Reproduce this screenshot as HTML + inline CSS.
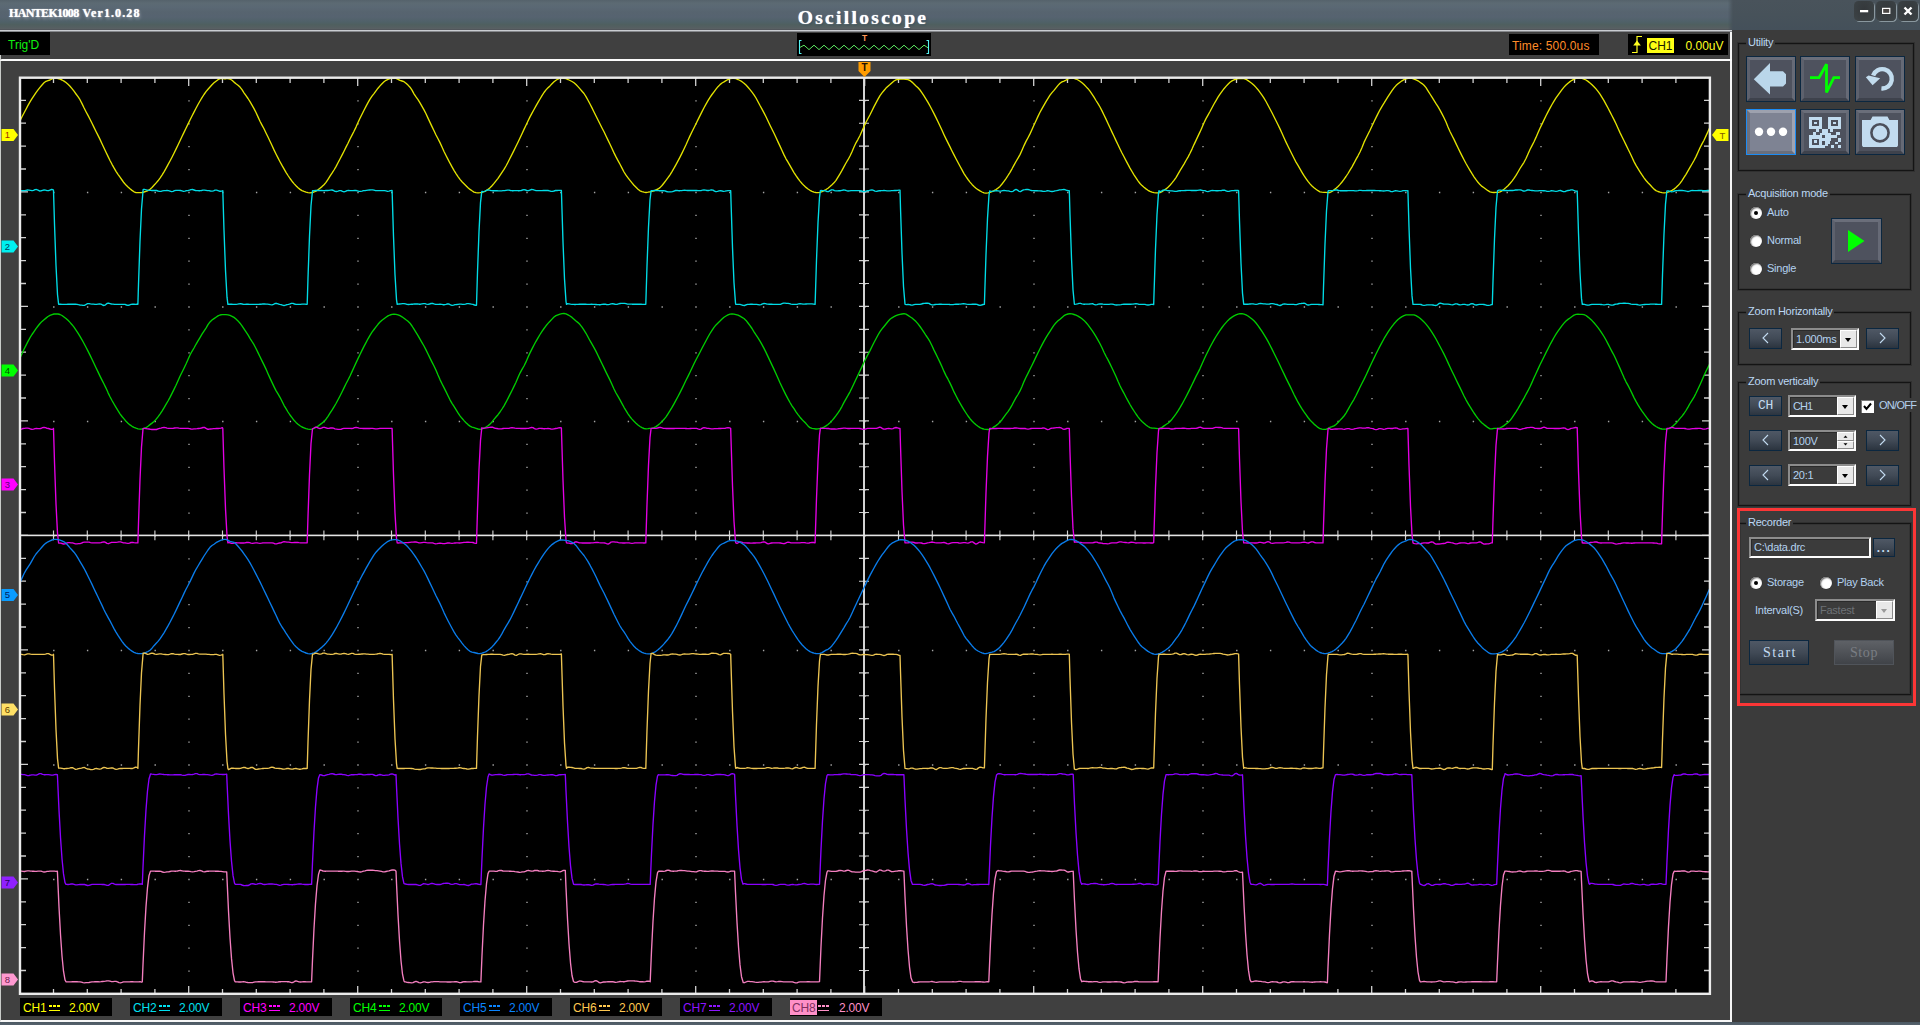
<!DOCTYPE html>
<html>
<head>
<meta charset="utf-8">
<title>HANTEK1008 Ver1.0.28 - Oscilloscope</title>
<style>
*{box-sizing:border-box;margin:0;padding:0}
html,body{width:1920px;height:1025px;overflow:hidden;background:#3b3b3b}
body{position:relative;font-family:"Liberation Sans",sans-serif;font-size:12px;color:#b9d6f2}
.abs{position:absolute}
#title{position:absolute;left:0;top:0;width:1920px;height:30px;
 background:linear-gradient(180deg,#55626b 0%,#5c6a73 10%,#5a6874 24%,#57646f 40%,#566370 57%,#4f6168 73%,#4f5f5f 82%,#555f61 92%,#596063 96%,#4c4f55 100%)}
#titleR{position:absolute;left:1728px;top:0;width:192px;height:30px;
 background:linear-gradient(180deg,#49535b 0%,#47525a 50%,#44505a 100%);
 -webkit-mask:linear-gradient(90deg,transparent 0,#000 5px);mask:linear-gradient(90deg,transparent 0,#000 5px)}
#ttext{position:absolute;left:9px;top:6px;font-family:"Liberation Serif",serif;font-weight:bold;font-size:12px;letter-spacing:0.3px;color:#fff;
 text-shadow:0 0 1px #fff,1px 2px 3px rgba(200,210,220,.45);white-space:pre}
#tt1{letter-spacing:-0.65px}#tt2{letter-spacing:1.1px}
#tcenter{position:absolute;left:797px;top:7px;width:132px;text-align:center;font-family:"Liberation Serif",serif;font-weight:bold;font-size:19.5px;letter-spacing:2.3px;color:#fff;
 text-shadow:0 0 1px #fff,1px 1px 2px rgba(40,60,80,.6);white-space:nowrap}
.wbtn{position:absolute;top:1px;width:20px;height:20px;border-radius:4.5px;background:radial-gradient(ellipse at 50% 40%,#34383b 0%,#3a4043 70%,#3e4548 100%);box-shadow:1px 1px 0 rgba(160,175,182,.75)}
#left{position:absolute;left:0;top:30px;width:1732px;height:992px;background:#404040;
 border-style:solid;border-width:0 2px 2px 1px;border-color:#f6f6f6 #f6f6f6 #f6f6f6 #c9ccc9}
#line1{position:absolute;left:0;top:30px;width:1732px;height:2px;background:linear-gradient(180deg,#c9ccd1 0 50%,#85878b 50% 100%)}
#line2{position:absolute;left:0;top:58.6px;width:1732px;height:2.4px;background:#fbfbfb;border-radius:2px 0 0 0}
#right{position:absolute;left:1732px;top:30px;width:188px;height:992px;background:#3b3b3b}
#bottom{position:absolute;left:0;top:1022px;width:1920px;height:3px;background:linear-gradient(180deg,#4b5862,#56626d)}
.sbox{position:absolute;top:34px;height:21px;background:#000;line-height:21px;white-space:nowrap}
.chbox{position:absolute;top:998px;width:92px;height:18px;background:#000;line-height:20px;overflow:hidden;white-space:nowrap;font-size:12px;padding-left:2px}
.chn.sel{margin-left:-2px;padding-left:2px;padding-right:2px;margin-right:-1px;position:relative;top:-1.3px;line-height:17.6px;overflow:hidden}
.chn{display:inline-block;height:15px;line-height:15px;padding:0 1px 0 1px;vertical-align:middle;letter-spacing:-0.2px}
.dc{display:inline-block;position:relative;width:11px;height:6px;border-bottom:1.6px solid;margin:0 0 1px 2px;vertical-align:middle}
.dc b{position:absolute;left:0;top:0;width:11px;height:1.2px;
 -webkit-mask:repeating-linear-gradient(90deg,#000 0 3px,transparent 3px 4px);mask:repeating-linear-gradient(90deg,#000 0 3px,transparent 3px 4px)}
.chv{position:absolute;left:49px;top:0;letter-spacing:-0.2px}
.grp{position:absolute;border:1px solid #141414;box-shadow:0 0 0 1px rgba(0,0,0,.18), inset 0 0 0 1px rgba(0,0,0,.12)}
.glab{position:absolute;height:14px;line-height:14px;background:#3b3b3b;padding:0 2px;font-size:11px;color:#bcd8f4;white-space:nowrap;letter-spacing:-0.25px}
.lab{position:absolute;font-size:11px;line-height:14px;color:#b4d2f0;white-space:nowrap;letter-spacing:-0.25px}
.ibtn{position:absolute;width:50px;height:46px;background:#0b2740;padding:1px}
.ibtn>i{display:block;width:100%;height:100%;background:#4e525e;border:3px solid;border-color:#6a6e7a #666a76 #3e424c #5d616d}
.ibtn.sel{background:#1c8cf4}
.ibtn.sel>i{background:#7e8393;border-color:#9da1ae #a0a4b2 #6a6f7c #6c707e}
.ibtn svg{position:absolute;left:0;top:0}
.sbtn{position:absolute;height:21px;border:1px solid #0b2740;background:linear-gradient(180deg,#4f5865 0%,#414a56 50%,#2b343f 100%);
 color:#c4dcf2;text-align:center;line-height:18px;font-size:12px}
.sbtn.dis{border-color:#50545a;background:linear-gradient(180deg,#5e6166 0%,#4e5156 55%,#404348 100%);color:#7a7e84}
.mono{font-family:"Liberation Mono",monospace}
.serif{font-family:"Liberation Serif",serif}
.combo{position:absolute;height:22px;background:#3b3b3b;border:2px solid;border-color:#8c8c8c #fdfdfd #fdfdfd #8c8c8c;box-shadow:inset 1px 1px 0 #2a2a2a}
.combo .tx{position:absolute;left:3px;top:2px;font-size:11px;line-height:14px;color:#b4d2f0;white-space:nowrap;letter-spacing:-0.25px}
.combo .dd{position:absolute;right:0;top:0;bottom:0;width:17px;background:#e8e8e8;border:1px solid;border-color:#fff #8a8a8a #8a8a8a #fff}
.combo .dd:after{content:"";position:absolute;left:3.5px;top:6.5px;border:3.5px solid transparent;border-top:4px solid #000;border-bottom:0}
.combo .dd.sp:after{display:none}
.combo.dis .tx{color:#6e7276}
.combo.dis .dd:after{border-top-color:#9a9a9a}
.radio{position:absolute;width:12px;height:12px;border-radius:50%;background:#fff;box-shadow:inset 1px 1px 1.5px #666, 0 0 0 0.5px #333;margin:0.5px}
.radio.on:after{content:"";position:absolute;left:4px;top:4px;width:4px;height:4px;border-radius:50%;background:#000}
</style>
</head>
<body>
<div id="title"></div><div id="titleR"></div>
<div id="ttext"><span id="tt1">HANTEK1008</span><span id="tt2"> Ver1.0.28</span></div>
<div id="tcenter">Oscilloscope</div>
<div class="wbtn" style="left:1854px"><svg width="20" height="20"><rect x="6" y="9" width="8.2" height="2.3" fill="#fff"/></svg></div>
<div class="wbtn" style="left:1876px"><svg width="20" height="20"><rect x="6.6" y="7.4" width="7.2" height="5" fill="#4a4644" stroke="#fff" stroke-width="1.2"/></svg></div>
<div class="wbtn" style="left:1898px"><svg width="20" height="20"><path d="M6.5 6.5L13.5 13.5M13.5 6.5L6.5 13.5" stroke="#fff" stroke-width="2.4"/></svg></div>

<div id="left"></div>
<div id="line1"></div>
<div id="line2"></div>
<div id="right"></div>
<div id="bottom"></div>

<!-- status bar -->
<div class="sbox" style="left:0;top:32px;width:50px;height:23px;line-height:27px;overflow:hidden;color:#10f010;padding-left:8px;font-size:12px">Trig'D</div>
<svg width="134" height="23" viewBox="0 0 134 23" style="position:absolute;left:797px;top:33px">
<rect width="134" height="23" fill="#000"/>
<path d="M4.5 7.5H2.5V20.5H4.5 M129.5 7.5H131.5V20.5H129.5" stroke="#58f4f4" stroke-width="1.1" fill="none"/>
<path d="M3 14.4 L7 12.2 L12 16.6 L17 12.2 L22 16.6 L27 12.2 L32 16.6 L37 12.2 L42 16.6 L47 12.2 L52 16.6 L57 12.2 L62 16.6 L67 12.2 L72 16.6 L77 12.2 L82 16.6 L87 12.2 L92 16.6 L97 12.2 L102 16.6 L107 12.2 L112 16.6 L117 12.2 L122 16.6 L127 12.2 L131 14.8" stroke="#5ce860" stroke-width="1" fill="none" stroke-linejoin="round"/>
<text x="67.5" y="8" font-family="Liberation Sans, sans-serif" font-size="8.5" font-weight="bold" text-anchor="middle" fill="#ff9a58">T</text>
</svg>
<div class="sbox" style="left:1509px;width:90px;color:#ff8c28;padding-left:3px;font-size:12px;line-height:25px;letter-spacing:0.15px;overflow:hidden">Time: 500.0us</div>
<div class="sbox" style="left:1628px;width:100px;color:#ffff20;font-size:12px">
 <svg width="14" height="21" style="position:absolute;left:3px;top:0"><path d="M1 18.5H6V2.5H11" stroke="#ffff20" stroke-width="1.2" fill="none"/><path d="M2.2 11.5L6 6.5L9.8 11.5Z" fill="#ffff20"/></svg>
 <span style="position:absolute;left:19px;top:4px;width:27px;height:14.5px;line-height:17.5px;background:#ffff14;color:#1a1a00;text-align:center;overflow:hidden">CH1</span>
 <span style="position:absolute;left:57.5px;top:2px">0.00uV</span>
</div>

<svg id="plot" width="1732" height="1025" viewBox="0 0 1732 1025" style="position:absolute;left:0;top:0">
<defs><clipPath id="cp"><rect x="20" y="78" width="1690" height="916"/></clipPath></defs>
<rect x="20" y="78" width="1690" height="916" fill="#000"/>
<path d="M19.3 78h1.4M53.1 78h1.4M86.9 78h1.4M120.7 78h1.4M154.5 78h1.4M188.3 78h1.4M222.1 78h1.4M255.9 78h1.4M289.7 78h1.4M323.5 78h1.4M357.3 78h1.4M391.1 78h1.4M424.9 78h1.4M458.7 78h1.4M492.5 78h1.4M526.3 78h1.4M560.1 78h1.4M593.9 78h1.4M627.7 78h1.4M661.5 78h1.4M695.3 78h1.4M729.1 78h1.4M762.9 78h1.4M796.7 78h1.4M830.5 78h1.4M864.3 78h1.4M898.1 78h1.4M931.9 78h1.4M965.7 78h1.4M999.5 78h1.4M1033.3 78h1.4M1067.1 78h1.4M1100.9 78h1.4M1134.7 78h1.4M1168.5 78h1.4M1202.3 78h1.4M1236.1 78h1.4M1269.9 78h1.4M1303.7 78h1.4M1337.5 78h1.4M1371.3 78h1.4M1405.1 78h1.4M1438.9 78h1.4M1472.7 78h1.4M1506.5 78h1.4M1540.3 78h1.4M1574.1 78h1.4M1607.9 78h1.4M1641.7 78h1.4M1675.5 78h1.4M1709.3 78h1.4M19.3 192.5h1.4M53.1 192.5h1.4M86.9 192.5h1.4M120.7 192.5h1.4M154.5 192.5h1.4M188.3 192.5h1.4M222.1 192.5h1.4M255.9 192.5h1.4M289.7 192.5h1.4M323.5 192.5h1.4M357.3 192.5h1.4M391.1 192.5h1.4M424.9 192.5h1.4M458.7 192.5h1.4M492.5 192.5h1.4M526.3 192.5h1.4M560.1 192.5h1.4M593.9 192.5h1.4M627.7 192.5h1.4M661.5 192.5h1.4M695.3 192.5h1.4M729.1 192.5h1.4M762.9 192.5h1.4M796.7 192.5h1.4M830.5 192.5h1.4M864.3 192.5h1.4M898.1 192.5h1.4M931.9 192.5h1.4M965.7 192.5h1.4M999.5 192.5h1.4M1033.3 192.5h1.4M1067.1 192.5h1.4M1100.9 192.5h1.4M1134.7 192.5h1.4M1168.5 192.5h1.4M1202.3 192.5h1.4M1236.1 192.5h1.4M1269.9 192.5h1.4M1303.7 192.5h1.4M1337.5 192.5h1.4M1371.3 192.5h1.4M1405.1 192.5h1.4M1438.9 192.5h1.4M1472.7 192.5h1.4M1506.5 192.5h1.4M1540.3 192.5h1.4M1574.1 192.5h1.4M1607.9 192.5h1.4M1641.7 192.5h1.4M1675.5 192.5h1.4M1709.3 192.5h1.4M19.3 307h1.4M53.1 307h1.4M86.9 307h1.4M120.7 307h1.4M154.5 307h1.4M188.3 307h1.4M222.1 307h1.4M255.9 307h1.4M289.7 307h1.4M323.5 307h1.4M357.3 307h1.4M391.1 307h1.4M424.9 307h1.4M458.7 307h1.4M492.5 307h1.4M526.3 307h1.4M560.1 307h1.4M593.9 307h1.4M627.7 307h1.4M661.5 307h1.4M695.3 307h1.4M729.1 307h1.4M762.9 307h1.4M796.7 307h1.4M830.5 307h1.4M864.3 307h1.4M898.1 307h1.4M931.9 307h1.4M965.7 307h1.4M999.5 307h1.4M1033.3 307h1.4M1067.1 307h1.4M1100.9 307h1.4M1134.7 307h1.4M1168.5 307h1.4M1202.3 307h1.4M1236.1 307h1.4M1269.9 307h1.4M1303.7 307h1.4M1337.5 307h1.4M1371.3 307h1.4M1405.1 307h1.4M1438.9 307h1.4M1472.7 307h1.4M1506.5 307h1.4M1540.3 307h1.4M1574.1 307h1.4M1607.9 307h1.4M1641.7 307h1.4M1675.5 307h1.4M1709.3 307h1.4M19.3 421.5h1.4M53.1 421.5h1.4M86.9 421.5h1.4M120.7 421.5h1.4M154.5 421.5h1.4M188.3 421.5h1.4M222.1 421.5h1.4M255.9 421.5h1.4M289.7 421.5h1.4M323.5 421.5h1.4M357.3 421.5h1.4M391.1 421.5h1.4M424.9 421.5h1.4M458.7 421.5h1.4M492.5 421.5h1.4M526.3 421.5h1.4M560.1 421.5h1.4M593.9 421.5h1.4M627.7 421.5h1.4M661.5 421.5h1.4M695.3 421.5h1.4M729.1 421.5h1.4M762.9 421.5h1.4M796.7 421.5h1.4M830.5 421.5h1.4M864.3 421.5h1.4M898.1 421.5h1.4M931.9 421.5h1.4M965.7 421.5h1.4M999.5 421.5h1.4M1033.3 421.5h1.4M1067.1 421.5h1.4M1100.9 421.5h1.4M1134.7 421.5h1.4M1168.5 421.5h1.4M1202.3 421.5h1.4M1236.1 421.5h1.4M1269.9 421.5h1.4M1303.7 421.5h1.4M1337.5 421.5h1.4M1371.3 421.5h1.4M1405.1 421.5h1.4M1438.9 421.5h1.4M1472.7 421.5h1.4M1506.5 421.5h1.4M1540.3 421.5h1.4M1574.1 421.5h1.4M1607.9 421.5h1.4M1641.7 421.5h1.4M1675.5 421.5h1.4M1709.3 421.5h1.4M19.3 536h1.4M53.1 536h1.4M86.9 536h1.4M120.7 536h1.4M154.5 536h1.4M188.3 536h1.4M222.1 536h1.4M255.9 536h1.4M289.7 536h1.4M323.5 536h1.4M357.3 536h1.4M391.1 536h1.4M424.9 536h1.4M458.7 536h1.4M492.5 536h1.4M526.3 536h1.4M560.1 536h1.4M593.9 536h1.4M627.7 536h1.4M661.5 536h1.4M695.3 536h1.4M729.1 536h1.4M762.9 536h1.4M796.7 536h1.4M830.5 536h1.4M864.3 536h1.4M898.1 536h1.4M931.9 536h1.4M965.7 536h1.4M999.5 536h1.4M1033.3 536h1.4M1067.1 536h1.4M1100.9 536h1.4M1134.7 536h1.4M1168.5 536h1.4M1202.3 536h1.4M1236.1 536h1.4M1269.9 536h1.4M1303.7 536h1.4M1337.5 536h1.4M1371.3 536h1.4M1405.1 536h1.4M1438.9 536h1.4M1472.7 536h1.4M1506.5 536h1.4M1540.3 536h1.4M1574.1 536h1.4M1607.9 536h1.4M1641.7 536h1.4M1675.5 536h1.4M1709.3 536h1.4M19.3 650.5h1.4M53.1 650.5h1.4M86.9 650.5h1.4M120.7 650.5h1.4M154.5 650.5h1.4M188.3 650.5h1.4M222.1 650.5h1.4M255.9 650.5h1.4M289.7 650.5h1.4M323.5 650.5h1.4M357.3 650.5h1.4M391.1 650.5h1.4M424.9 650.5h1.4M458.7 650.5h1.4M492.5 650.5h1.4M526.3 650.5h1.4M560.1 650.5h1.4M593.9 650.5h1.4M627.7 650.5h1.4M661.5 650.5h1.4M695.3 650.5h1.4M729.1 650.5h1.4M762.9 650.5h1.4M796.7 650.5h1.4M830.5 650.5h1.4M864.3 650.5h1.4M898.1 650.5h1.4M931.9 650.5h1.4M965.7 650.5h1.4M999.5 650.5h1.4M1033.3 650.5h1.4M1067.1 650.5h1.4M1100.9 650.5h1.4M1134.7 650.5h1.4M1168.5 650.5h1.4M1202.3 650.5h1.4M1236.1 650.5h1.4M1269.9 650.5h1.4M1303.7 650.5h1.4M1337.5 650.5h1.4M1371.3 650.5h1.4M1405.1 650.5h1.4M1438.9 650.5h1.4M1472.7 650.5h1.4M1506.5 650.5h1.4M1540.3 650.5h1.4M1574.1 650.5h1.4M1607.9 650.5h1.4M1641.7 650.5h1.4M1675.5 650.5h1.4M1709.3 650.5h1.4M19.3 765h1.4M53.1 765h1.4M86.9 765h1.4M120.7 765h1.4M154.5 765h1.4M188.3 765h1.4M222.1 765h1.4M255.9 765h1.4M289.7 765h1.4M323.5 765h1.4M357.3 765h1.4M391.1 765h1.4M424.9 765h1.4M458.7 765h1.4M492.5 765h1.4M526.3 765h1.4M560.1 765h1.4M593.9 765h1.4M627.7 765h1.4M661.5 765h1.4M695.3 765h1.4M729.1 765h1.4M762.9 765h1.4M796.7 765h1.4M830.5 765h1.4M864.3 765h1.4M898.1 765h1.4M931.9 765h1.4M965.7 765h1.4M999.5 765h1.4M1033.3 765h1.4M1067.1 765h1.4M1100.9 765h1.4M1134.7 765h1.4M1168.5 765h1.4M1202.3 765h1.4M1236.1 765h1.4M1269.9 765h1.4M1303.7 765h1.4M1337.5 765h1.4M1371.3 765h1.4M1405.1 765h1.4M1438.9 765h1.4M1472.7 765h1.4M1506.5 765h1.4M1540.3 765h1.4M1574.1 765h1.4M1607.9 765h1.4M1641.7 765h1.4M1675.5 765h1.4M1709.3 765h1.4M19.3 879.5h1.4M53.1 879.5h1.4M86.9 879.5h1.4M120.7 879.5h1.4M154.5 879.5h1.4M188.3 879.5h1.4M222.1 879.5h1.4M255.9 879.5h1.4M289.7 879.5h1.4M323.5 879.5h1.4M357.3 879.5h1.4M391.1 879.5h1.4M424.9 879.5h1.4M458.7 879.5h1.4M492.5 879.5h1.4M526.3 879.5h1.4M560.1 879.5h1.4M593.9 879.5h1.4M627.7 879.5h1.4M661.5 879.5h1.4M695.3 879.5h1.4M729.1 879.5h1.4M762.9 879.5h1.4M796.7 879.5h1.4M830.5 879.5h1.4M864.3 879.5h1.4M898.1 879.5h1.4M931.9 879.5h1.4M965.7 879.5h1.4M999.5 879.5h1.4M1033.3 879.5h1.4M1067.1 879.5h1.4M1100.9 879.5h1.4M1134.7 879.5h1.4M1168.5 879.5h1.4M1202.3 879.5h1.4M1236.1 879.5h1.4M1269.9 879.5h1.4M1303.7 879.5h1.4M1337.5 879.5h1.4M1371.3 879.5h1.4M1405.1 879.5h1.4M1438.9 879.5h1.4M1472.7 879.5h1.4M1506.5 879.5h1.4M1540.3 879.5h1.4M1574.1 879.5h1.4M1607.9 879.5h1.4M1641.7 879.5h1.4M1675.5 879.5h1.4M1709.3 879.5h1.4M19.3 994h1.4M53.1 994h1.4M86.9 994h1.4M120.7 994h1.4M154.5 994h1.4M188.3 994h1.4M222.1 994h1.4M255.9 994h1.4M289.7 994h1.4M323.5 994h1.4M357.3 994h1.4M391.1 994h1.4M424.9 994h1.4M458.7 994h1.4M492.5 994h1.4M526.3 994h1.4M560.1 994h1.4M593.9 994h1.4M627.7 994h1.4M661.5 994h1.4M695.3 994h1.4M729.1 994h1.4M762.9 994h1.4M796.7 994h1.4M830.5 994h1.4M864.3 994h1.4M898.1 994h1.4M931.9 994h1.4M965.7 994h1.4M999.5 994h1.4M1033.3 994h1.4M1067.1 994h1.4M1100.9 994h1.4M1134.7 994h1.4M1168.5 994h1.4M1202.3 994h1.4M1236.1 994h1.4M1269.9 994h1.4M1303.7 994h1.4M1337.5 994h1.4M1371.3 994h1.4M1405.1 994h1.4M1438.9 994h1.4M1472.7 994h1.4M1506.5 994h1.4M1540.3 994h1.4M1574.1 994h1.4M1607.9 994h1.4M1641.7 994h1.4M1675.5 994h1.4M1709.3 994h1.4M19.3 78h1.4M19.3 100.9h1.4M19.3 123.8h1.4M19.3 146.7h1.4M19.3 169.6h1.4M19.3 192.5h1.4M19.3 215.4h1.4M19.3 238.3h1.4M19.3 261.2h1.4M19.3 284.1h1.4M19.3 307h1.4M19.3 329.9h1.4M19.3 352.8h1.4M19.3 375.7h1.4M19.3 398.6h1.4M19.3 421.5h1.4M19.3 444.4h1.4M19.3 467.3h1.4M19.3 490.2h1.4M19.3 513.1h1.4M19.3 536h1.4M19.3 558.9h1.4M19.3 581.8h1.4M19.3 604.7h1.4M19.3 627.6h1.4M19.3 650.5h1.4M19.3 673.4h1.4M19.3 696.3h1.4M19.3 719.2h1.4M19.3 742.1h1.4M19.3 765h1.4M19.3 787.9h1.4M19.3 810.8h1.4M19.3 833.7h1.4M19.3 856.6h1.4M19.3 879.5h1.4M19.3 902.4h1.4M19.3 925.3h1.4M19.3 948.2h1.4M19.3 971.1h1.4M19.3 994h1.4M188.3 78h1.4M188.3 100.9h1.4M188.3 123.8h1.4M188.3 146.7h1.4M188.3 169.6h1.4M188.3 192.5h1.4M188.3 215.4h1.4M188.3 238.3h1.4M188.3 261.2h1.4M188.3 284.1h1.4M188.3 307h1.4M188.3 329.9h1.4M188.3 352.8h1.4M188.3 375.7h1.4M188.3 398.6h1.4M188.3 421.5h1.4M188.3 444.4h1.4M188.3 467.3h1.4M188.3 490.2h1.4M188.3 513.1h1.4M188.3 536h1.4M188.3 558.9h1.4M188.3 581.8h1.4M188.3 604.7h1.4M188.3 627.6h1.4M188.3 650.5h1.4M188.3 673.4h1.4M188.3 696.3h1.4M188.3 719.2h1.4M188.3 742.1h1.4M188.3 765h1.4M188.3 787.9h1.4M188.3 810.8h1.4M188.3 833.7h1.4M188.3 856.6h1.4M188.3 879.5h1.4M188.3 902.4h1.4M188.3 925.3h1.4M188.3 948.2h1.4M188.3 971.1h1.4M188.3 994h1.4M357.3 78h1.4M357.3 100.9h1.4M357.3 123.8h1.4M357.3 146.7h1.4M357.3 169.6h1.4M357.3 192.5h1.4M357.3 215.4h1.4M357.3 238.3h1.4M357.3 261.2h1.4M357.3 284.1h1.4M357.3 307h1.4M357.3 329.9h1.4M357.3 352.8h1.4M357.3 375.7h1.4M357.3 398.6h1.4M357.3 421.5h1.4M357.3 444.4h1.4M357.3 467.3h1.4M357.3 490.2h1.4M357.3 513.1h1.4M357.3 536h1.4M357.3 558.9h1.4M357.3 581.8h1.4M357.3 604.7h1.4M357.3 627.6h1.4M357.3 650.5h1.4M357.3 673.4h1.4M357.3 696.3h1.4M357.3 719.2h1.4M357.3 742.1h1.4M357.3 765h1.4M357.3 787.9h1.4M357.3 810.8h1.4M357.3 833.7h1.4M357.3 856.6h1.4M357.3 879.5h1.4M357.3 902.4h1.4M357.3 925.3h1.4M357.3 948.2h1.4M357.3 971.1h1.4M357.3 994h1.4M526.3 78h1.4M526.3 100.9h1.4M526.3 123.8h1.4M526.3 146.7h1.4M526.3 169.6h1.4M526.3 192.5h1.4M526.3 215.4h1.4M526.3 238.3h1.4M526.3 261.2h1.4M526.3 284.1h1.4M526.3 307h1.4M526.3 329.9h1.4M526.3 352.8h1.4M526.3 375.7h1.4M526.3 398.6h1.4M526.3 421.5h1.4M526.3 444.4h1.4M526.3 467.3h1.4M526.3 490.2h1.4M526.3 513.1h1.4M526.3 536h1.4M526.3 558.9h1.4M526.3 581.8h1.4M526.3 604.7h1.4M526.3 627.6h1.4M526.3 650.5h1.4M526.3 673.4h1.4M526.3 696.3h1.4M526.3 719.2h1.4M526.3 742.1h1.4M526.3 765h1.4M526.3 787.9h1.4M526.3 810.8h1.4M526.3 833.7h1.4M526.3 856.6h1.4M526.3 879.5h1.4M526.3 902.4h1.4M526.3 925.3h1.4M526.3 948.2h1.4M526.3 971.1h1.4M526.3 994h1.4M695.3 78h1.4M695.3 100.9h1.4M695.3 123.8h1.4M695.3 146.7h1.4M695.3 169.6h1.4M695.3 192.5h1.4M695.3 215.4h1.4M695.3 238.3h1.4M695.3 261.2h1.4M695.3 284.1h1.4M695.3 307h1.4M695.3 329.9h1.4M695.3 352.8h1.4M695.3 375.7h1.4M695.3 398.6h1.4M695.3 421.5h1.4M695.3 444.4h1.4M695.3 467.3h1.4M695.3 490.2h1.4M695.3 513.1h1.4M695.3 536h1.4M695.3 558.9h1.4M695.3 581.8h1.4M695.3 604.7h1.4M695.3 627.6h1.4M695.3 650.5h1.4M695.3 673.4h1.4M695.3 696.3h1.4M695.3 719.2h1.4M695.3 742.1h1.4M695.3 765h1.4M695.3 787.9h1.4M695.3 810.8h1.4M695.3 833.7h1.4M695.3 856.6h1.4M695.3 879.5h1.4M695.3 902.4h1.4M695.3 925.3h1.4M695.3 948.2h1.4M695.3 971.1h1.4M695.3 994h1.4M864.3 78h1.4M864.3 100.9h1.4M864.3 123.8h1.4M864.3 146.7h1.4M864.3 169.6h1.4M864.3 192.5h1.4M864.3 215.4h1.4M864.3 238.3h1.4M864.3 261.2h1.4M864.3 284.1h1.4M864.3 307h1.4M864.3 329.9h1.4M864.3 352.8h1.4M864.3 375.7h1.4M864.3 398.6h1.4M864.3 421.5h1.4M864.3 444.4h1.4M864.3 467.3h1.4M864.3 490.2h1.4M864.3 513.1h1.4M864.3 536h1.4M864.3 558.9h1.4M864.3 581.8h1.4M864.3 604.7h1.4M864.3 627.6h1.4M864.3 650.5h1.4M864.3 673.4h1.4M864.3 696.3h1.4M864.3 719.2h1.4M864.3 742.1h1.4M864.3 765h1.4M864.3 787.9h1.4M864.3 810.8h1.4M864.3 833.7h1.4M864.3 856.6h1.4M864.3 879.5h1.4M864.3 902.4h1.4M864.3 925.3h1.4M864.3 948.2h1.4M864.3 971.1h1.4M864.3 994h1.4M1033.3 78h1.4M1033.3 100.9h1.4M1033.3 123.8h1.4M1033.3 146.7h1.4M1033.3 169.6h1.4M1033.3 192.5h1.4M1033.3 215.4h1.4M1033.3 238.3h1.4M1033.3 261.2h1.4M1033.3 284.1h1.4M1033.3 307h1.4M1033.3 329.9h1.4M1033.3 352.8h1.4M1033.3 375.7h1.4M1033.3 398.6h1.4M1033.3 421.5h1.4M1033.3 444.4h1.4M1033.3 467.3h1.4M1033.3 490.2h1.4M1033.3 513.1h1.4M1033.3 536h1.4M1033.3 558.9h1.4M1033.3 581.8h1.4M1033.3 604.7h1.4M1033.3 627.6h1.4M1033.3 650.5h1.4M1033.3 673.4h1.4M1033.3 696.3h1.4M1033.3 719.2h1.4M1033.3 742.1h1.4M1033.3 765h1.4M1033.3 787.9h1.4M1033.3 810.8h1.4M1033.3 833.7h1.4M1033.3 856.6h1.4M1033.3 879.5h1.4M1033.3 902.4h1.4M1033.3 925.3h1.4M1033.3 948.2h1.4M1033.3 971.1h1.4M1033.3 994h1.4M1202.3 78h1.4M1202.3 100.9h1.4M1202.3 123.8h1.4M1202.3 146.7h1.4M1202.3 169.6h1.4M1202.3 192.5h1.4M1202.3 215.4h1.4M1202.3 238.3h1.4M1202.3 261.2h1.4M1202.3 284.1h1.4M1202.3 307h1.4M1202.3 329.9h1.4M1202.3 352.8h1.4M1202.3 375.7h1.4M1202.3 398.6h1.4M1202.3 421.5h1.4M1202.3 444.4h1.4M1202.3 467.3h1.4M1202.3 490.2h1.4M1202.3 513.1h1.4M1202.3 536h1.4M1202.3 558.9h1.4M1202.3 581.8h1.4M1202.3 604.7h1.4M1202.3 627.6h1.4M1202.3 650.5h1.4M1202.3 673.4h1.4M1202.3 696.3h1.4M1202.3 719.2h1.4M1202.3 742.1h1.4M1202.3 765h1.4M1202.3 787.9h1.4M1202.3 810.8h1.4M1202.3 833.7h1.4M1202.3 856.6h1.4M1202.3 879.5h1.4M1202.3 902.4h1.4M1202.3 925.3h1.4M1202.3 948.2h1.4M1202.3 971.1h1.4M1202.3 994h1.4M1371.3 78h1.4M1371.3 100.9h1.4M1371.3 123.8h1.4M1371.3 146.7h1.4M1371.3 169.6h1.4M1371.3 192.5h1.4M1371.3 215.4h1.4M1371.3 238.3h1.4M1371.3 261.2h1.4M1371.3 284.1h1.4M1371.3 307h1.4M1371.3 329.9h1.4M1371.3 352.8h1.4M1371.3 375.7h1.4M1371.3 398.6h1.4M1371.3 421.5h1.4M1371.3 444.4h1.4M1371.3 467.3h1.4M1371.3 490.2h1.4M1371.3 513.1h1.4M1371.3 536h1.4M1371.3 558.9h1.4M1371.3 581.8h1.4M1371.3 604.7h1.4M1371.3 627.6h1.4M1371.3 650.5h1.4M1371.3 673.4h1.4M1371.3 696.3h1.4M1371.3 719.2h1.4M1371.3 742.1h1.4M1371.3 765h1.4M1371.3 787.9h1.4M1371.3 810.8h1.4M1371.3 833.7h1.4M1371.3 856.6h1.4M1371.3 879.5h1.4M1371.3 902.4h1.4M1371.3 925.3h1.4M1371.3 948.2h1.4M1371.3 971.1h1.4M1371.3 994h1.4M1540.3 78h1.4M1540.3 100.9h1.4M1540.3 123.8h1.4M1540.3 146.7h1.4M1540.3 169.6h1.4M1540.3 192.5h1.4M1540.3 215.4h1.4M1540.3 238.3h1.4M1540.3 261.2h1.4M1540.3 284.1h1.4M1540.3 307h1.4M1540.3 329.9h1.4M1540.3 352.8h1.4M1540.3 375.7h1.4M1540.3 398.6h1.4M1540.3 421.5h1.4M1540.3 444.4h1.4M1540.3 467.3h1.4M1540.3 490.2h1.4M1540.3 513.1h1.4M1540.3 536h1.4M1540.3 558.9h1.4M1540.3 581.8h1.4M1540.3 604.7h1.4M1540.3 627.6h1.4M1540.3 650.5h1.4M1540.3 673.4h1.4M1540.3 696.3h1.4M1540.3 719.2h1.4M1540.3 742.1h1.4M1540.3 765h1.4M1540.3 787.9h1.4M1540.3 810.8h1.4M1540.3 833.7h1.4M1540.3 856.6h1.4M1540.3 879.5h1.4M1540.3 902.4h1.4M1540.3 925.3h1.4M1540.3 948.2h1.4M1540.3 971.1h1.4M1540.3 994h1.4M1709.3 78h1.4M1709.3 100.9h1.4M1709.3 123.8h1.4M1709.3 146.7h1.4M1709.3 169.6h1.4M1709.3 192.5h1.4M1709.3 215.4h1.4M1709.3 238.3h1.4M1709.3 261.2h1.4M1709.3 284.1h1.4M1709.3 307h1.4M1709.3 329.9h1.4M1709.3 352.8h1.4M1709.3 375.7h1.4M1709.3 398.6h1.4M1709.3 421.5h1.4M1709.3 444.4h1.4M1709.3 467.3h1.4M1709.3 490.2h1.4M1709.3 513.1h1.4M1709.3 536h1.4M1709.3 558.9h1.4M1709.3 581.8h1.4M1709.3 604.7h1.4M1709.3 627.6h1.4M1709.3 650.5h1.4M1709.3 673.4h1.4M1709.3 696.3h1.4M1709.3 719.2h1.4M1709.3 742.1h1.4M1709.3 765h1.4M1709.3 787.9h1.4M1709.3 810.8h1.4M1709.3 833.7h1.4M1709.3 856.6h1.4M1709.3 879.5h1.4M1709.3 902.4h1.4M1709.3 925.3h1.4M1709.3 948.2h1.4M1709.3 971.1h1.4M1709.3 994h1.4" stroke="#a4a4a4" stroke-width="1.3" fill="none"/>
<path d="M53.5 78v5M53.5 994v-5M87.3 78v5M87.3 994v-5M121.1 78v5M121.1 994v-5M154.9 78v5M154.9 994v-5M188.7 78v8M188.7 994v-8M222.5 78v5M222.5 994v-5M256.3 78v5M256.3 994v-5M290.1 78v5M290.1 994v-5M323.9 78v5M323.9 994v-5M357.7 78v8M357.7 994v-8M391.5 78v5M391.5 994v-5M425.3 78v5M425.3 994v-5M459.1 78v5M459.1 994v-5M492.9 78v5M492.9 994v-5M526.7 78v8M526.7 994v-8M560.5 78v5M560.5 994v-5M594.3 78v5M594.3 994v-5M628.1 78v5M628.1 994v-5M661.9 78v5M661.9 994v-5M695.7 78v8M695.7 994v-8M729.5 78v5M729.5 994v-5M763.3 78v5M763.3 994v-5M797.1 78v5M797.1 994v-5M830.9 78v5M830.9 994v-5M864.7 78v8M864.7 994v-8M898.5 78v5M898.5 994v-5M932.3 78v5M932.3 994v-5M966.1 78v5M966.1 994v-5M999.9 78v5M999.9 994v-5M1033.7 78v8M1033.7 994v-8M1067.5 78v5M1067.5 994v-5M1101.3 78v5M1101.3 994v-5M1135.1 78v5M1135.1 994v-5M1168.9 78v5M1168.9 994v-5M1202.7 78v8M1202.7 994v-8M1236.5 78v5M1236.5 994v-5M1270.3 78v5M1270.3 994v-5M1304.1 78v5M1304.1 994v-5M1337.9 78v5M1337.9 994v-5M1371.7 78v8M1371.7 994v-8M1405.5 78v5M1405.5 994v-5M1439.3 78v5M1439.3 994v-5M1473.1 78v5M1473.1 994v-5M1506.9 78v5M1506.9 994v-5M1540.7 78v8M1540.7 994v-8M1574.5 78v5M1574.5 994v-5M1608.3 78v5M1608.3 994v-5M1642.1 78v5M1642.1 994v-5M1675.9 78v5M1675.9 994v-5M20 100.3h6M1710 100.3h-6M20 123.2h6M1710 123.2h-6M20 146.1h6M1710 146.1h-6M20 169h6M1710 169h-6M20 191.9h8M1710 191.9h-8M20 214.8h6M1710 214.8h-6M20 237.7h6M1710 237.7h-6M20 260.6h6M1710 260.6h-6M20 283.5h6M1710 283.5h-6M20 306.4h8M1710 306.4h-8M20 329.3h6M1710 329.3h-6M20 352.2h6M1710 352.2h-6M20 375.1h6M1710 375.1h-6M20 398h6M1710 398h-6M20 420.9h8M1710 420.9h-8M20 443.8h6M1710 443.8h-6M20 466.7h6M1710 466.7h-6M20 489.6h6M1710 489.6h-6M20 512.5h6M1710 512.5h-6M20 535.4h8M1710 535.4h-8M20 558.3h6M1710 558.3h-6M20 581.2h6M1710 581.2h-6M20 604.1h6M1710 604.1h-6M20 627h6M1710 627h-6M20 649.9h8M1710 649.9h-8M20 672.8h6M1710 672.8h-6M20 695.7h6M1710 695.7h-6M20 718.6h6M1710 718.6h-6M20 741.5h6M1710 741.5h-6M20 764.4h8M1710 764.4h-8M20 787.3h6M1710 787.3h-6M20 810.2h6M1710 810.2h-6M20 833.1h6M1710 833.1h-6M20 856h6M1710 856h-6M20 878.9h8M1710 878.9h-8M20 901.8h6M1710 901.8h-6M20 924.7h6M1710 924.7h-6M20 947.6h6M1710 947.6h-6M20 970.5h6M1710 970.5h-6" stroke="#d0d0d0" stroke-width="1.3" fill="none"/>
<path d="M53.5 530.6v9.6M87.3 530.6v9.6M121.1 530.6v9.6M154.9 530.6v9.6M188.7 530.6v9.6M222.5 530.6v9.6M256.3 530.6v9.6M290.1 530.6v9.6M323.9 530.6v9.6M357.7 530.6v9.6M391.5 530.6v9.6M425.3 530.6v9.6M459.1 530.6v9.6M492.9 530.6v9.6M526.7 530.6v9.6M560.5 530.6v9.6M594.3 530.6v9.6M628.1 530.6v9.6M661.9 530.6v9.6M695.7 530.6v9.6M729.5 530.6v9.6M763.3 530.6v9.6M797.1 530.6v9.6M830.9 530.6v9.6M898.5 530.6v9.6M932.3 530.6v9.6M966.1 530.6v9.6M999.9 530.6v9.6M1033.7 530.6v9.6M1067.5 530.6v9.6M1101.3 530.6v9.6M1135.1 530.6v9.6M1168.9 530.6v9.6M1202.7 530.6v9.6M1236.5 530.6v9.6M1270.3 530.6v9.6M1304.1 530.6v9.6M1337.9 530.6v9.6M1371.7 530.6v9.6M1405.5 530.6v9.6M1439.3 530.6v9.6M1473.1 530.6v9.6M1506.9 530.6v9.6M1540.7 530.6v9.6M1574.5 530.6v9.6M1608.3 530.6v9.6M1642.1 530.6v9.6M1675.9 530.6v9.6M859 100.3h10M859 123.2h10M859 146.1h10M859 169h10M859 191.9h10M859 214.8h10M859 237.7h10M859 260.6h10M859 283.5h10M859 306.4h10M859 329.3h10M859 352.2h10M859 375.1h10M859 398h10M859 420.9h10M859 443.8h10M859 466.7h10M859 489.6h10M859 512.5h10M859 558.3h10M859 581.2h10M859 604.1h10M859 627h10M859 649.9h10M859 672.8h10M859 695.7h10M859 718.6h10M859 741.5h10M859 764.4h10M859 787.3h10M859 810.2h10M859 833.1h10M859 856h10M859 878.9h10M859 901.8h10M859 924.7h10M859 947.6h10M859 970.5h10" stroke="#cfcfcf" stroke-width="1.15" fill="none"/>
<rect x="863.05" y="78" width="1.9" height="916" fill="#dedede"/>
<rect x="20" y="534.6" width="1690" height="1.6" fill="#e4e4e4"/>
<g clip-path="url(#cp)" fill="none" stroke-width="1.35" stroke-linejoin="round">
<path d="M20 120.6 L22 116.7 L24 113 L26 109.2 L28 105.4 L30 101.8 L32 98.6 L34 95.6 L36 92.6 L38 89.9 L40 87.4 L42 85 L44 82.8 L46 81.3 L48 80.6 L50 80 L52 79 L54 78 L56 77.9 L58 78.5 L60 79.2 L62 80 L64 81.1 L66 82.5 L68 84.2 L70 86.2 L72 88.6 L74 91.2 L76 94 L78 96.7 L80 99.7 L82 103.6 L84 107.8 L86 111.7 L88 115.4 L90 119.3 L92 123.3 L94 127.4 L96 131.5 L98 135.4 L100 139.4 L102 143.7 L104 148 L106 152.2 L108 156.4 L110 160.5 L112 164.3 L114 167.9 L116 171.3 L118 174.3 L120 177.1 L122 180 L124 182.8 L126 185.1 L128 187.1 L130 188.8 L132 190.4 L134 191.8 L136 192.6 L138 192.7 L140 192.6 L142 192.5 L144 192 L146 191.3 L148 190.5 L150 189.3 L152 187.5 L154 185.3 L156 183.1 L158 180.8 L160 178.1 L162 175.1 L164 171.8 L166 168.3 L168 164.7 L170 161 L172 157.2 L174 153.2 L176 149.1 L178 145 L180 140.7 L182 136.5 L184 132.4 L186 128.2 L188 124.1 L190 120 L192 116 L194 112.1 L196 108.3 L198 104.5 L200 101 L202 97.7 L204 94.5 L206 91.6 L208 89.2 L210 87 L212 84.8 L214 82.8 L216 81.2 L218 79.7 L220 78.6 L222 78.4 L224 78.7 L226 78.7 L228 78.6 L230 79 L232 80.3 L234 82.1 L236 83.7 L238 85.2 L240 87.1 L242 89.7 L244 92.8 L246 95.7 L248 98.5 L250 101.7 L252 105.1 L254 108.6 L256 112.5 L258 116.9 L260 121.2 L262 125.1 L264 128.8 L266 133 L268 137 L270 141.2 L272 145.5 L274 149.9 L276 154 L278 157.9 L280 161.7 L282 165.4 L284 168.9 L286 172.3 L288 175.5 L290 178.5 L292 181.2 L294 183.6 L296 185.8 L298 187.8 L300 189.4 L302 190.6 L304 191.4 L306 192.1 L308 192.6 L310 192.8 L312 192.5 L314 192 L316 191.1 L318 189.8 L320 188.2 L322 186.6 L324 184.7 L326 182.4 L328 179.3 L330 176.2 L332 173.2 L334 170 L336 166.6 L338 162.8 L340 159 L342 155.1 L344 151.2 L346 147.1 L348 143.2 L350 139 L352 135.1 L354 131.3 L356 127.1 L358 122.5 L360 118.2 L362 114.2 L364 110.2 L366 106.4 L368 102.6 L370 99.1 L372 96.1 L374 93.6 L376 90.9 L378 88.2 L380 85.9 L382 83.7 L384 81.7 L386 80.3 L388 79.3 L390 78.6 L392 78.2 L394 78.2 L396 78.4 L398 79.3 L400 80.4 L402 81 L404 81.7 L406 83.2 L408 85.1 L410 87.2 L412 90.2 L414 93.8 L416 96.9 L418 99.7 L420 102.8 L422 106.3 L424 109.9 L426 113.8 L428 118.1 L430 122.4 L432 126.6 L434 130.8 L436 135 L438 138.7 L440 142.6 L442 147 L444 151.5 L446 155.5 L448 159.4 L450 163.2 L452 166.8 L454 170.3 L456 173.6 L458 176.6 L460 179.4 L462 181.8 L464 183.7 L466 185.7 L468 187.7 L470 189.4 L472 190.8 L474 192.1 L476 192.7 L478 192.8 L480 192.6 L482 192.3 L484 191.7 L486 190.8 L488 189.4 L490 187.7 L492 185.7 L494 183.4 L496 180.9 L498 178.3 L500 175.3 L502 172.4 L504 169.4 L506 166 L508 162.2 L510 158.3 L512 154.4 L514 150.4 L516 146.3 L518 142.2 L520 138 L522 133.7 L524 129.4 L526 125.2 L528 121 L530 116.9 L532 113.1 L534 109.5 L536 105.9 L538 102.4 L540 99 L542 95.7 L544 92.5 L546 89.9 L548 87.8 L550 85.9 L552 83.8 L554 81.7 L556 80.3 L558 79 L560 78.2 L562 78 L564 78.3 L566 78.7 L568 79.5 L570 80.5 L572 81.5 L574 82.8 L576 84.5 L578 86.6 L580 88.9 L582 91.2 L584 93.5 L586 96.6 L588 100.3 L590 104 L592 107.9 L594 112 L596 116 L598 120 L600 124 L602 128 L604 131.8 L606 136 L608 140.1 L610 144.2 L612 148.5 L614 152.9 L616 156.9 L618 160.6 L620 164.3 L622 168.1 L624 172 L626 175.2 L628 177.8 L630 180.3 L632 182.8 L634 185.2 L636 187.2 L638 189.2 L640 190.8 L642 191.7 L644 192.2 L646 192.5 L648 192.2 L650 191.8 L652 191.4 L654 190.8 L656 189.8 L658 189 L660 187.6 L662 185.5 L664 183 L666 180.4 L668 177.7 L670 174.8 L672 171.6 L674 168.2 L676 164.6 L678 160.9 L680 157.1 L682 153.1 L684 149 L686 144.8 L688 140.3 L690 135.9 L692 131.8 L694 127.8 L696 123.7 L698 119.6 L700 115.6 L702 111.6 L704 107.8 L706 104.1 L708 100.7 L710 97.4 L712 94.5 L714 91.8 L716 89.2 L718 86.7 L720 84.6 L722 83 L724 81.9 L726 80.7 L728 79.5 L730 78.7 L732 78.4 L734 78.3 L736 78.7 L738 79.5 L740 80.5 L742 81.7 L744 83.2 L746 85 L748 87.2 L750 89.6 L752 92.2 L754 94.9 L756 98 L758 101.7 L760 105.5 L762 109.1 L764 112.9 L766 116.8 L768 121 L770 125.2 L772 129.3 L774 133.3 L776 137.5 L778 141.9 L780 146.1 L782 150.5 L784 154.9 L786 158.8 L788 162.2 L790 165.7 L792 169.2 L794 172.6 L796 175.7 L798 178.5 L800 181.1 L802 183.5 L804 185.6 L806 187.4 L808 189 L810 190.3 L812 191.3 L814 192.1 L816 192.5 L818 192.6 L820 192.4 L822 191.7 L824 190.7 L826 189.5 L828 188.2 L830 186.5 L832 184.7 L834 182.8 L836 180.3 L838 177.1 L840 173.8 L842 170.4 L844 166.6 L846 163 L848 159.7 L850 156 L852 151.7 L854 147 L856 142.8 L858 139.3 L860 135.5 L862 131 L864 126.4 L866 122.2 L868 118.5 L870 114.8 L872 110.7 L874 106.6 L876 102.9 L878 99.1 L880 95.6 L882 92.9 L884 90.5 L886 88.1 L888 86.3 L890 84.6 L892 82.7 L894 81 L896 79.8 L898 79.3 L900 79 L902 78.9 L904 79 L906 79.4 L908 79.7 L910 80.5 L912 82.1 L914 84 L916 85.9 L918 87.7 L920 90 L922 92.8 L924 95.9 L926 99.1 L928 102.4 L930 106 L932 109.7 L934 113.6 L936 117.6 L938 121.8 L940 126 L942 130.3 L944 134.7 L946 138.9 L948 142.9 L950 146.9 L952 151 L954 154.9 L956 158.7 L958 162.5 L960 166.2 L962 169.9 L964 173.6 L966 176.7 L968 179.5 L970 182.1 L972 184.4 L974 186.4 L976 188.2 L978 189.7 L980 190.9 L982 192 L984 192.9 L986 193.2 L988 192.8 L990 192.3 L992 191.6 L994 190.7 L996 189.5 L998 188.1 L1000 186.4 L1002 184 L1004 181.3 L1006 178.6 L1008 175.5 L1010 172.3 L1012 168.8 L1014 165.1 L1016 161.5 L1018 158.2 L1020 154.6 L1022 150.2 L1024 145.6 L1026 141.4 L1028 137.7 L1030 133.9 L1032 129.5 L1034 125 L1036 120.8 L1038 116.4 L1040 112.3 L1042 108.6 L1044 105.1 L1046 101.6 L1048 98.3 L1050 95.2 L1052 92.6 L1054 90.4 L1056 87.9 L1058 85.4 L1060 83.3 L1062 81.9 L1064 81.1 L1066 80.1 L1068 78.8 L1070 78.1 L1072 78.1 L1074 78.4 L1076 79 L1078 80 L1080 81.3 L1082 82.8 L1084 84.5 L1086 86.6 L1088 88.7 L1090 91.2 L1092 94.1 L1094 97.2 L1096 100.5 L1098 103.6 L1100 107 L1102 110.9 L1104 115 L1106 119.1 L1108 123.5 L1110 127.8 L1112 132.1 L1114 136.3 L1116 140.6 L1118 144.8 L1120 149 L1122 153 L1124 156.7 L1126 160.6 L1128 164.4 L1130 168.1 L1132 171.5 L1134 174.8 L1136 177.8 L1138 180.8 L1140 183.5 L1142 185.6 L1144 187.3 L1146 188.9 L1148 190.3 L1150 191.4 L1152 192.2 L1154 192.6 L1156 192.8 L1158 192.9 L1160 192.6 L1162 191.6 L1164 190.3 L1166 188.9 L1168 187.2 L1170 185.2 L1172 182.9 L1174 180.4 L1176 177.6 L1178 174.1 L1180 170.6 L1182 167.4 L1184 164.1 L1186 160.5 L1188 157.1 L1190 153.3 L1192 149.1 L1194 144.6 L1196 140.4 L1198 136.1 L1200 131.9 L1202 127.4 L1204 122.7 L1206 118.6 L1208 115.1 L1210 111.5 L1212 107.7 L1214 104 L1216 100.6 L1218 97.2 L1220 94.1 L1222 91.3 L1224 88.7 L1226 86.4 L1228 84.2 L1230 82.3 L1232 80.9 L1234 79.9 L1236 79.1 L1238 78.6 L1240 78.5 L1242 78.4 L1244 78.6 L1246 79.3 L1248 80.6 L1250 82 L1252 83.5 L1254 85.3 L1256 87.4 L1258 89.7 L1260 92.4 L1262 95.2 L1264 98.2 L1266 101.5 L1268 105.2 L1270 109 L1272 112.8 L1274 116.8 L1276 120.8 L1278 124.8 L1280 128.9 L1282 133.3 L1284 137.8 L1286 142.1 L1288 146.2 L1290 150.3 L1292 154.3 L1294 158.3 L1296 162.1 L1298 165.4 L1300 168.8 L1302 172.3 L1304 175.7 L1306 178.6 L1308 181.4 L1310 183.9 L1312 186 L1314 187.7 L1316 189.3 L1318 190.7 L1320 191.8 L1322 192.2 L1324 192.3 L1326 192.4 L1328 192.7 L1330 192.5 L1332 191.4 L1334 189.9 L1336 188.3 L1338 186.5 L1340 184.4 L1342 182 L1344 179.3 L1346 176.5 L1348 173.5 L1350 170.2 L1352 166.8 L1354 163.2 L1356 159.4 L1358 155.8 L1360 152 L1362 147.4 L1364 142.4 L1366 138.2 L1368 134.3 L1370 130.3 L1372 126 L1374 121.7 L1376 117.6 L1378 113.6 L1380 109.8 L1382 106.3 L1384 103.2 L1386 99.9 L1388 96.6 L1390 93.6 L1392 90.7 L1394 87.9 L1396 85.6 L1398 83.8 L1400 82.2 L1402 80.8 L1404 79.6 L1406 78.8 L1408 78.3 L1410 78.1 L1412 78.4 L1414 79 L1416 79.8 L1418 80.8 L1420 82.2 L1422 83.6 L1424 85.3 L1426 87.6 L1428 90.8 L1430 94 L1432 97.1 L1434 100.4 L1436 103.7 L1438 106.7 L1440 110.1 L1442 113.9 L1444 117.8 L1446 122 L1448 126.9 L1450 131.5 L1452 135.5 L1454 139.4 L1456 143.6 L1458 147.8 L1460 151.9 L1462 155.9 L1464 159.7 L1466 163.5 L1468 167 L1470 170.4 L1472 173.7 L1474 176.8 L1476 179.7 L1478 182.3 L1480 184.6 L1482 186.4 L1484 187.7 L1486 189.2 L1488 190.7 L1490 191.8 L1492 192.3 L1494 192.5 L1496 192.4 L1498 192.4 L1500 191.9 L1502 190.8 L1504 189.2 L1506 187.5 L1508 185.7 L1510 183.5 L1512 181.1 L1514 178.4 L1516 175.4 L1518 172 L1520 168.5 L1522 165.4 L1524 162.3 L1526 158.5 L1528 153.9 L1530 149.5 L1532 145.6 L1534 141.7 L1536 137.4 L1538 132.8 L1540 128.3 L1542 124.1 L1544 119.9 L1546 115.8 L1548 111.9 L1550 108.1 L1552 104.5 L1554 101.1 L1556 97.9 L1558 95.1 L1560 92.3 L1562 89.6 L1564 87.1 L1566 85 L1568 83.2 L1570 81.6 L1572 80.3 L1574 79.1 L1576 78.4 L1578 78 L1580 78 L1582 78.3 L1584 79.1 L1586 80 L1588 81.4 L1590 83 L1592 84.7 L1594 86.7 L1596 88.9 L1598 91.4 L1600 94.1 L1602 97.3 L1604 100.7 L1606 104.3 L1608 108 L1610 111.9 L1612 115.7 L1614 119.6 L1616 123.8 L1618 128.2 L1620 132.6 L1622 136.7 L1624 140.8 L1626 144.9 L1628 149 L1630 153 L1632 157.3 L1634 161.6 L1636 165.4 L1638 168.6 L1640 171.8 L1642 174.9 L1644 177.8 L1646 180.5 L1648 182.7 L1650 184.8 L1652 187 L1654 189.1 L1656 190.6 L1658 191.5 L1660 192.2 L1662 192.6 L1664 192.8 L1666 192.6 L1668 192.1 L1670 191.3 L1672 190.3 L1674 189.1 L1676 187.5 L1678 185.6 L1680 183.4 L1682 180.6 L1684 177.4 L1686 174.3 L1688 170.9 L1690 167.4 L1692 164 L1694 160.5 L1696 156.6 L1698 152.2 L1700 147.8 L1702 143.9 L1704 140.2 L1706 135.9 L1708 131.4 L1710 127 L1710 127" stroke="#e2e200"/>
<path d="M20 190.6 L21.5 190.6 L23 190.6 L24.5 190.6 L26 190.3 L27.5 190 L29 190.1 L30.5 190.4 L32 190.7 L33.5 190.3 L35 189.6 L36.5 189.5 L38 190.2 L39.5 191 L41 190.9 L42.5 190.3 L44 190 L45.5 190.2 L47 190.6 L48.5 190.7 L50 190.1 L51.5 189.5 L53 189.6 L53.5 190.6 L54.5 224.1 L56 265.6 L57.5 294.5 L58.6 304.2 L59 304.2 L60.5 304.2 L62 304.3 L63.5 304.4 L65 304.3 L66.5 304.3 L68 304.2 L69.5 304.2 L71 304.2 L72.5 304.2 L74 304.2 L75.5 304.2 L77 304.3 L78.5 304.7 L80 305 L81.5 305.1 L83 305.4 L84.5 305.4 L86 304.5 L87.5 303.6 L89 303.6 L90.5 303.9 L92 304.1 L93.5 304.2 L95 304.4 L96.5 304.4 L98 304.2 L99.5 304 L101 304.2 L102.5 305 L104 305.5 L105.5 304.8 L107 303.5 L108.5 303.2 L110 303.6 L111.5 304 L113 304.1 L114.5 304.3 L116 304.4 L117.5 304.4 L119 304.4 L120.5 304.4 L122 304.3 L123.5 304.3 L125 304.4 L126.5 305 L128 305.4 L129.5 305 L131 304.3 L132.5 304.2 L134 304.2 L135.5 304.3 L137 304.2 L137.9 304.3 L138.5 284.4 L140 241.3 L141.5 209 L143 191.2 L143.2 189.4 L144.5 189.4 L146 189.8 L147.5 190.2 L149 190.3 L150.5 190.4 L152 190.5 L153.5 190.5 L155 190.5 L156.5 190.5 L158 191 L159.5 191.4 L161 191.3 L162.5 190.8 L164 190.6 L165.5 190.6 L167 190.5 L168.5 190.6 L170 191.1 L171.5 191.6 L173 191.4 L174.5 190.7 L176 190.3 L177.5 190.3 L179 190.4 L180.5 190.5 L182 190.9 L183.5 191.3 L185 191.2 L186.5 190.7 L188 190.5 L189.5 190.2 L191 189.6 L192.5 189.5 L194 190 L195.5 190.5 L197 190.6 L198.5 190.7 L200 190.7 L201.5 190.5 L203 190.1 L204.5 190.1 L206 190.3 L207.5 190.6 L209 190.7 L210.5 191 L212 191.1 L213.5 190.8 L215 190.2 L216.5 190.1 L218 190.6 L219.5 191.2 L221 191.2 L222.5 190.8 L222.8 190.6 L224 230.3 L225.5 270.3 L227 297.2 L227.9 304.3 L228.5 304.2 L230 304.2 L231.5 304.2 L233 304.3 L234.5 304.4 L236 304.4 L237.5 304.2 L239 303.8 L240.5 303.7 L242 304 L243.5 304.3 L245 304.3 L246.5 304.2 L248 304.2 L249.5 304.3 L251 304.3 L252.5 304.4 L254 304.4 L255.5 304.4 L257 304.4 L258.5 304.3 L260 304.2 L261.5 304.2 L263 304 L264.5 304 L266 304.1 L267.5 304.2 L269 304.3 L270.5 304.7 L272 304.9 L273.5 304.4 L275 303.5 L276.5 303.3 L278 303.8 L279.5 304.4 L281 304.6 L282.5 305.2 L284 305.5 L285.5 305.2 L287 304.6 L288.5 304.4 L290 303.9 L291.5 303.3 L293 303.4 L294.5 304 L296 304.3 L297.5 304.3 L299 304.3 L300.5 304.3 L302 304.2 L303.5 304.1 L305 304.1 L306.5 304.3 L307.2 304.3 L308 278.1 L309.5 236.3 L311 205.7 L312.5 190.7 L314 190.6 L315.5 190.5 L317 190.5 L318.5 190.5 L320 190.5 L321.5 190.5 L323 190.6 L324.5 190.6 L326 190.5 L327.5 190.5 L329 190.4 L330.5 190.1 L332 190 L333.5 190.5 L335 191.3 L336.5 191.5 L338 191.1 L339.5 190.6 L341 190.7 L342.5 191.4 L344 191.8 L345.5 191.4 L347 190.7 L348.5 190.5 L350 190.6 L351.5 190.6 L353 190.6 L354.5 190.5 L356 190.5 L357.5 190.8 L359 191.3 L360.5 191.4 L362 191.1 L363.5 190.7 L365 190.6 L366.5 190.3 L368 190.1 L369.5 190 L371 189.9 L372.5 189.9 L374 190.2 L375.5 190.6 L377 190.6 L378.5 190.6 L380 190.6 L381.5 190.6 L383 190.6 L384.5 190.6 L386 190.9 L387.5 191.3 L389 191.2 L390.5 190.7 L392 190.5 L392.1 190.6 L393.5 236.3 L395 274.7 L396.5 299.6 L397.2 304.3 L398 304.2 L399.5 304 L401 303.9 L402.5 303.7 L404 303.6 L405.5 303.9 L407 304.4 L408.5 304.5 L410 304.4 L411.5 304.2 L413 304.2 L414.5 304 L416 303.9 L417.5 304 L419 304.2 L420.5 304.2 L422 303.9 L423.5 303.6 L425 303.7 L426.5 304.1 L428 304.3 L429.5 304 L431 303.5 L432.5 303.3 L434 303.9 L435.5 304.4 L437 304.4 L438.5 304.3 L440 304.2 L441.5 304.4 L443 304.7 L444.5 304.7 L446 304.3 L447.5 303.8 L449 304 L450.5 304.9 L452 305.4 L453.5 305.1 L455 304.6 L456.5 304.5 L458 304.3 L459.5 304.1 L461 304.1 L462.5 304.3 L464 304.4 L465.5 304.2 L467 303.7 L468.5 303.6 L470 303.9 L471.5 304.2 L473 304.4 L474.5 305 L476 305.3 L476.5 305.3 L477.5 272 L479 231.6 L480.5 202.6 L481.8 191.5 L482 191.5 L483.5 191.6 L485 191.3 L486.5 190.3 L488 189.8 L489.5 190.1 L491 190.6 L492.5 190.7 L494 190.7 L495.5 190.7 L497 190.7 L498.5 190.8 L500 190.9 L501.5 190.8 L503 190.7 L504.5 190.6 L506 190.3 L507.5 190.1 L509 190.2 L510.5 190.5 L512 190.7 L513.5 190.7 L515 190.6 L516.5 190.6 L518 190.7 L519.5 190.7 L521 190.6 L522.5 190 L524 189.7 L525.5 190 L527 190.6 L528.5 190.7 L530 190.1 L531.5 189.5 L533 189.6 L534.5 190.2 L536 190.6 L537.5 190.6 L539 190.6 L540.5 190.6 L542 190.6 L543.5 190.5 L545 190.5 L546.5 190.5 L548 190.5 L549.5 190.8 L551 191.3 L552.5 191.4 L554 191 L555.5 190.5 L557 190.5 L558.5 190.4 L560 190.3 L561.4 190.4 L561.5 194.1 L563 242 L564.5 278.9 L566 301.5 L566.5 304.3 L567.5 303.7 L569 303.8 L570.5 304.2 L572 304.4 L573.5 304.4 L575 304.5 L576.5 304.4 L578 304.3 L579.5 304.2 L581 304.2 L582.5 304.2 L584 304.2 L585.5 304.2 L587 304.3 L588.5 304.3 L590 304.3 L591.5 304.2 L593 304.3 L594.5 304.4 L596 304.5 L597.5 304.6 L599 304.7 L600.5 304.7 L602 304.4 L603.5 304.2 L605 304.2 L606.5 304.5 L608 304.6 L609.5 304.3 L611 303.8 L612.5 303.7 L614 304 L615.5 304.4 L617 304.3 L618.5 303.8 L620 303.5 L621.5 303.4 L623 303.3 L624.5 303.3 L626 303.7 L627.5 304.1 L629 304.1 L630.5 304.1 L632 304.2 L633.5 304.2 L635 304.2 L636.5 304.2 L638 304.2 L639.5 304.2 L641 304.2 L642.5 304.3 L644 304.4 L645.5 304.3 L645.8 304.3 L647 266 L648.5 227 L650 199.8 L651.1 190.6 L651.5 190.6 L653 190.6 L654.5 190.5 L656 190.5 L657.5 190.6 L659 190.7 L660.5 190.7 L662 190.7 L663.5 190.7 L665 190.9 L666.5 191.5 L668 191.8 L669.5 191.8 L671 191.8 L672.5 191.7 L674 191.1 L675.5 190.5 L677 190.5 L678.5 190.7 L680 190.7 L681.5 190.6 L683 190.3 L684.5 190.2 L686 190.4 L687.5 190.5 L689 190.5 L690.5 190.5 L692 190.5 L693.5 190.5 L695 190.5 L696.5 190.5 L698 190.6 L699.5 190.7 L701 190.6 L702.5 190.2 L704 190 L705.5 190.2 L707 190.5 L708.5 190.5 L710 190.2 L711.5 189.8 L713 190.1 L714.5 191.1 L716 191.7 L717.5 191.4 L719 190.9 L720.5 190.7 L722 191 L723.5 191.3 L725 191.2 L726.5 190.9 L728 190.7 L729.5 190.6 L730.7 190.6 L731 201.1 L732.5 247.6 L734 282.8 L735.5 303.1 L735.8 304.3 L737 304.3 L738.5 304.4 L740 304.4 L741.5 304.8 L743 305.4 L744.5 305.5 L746 304.9 L747.5 304.3 L749 304.3 L750.5 304.2 L752 304.2 L753.5 304.3 L755 304.3 L756.5 304.3 L758 304.6 L759.5 304.9 L761 304.7 L762.5 303.9 L764 303.5 L765.5 303.7 L767 304.1 L768.5 304.2 L770 304.2 L771.5 304.2 L773 304.3 L774.5 304.4 L776 304.4 L777.5 304.4 L779 304.4 L780.5 304.3 L782 303.7 L783.5 303.1 L785 303.1 L786.5 303.3 L788 303.4 L789.5 303.7 L791 304.2 L792.5 304.3 L794 304.3 L795.5 304.4 L797 304.3 L798.5 303.9 L800 303.6 L801.5 303.8 L803 304.1 L804.5 304.1 L806 304 L807.5 303.9 L809 303.9 L810.5 303.9 L812 303.9 L813.5 304.1 L815 304.4 L815.1 304.4 L816.5 260.2 L818 222.6 L819.5 197.3 L820.4 190.6 L821 190.5 L822.5 190.6 L824 190.6 L825.5 190.9 L827 191.5 L828.5 191.6 L830 190.7 L831.5 189.8 L833 189.9 L834.5 190.6 L836 190.9 L837.5 190.9 L839 190.7 L840.5 190.7 L842 190.3 L843.5 190 L845 190.1 L846.5 190.7 L848 191 L849.5 190.8 L851 190.6 L852.5 190.6 L854 190.6 L855.5 190.6 L857 190.6 L858.5 190.6 L860 190.7 L861.5 191 L863 191.5 L864.5 191.6 L866 191.1 L867.5 190.7 L869 190.6 L870.5 190.2 L872 189.9 L873.5 190.4 L875 191.1 L876.5 191.3 L878 191 L879.5 190.7 L881 190.7 L882.5 190.6 L884 190.5 L885.5 190.6 L887 190.8 L888.5 190.9 L890 190.8 L891.5 190.7 L893 190.6 L894.5 190.5 L896 190.5 L897.5 190.4 L899 190.2 L900 190.1 L900.5 207.9 L902 253 L903.5 286.5 L905 304.1 L905.1 304.3 L906.5 304.6 L908 304.4 L909.5 304.6 L911 305 L912.5 305.1 L914 304.7 L915.5 304.3 L917 304.3 L918.5 304.3 L920 304.3 L921.5 304 L923 303.5 L924.5 303.3 L926 303.2 L927.5 303.2 L929 303.4 L930.5 304.4 L932 304.9 L933.5 304.8 L935 304.5 L936.5 304.4 L938 304.3 L939.5 304.2 L941 304.2 L942.5 304.3 L944 304.3 L945.5 304.3 L947 304.3 L948.5 304.3 L950 304.5 L951.5 304.6 L953 304.6 L954.5 304.4 L956 304.2 L957.5 304.2 L959 304.2 L960.5 304.1 L962 303.9 L963.5 303.7 L965 303.8 L966.5 304.2 L968 304.4 L969.5 304.4 L971 304.3 L972.5 304.2 L974 304.2 L975.5 304.2 L977 304.4 L978.5 305 L980 305.3 L981.5 305 L983 304.5 L984.4 304.4 L984.5 300.9 L986 254.6 L987.5 218.4 L989 195.1 L989.7 191 L990.5 191.2 L992 191.4 L993.5 191.2 L995 190.8 L996.5 190.7 L998 190.9 L999.5 191.1 L1001 191.1 L1002.5 190.7 L1004 190.5 L1005.5 190.7 L1007 190.9 L1008.5 190.9 L1010 191.3 L1011.5 191.6 L1013 191.3 L1014.5 190.1 L1016 189.4 L1017.5 190.1 L1019 191.3 L1020.5 191.6 L1022 190.7 L1023.5 189.8 L1025 189.7 L1026.5 189.5 L1028 189.5 L1029.5 189.8 L1031 190.5 L1032.5 190.6 L1034 190.7 L1035.5 190.7 L1037 190.7 L1038.5 190.8 L1040 190.8 L1041.5 191 L1043 191.3 L1044.5 191.4 L1046 191.1 L1047.5 190.7 L1049 190.8 L1050.5 191.3 L1052 191.5 L1053.5 191.3 L1055 190.8 L1056.5 190.7 L1058 190.3 L1059.5 189.9 L1061 189.8 L1062.5 189.6 L1064 189.4 L1065.5 189.8 L1067 190.5 L1068.5 190.7 L1069.3 190.7 L1070 214.5 L1071.5 258.2 L1073 289.9 L1074.4 304.3 L1074.5 304.3 L1076 304.2 L1077.5 303.9 L1079 303.4 L1080.5 303.3 L1082 303.8 L1083.5 304.2 L1085 304.2 L1086.5 304.1 L1088 304.1 L1089.5 304 L1091 303.8 L1092.5 303.7 L1094 304.3 L1095.5 304.8 L1097 304.7 L1098.5 304.2 L1100 303.9 L1101.5 304 L1103 304.2 L1104.5 304.3 L1106 304.3 L1107.5 304.3 L1109 304.3 L1110.5 304.2 L1112 304.1 L1113.5 304.4 L1115 304.9 L1116.5 305 L1118 304.9 L1119.5 304.8 L1121 304.7 L1122.5 304.4 L1124 304.2 L1125.5 304.2 L1127 304.2 L1128.5 304.2 L1130 304.2 L1131.5 304.2 L1133 304.1 L1134.5 303.8 L1136 303.6 L1137.5 303.8 L1139 304.3 L1140.5 304.4 L1142 304.4 L1143.5 304.3 L1145 304.4 L1146.5 304.8 L1148 305 L1149.5 304.8 L1151 304.4 L1152.5 304.3 L1153.7 304.6 L1154 294.2 L1155.5 249.1 L1157 214.5 L1158.5 193.2 L1159 190.6 L1160 191.7 L1161.5 191.1 L1163 190.2 L1164.5 189.9 L1166 190.2 L1167.5 190.6 L1169 190.6 L1170.5 190.8 L1172 190.9 L1173.5 191.1 L1175 191.3 L1176.5 191.3 L1178 191 L1179.5 190.7 L1181 190.7 L1182.5 190.6 L1184 190.6 L1185.5 190.5 L1187 190.4 L1188.5 190.3 L1190 190.4 L1191.5 190.5 L1193 190.5 L1194.5 190.5 L1196 190.5 L1197.5 190.3 L1199 190.1 L1200.5 190 L1202 190.3 L1203.5 190.6 L1205 190.7 L1206.5 191.3 L1208 191.6 L1209.5 191.2 L1211 190.7 L1212.5 190.5 L1214 190.6 L1215.5 190.7 L1217 190.7 L1218.5 190.7 L1220 190.6 L1221.5 190.5 L1223 190.2 L1224.5 190.2 L1226 190.8 L1227.5 191.4 L1229 191.3 L1230.5 190.9 L1232 190.7 L1233.5 190.6 L1235 190.5 L1236.5 190.5 L1238 190.5 L1238.6 190.6 L1239.5 221 L1241 263.2 L1242.5 293.1 L1243.7 304.3 L1244 304.2 L1245.5 304.2 L1247 304.2 L1248.5 304.2 L1250 304 L1251.5 303.8 L1253 303.9 L1254.5 304.2 L1256 304.4 L1257.5 304.1 L1259 303.6 L1260.5 303.5 L1262 303.7 L1263.5 303.9 L1265 303.9 L1266.5 304.1 L1268 304.2 L1269.5 304 L1271 303.6 L1272.5 303.6 L1274 303.9 L1275.5 304.3 L1277 304.5 L1278.5 305.1 L1280 305.5 L1281.5 305 L1283 304.2 L1284.5 304 L1286 304.2 L1287.5 304.4 L1289 304.4 L1290.5 304.3 L1292 304.3 L1293.5 304.4 L1295 304.6 L1296.5 304.6 L1298 304.1 L1299.5 303.6 L1301 303.5 L1302.5 303.3 L1304 303.1 L1305.5 303.7 L1307 304.8 L1308.5 305 L1310 304.7 L1311.5 304.3 L1313 304.3 L1314.5 304.3 L1316 304.3 L1317.5 304.4 L1319 304.5 L1320.5 304.6 L1322 304.7 L1323 304.9 L1323.5 287.6 L1325 243.9 L1326.5 210.8 L1328 191.7 L1328.3 190.6 L1329.5 190.6 L1331 190.7 L1332.5 190.6 L1334 190.3 L1335.5 190 L1337 190 L1338.5 190.5 L1340 190.7 L1341.5 190.7 L1343 190.7 L1344.5 190.7 L1346 190.7 L1347.5 190.7 L1349 190.6 L1350.5 190.6 L1352 190.6 L1353.5 190.7 L1355 190.9 L1356.5 190.9 L1358 190.7 L1359.5 190.4 L1361 190.4 L1362.5 190.6 L1364 190.7 L1365.5 190.6 L1367 190.5 L1368.5 190.5 L1370 190.5 L1371.5 190.5 L1373 190.5 L1374.5 190.5 L1376 190.6 L1377.5 190.6 L1379 190.7 L1380.5 190.7 L1382 190.9 L1383.5 191 L1385 190.9 L1386.5 190.7 L1388 190.6 L1389.5 190.9 L1391 191.6 L1392.5 191.7 L1394 191.2 L1395.5 190.7 L1397 190.8 L1398.5 191.1 L1400 191.3 L1401.5 191.1 L1403 190.7 L1404.5 190.6 L1406 190.7 L1407.5 190.8 L1407.9 190.6 L1409 227.2 L1410.5 268 L1412 295.9 L1413 304.3 L1413.5 304.4 L1415 304.3 L1416.5 304.3 L1418 304.3 L1419.5 304.3 L1421 304.5 L1422.5 305.1 L1424 305.4 L1425.5 305.2 L1427 304.9 L1428.5 304.8 L1430 304.9 L1431.5 304.9 L1433 305 L1434.5 305.3 L1436 305.5 L1437.5 304.8 L1439 303.5 L1440.5 303.2 L1442 303.6 L1443.5 304 L1445 304.1 L1446.5 304.1 L1448 304.1 L1449.5 304.3 L1451 304.7 L1452.5 304.8 L1454 304.3 L1455.5 303.8 L1457 303.9 L1458.5 304.5 L1460 304.9 L1461.5 304.7 L1463 304.4 L1464.5 304.3 L1466 304.7 L1467.5 305 L1469 304.8 L1470.5 304 L1472 303.6 L1473.5 304 L1475 304.8 L1476.5 305 L1478 304.7 L1479.5 304.4 L1481 304.4 L1482.5 304.4 L1484 304.5 L1485.5 304.8 L1487 305.3 L1488.5 305.4 L1490 305.1 L1491.5 304.7 L1492.3 304.6 L1493 281.2 L1494.5 238.8 L1496 207.3 L1497.5 190.8 L1497.6 190.6 L1499 190.2 L1500.5 190.1 L1502 190.3 L1503.5 190.5 L1505 190.5 L1506.5 190.5 L1508 190.6 L1509.5 190.5 L1511 190.5 L1512.5 190.5 L1514 190.3 L1515.5 190 L1517 190 L1518.5 189.9 L1520 189.8 L1521.5 190.2 L1523 191 L1524.5 191.1 L1526 190.6 L1527.5 190 L1529 190 L1530.5 190.4 L1532 190.5 L1533.5 190.7 L1535 190.9 L1536.5 190.9 L1538 190.8 L1539.5 190.6 L1541 190.6 L1542.5 190.7 L1544 190.7 L1545.5 190.9 L1547 191.3 L1548.5 191.4 L1550 191.1 L1551.5 190.7 L1553 190.8 L1554.5 191.2 L1556 191.4 L1557.5 191.1 L1559 190.6 L1560.5 190.5 L1562 191.1 L1563.5 191.7 L1565 191.6 L1566.5 190.9 L1568 190.5 L1569.5 190.3 L1571 189.8 L1572.5 189.8 L1574 190.5 L1575.5 191.2 L1577 191.1 L1577.2 191 L1578.5 233.3 L1580 272.5 L1581.5 298.4 L1582.3 304.3 L1583 304.2 L1584.5 304.4 L1586 304.8 L1587.5 305.2 L1589 305.1 L1590.5 304.7 L1592 304.4 L1593.5 304.4 L1595 304.4 L1596.5 304.4 L1598 304.4 L1599.5 304.4 L1601 304.5 L1602.5 304.7 L1604 304.8 L1605.5 304.7 L1607 304.4 L1608.5 304.4 L1610 304.8 L1611.5 305.2 L1613 305.1 L1614.5 304.5 L1616 304.2 L1617.5 304 L1619 303.5 L1620.5 303.4 L1622 303.3 L1623.5 303.2 L1625 303.2 L1626.5 303.3 L1628 303.4 L1629.5 303.7 L1631 304.2 L1632.5 304.3 L1634 304.4 L1635.5 304.4 L1637 304.5 L1638.5 304.9 L1640 305.2 L1641.5 304.9 L1643 304.6 L1644.5 304.5 L1646 304.4 L1647.5 304.4 L1649 304.4 L1650.5 304.2 L1652 304.1 L1653.5 304.1 L1655 304.2 L1656.5 304.2 L1658 304.3 L1659.5 304.3 L1661 304.4 L1661.6 304.4 L1662.5 275 L1664 233.9 L1665.5 204.1 L1666.9 190.8 L1667 190.8 L1668.5 190.8 L1670 191.3 L1671.5 191.8 L1673 191.6 L1674.5 191 L1676 190.6 L1677.5 190.6 L1679 190.5 L1680.5 190.5 L1682 190.5 L1683.5 190.6 L1685 190.8 L1686.5 191.2 L1688 191.5 L1689.5 191.2 L1691 190.7 L1692.5 190.5 L1694 190.6 L1695.5 190.7 L1697 190.6 L1698.5 190.5 L1700 190.4 L1701.5 190.5 L1703 190.7 L1704.5 190.7 L1706 190.6 L1707.5 190.5 L1709 190.5 L1710 190.6" stroke="#00dce6"/>
<path d="M20 358 L22 353.7 L24 349.3 L26 345.4 L28 341.4 L30 337.7 L32 334.5 L34 331.6 L36 328.7 L38 326 L40 323.5 L42 321.4 L44 319.7 L46 318.1 L48 316.5 L50 315.4 L52 314.6 L54 314 L56 313.9 L58 314 L60 314.5 L62 315.5 L64 317 L66 318.5 L68 320.3 L70 322.4 L72 324.7 L74 327.2 L76 330.1 L78 333.1 L80 336.4 L82 339.8 L84 343.5 L86 347.2 L88 351.1 L90 355.1 L92 359.2 L94 363.5 L96 367.7 L98 371.9 L100 376.1 L102 380.1 L104 384 L106 388.1 L108 392.6 L110 396.8 L112 400.5 L114 404 L116 407.4 L118 410.7 L120 413.8 L122 416.5 L124 418.9 L126 421.2 L128 423.2 L130 424.9 L132 426.3 L134 427.4 L136 428.2 L138 428.9 L140 429.1 L142 429 L144 428.5 L146 427.7 L148 426.2 L150 424.6 L152 423.1 L154 421.5 L156 419.4 L158 416.9 L160 414.1 L162 411.1 L164 407.8 L166 404.4 L168 401 L170 397.4 L172 393.4 L174 389.4 L176 385.2 L178 380.7 L180 376.2 L182 372.2 L184 368.2 L186 364 L188 359.4 L190 355 L192 351.3 L194 348 L196 344.3 L198 340.9 L200 337.6 L202 334.2 L204 331.1 L206 328.1 L208 324.7 L210 321.9 L212 320 L214 318.6 L216 317.2 L218 315.9 L220 315 L222 314.6 L224 314.6 L226 314.7 L228 314.8 L230 315.4 L232 316.3 L234 317.4 L236 319 L238 320.9 L240 323.2 L242 325.8 L244 328.8 L246 331.8 L248 334.9 L250 338.3 L252 341.5 L254 344.7 L256 348.5 L258 352.6 L260 356.8 L262 360.9 L264 364.9 L266 369.1 L268 373.7 L270 378.1 L272 382.4 L274 386.6 L276 390.6 L278 393.9 L280 397.3 L282 401.3 L284 405.3 L286 408.7 L288 412 L290 415 L292 417.7 L294 420.3 L296 422.4 L298 424.2 L300 425.7 L302 427 L304 427.8 L306 428.6 L308 429.2 L310 429.4 L312 429.1 L314 428.3 L316 427.4 L318 426.1 L320 424.6 L322 423.1 L324 421.5 L326 419.2 L328 416.3 L330 413.2 L332 410.2 L334 406.9 L336 403.5 L338 399.8 L340 396 L342 392 L344 387.9 L346 383.8 L348 380 L350 376 L352 371.6 L354 367.2 L356 362.9 L358 358.6 L360 354.5 L362 350.4 L364 346.4 L366 342.6 L368 338.8 L370 335.3 L372 332.2 L374 329.5 L376 326.8 L378 324.3 L380 322 L382 320.2 L384 318.7 L386 317.3 L388 315.9 L390 315 L392 314.4 L394 314.1 L396 314.3 L398 314.8 L400 315.7 L402 316.8 L404 318.2 L406 319.8 L408 321.3 L410 323.2 L412 326 L414 329.2 L416 332.3 L418 335.6 L420 339.1 L422 342.6 L424 346 L426 349.9 L428 354 L430 358.1 L432 362.1 L434 366 L436 370.3 L438 375.1 L440 379.6 L442 383.7 L444 387.6 L446 391.6 L448 395.8 L450 399.8 L452 403.3 L454 406.4 L456 409.7 L458 412.9 L460 415.8 L462 418.3 L464 420.6 L466 422.7 L468 424.6 L470 426.1 L472 427.1 L474 427.7 L476 428.3 L478 429 L480 429.3 L482 428.8 L484 428 L486 427 L488 425.7 L490 424.1 L492 422 L494 419.4 L496 417 L498 414.7 L500 412 L502 409 L504 405.8 L506 402.2 L508 398.4 L510 394.4 L512 390.5 L514 386.4 L516 382.2 L518 377.6 L520 373.1 L522 369.4 L524 366 L526 361.9 L528 357.3 L530 352.9 L532 348.9 L534 345 L536 341.3 L538 337.8 L540 334.5 L542 331.4 L544 328.5 L546 325.8 L548 323.4 L550 321.3 L552 319.1 L554 317 L556 315.6 L558 314.8 L560 314.1 L562 313.7 L564 313.5 L566 313.8 L568 314.9 L570 316 L572 317.4 L574 319.2 L576 321 L578 322.6 L580 324.6 L582 327.2 L584 330.1 L586 333.3 L588 337 L590 340.7 L592 344.1 L594 347.6 L596 351.4 L598 355.5 L600 359.6 L602 363.8 L604 367.9 L606 372.1 L608 376.1 L610 380.1 L612 384.5 L614 389 L616 393 L618 396.4 L620 399.9 L622 403.6 L624 407.3 L626 410.6 L628 413.8 L630 416.7 L632 419.1 L634 421.3 L636 423.2 L638 425 L640 426.5 L642 427.7 L644 428.5 L646 428.9 L648 428.7 L650 428.3 L652 428.1 L654 427.7 L656 426.6 L658 425.1 L660 423.4 L662 421.5 L664 419.3 L666 416.8 L668 413.8 L670 410.7 L672 407.4 L674 403.8 L676 400.2 L678 396.5 L680 392.6 L682 388.6 L684 384.5 L686 380.3 L688 376.4 L690 372.3 L692 368 L694 363.8 L696 359.7 L698 356 L700 352.2 L702 348.3 L704 344.5 L706 340.8 L708 337 L710 333.5 L712 330.4 L714 327.4 L716 324.9 L718 323 L720 321.1 L722 319.1 L724 317.3 L726 316 L728 314.9 L730 314.2 L732 314 L734 314.2 L736 314.6 L738 315.2 L740 316.2 L742 317.3 L744 318.5 L746 320.4 L748 323 L750 325.6 L752 328.5 L754 331.8 L756 334.9 L758 337.8 L760 341.1 L762 344.7 L764 348.4 L766 352.4 L768 356.6 L770 360.9 L772 365.1 L774 369.4 L776 373.7 L778 378.3 L780 382.8 L782 387 L784 391.1 L786 395.1 L788 398.9 L790 402.5 L792 405.8 L794 408.7 L796 411.8 L798 414.6 L800 417.2 L802 419.5 L804 421.6 L806 423.6 L808 425.9 L810 427.7 L812 428.4 L814 428.7 L816 429 L818 428.8 L820 428.4 L822 427.9 L824 427.1 L826 425.9 L828 424.5 L830 422.7 L832 420.6 L834 418.2 L836 415.7 L838 412.9 L840 409.8 L842 406.3 L844 402.4 L846 398.8 L848 395.4 L850 391.8 L852 387.7 L854 383.5 L856 379.3 L858 375.1 L860 370.8 L862 366.6 L864 362.3 L866 358.2 L868 354.4 L870 350.6 L872 346.5 L874 342.5 L876 338.8 L878 335 L880 331.6 L882 328.9 L884 326.5 L886 324 L888 321.5 L890 319.3 L892 317.8 L894 316.7 L896 315.7 L898 314.9 L900 314.4 L902 314 L904 313.7 L906 314.2 L908 315.4 L910 316.7 L912 318 L914 319.7 L916 321.6 L918 323.9 L920 326.5 L922 329.3 L924 332.4 L926 335.5 L928 338.4 L930 341.7 L932 345.7 L934 350.1 L936 354.1 L938 358.2 L940 362.4 L942 366.8 L944 371.4 L946 375.6 L948 379.2 L950 383.1 L952 387.4 L954 391.9 L956 395.8 L958 399.6 L960 403.2 L962 406.6 L964 409.9 L966 413 L968 416 L970 418.7 L972 421 L974 422.9 L976 424.7 L978 426.3 L980 427.6 L982 428.5 L984 429.1 L986 429.4 L988 429.5 L990 429.2 L992 428.3 L994 426.9 L996 425.6 L998 424 L1000 422.1 L1002 419.7 L1004 416.8 L1006 414.1 L1008 411.6 L1010 408.7 L1012 405.1 L1014 401.3 L1016 397.7 L1018 394.5 L1020 390.9 L1022 386.4 L1024 381.6 L1026 377.3 L1028 373.4 L1030 369.3 L1032 365.2 L1034 361.1 L1036 356.9 L1038 352.8 L1040 348.8 L1042 344.9 L1044 341.1 L1046 337.6 L1048 334.4 L1050 331.3 L1052 328.1 L1054 325.1 L1056 322.7 L1058 320.8 L1060 319.2 L1062 317.4 L1064 315.7 L1066 314.7 L1068 314 L1070 313.7 L1072 313.9 L1074 314.5 L1076 315.2 L1078 316.1 L1080 317.3 L1082 318.7 L1084 320.4 L1086 322.5 L1088 324.9 L1090 327.6 L1092 330.4 L1094 333.3 L1096 336.6 L1098 340.1 L1100 343.8 L1102 347.8 L1104 352.2 L1106 356.2 L1108 359.9 L1110 363.9 L1112 368 L1114 372.2 L1116 376.5 L1118 381.3 L1120 385.8 L1122 389.7 L1124 393.3 L1126 397.2 L1128 400.9 L1130 404.5 L1132 407.9 L1134 411 L1136 414 L1138 416.8 L1140 419.4 L1142 421.5 L1144 423.3 L1146 425 L1148 426.5 L1150 427.6 L1152 428.1 L1154 428.2 L1156 428.4 L1158 428.6 L1160 428.4 L1162 427.4 L1164 425.9 L1166 424.5 L1168 423.2 L1170 421.5 L1172 419.2 L1174 416.6 L1176 413.9 L1178 410.9 L1180 407.7 L1182 404.2 L1184 400.5 L1186 396.7 L1188 392.9 L1190 388.9 L1192 384.8 L1194 380.6 L1196 376.4 L1198 372.6 L1200 368.6 L1202 364.1 L1204 359.5 L1206 355.3 L1208 351.2 L1210 347.3 L1212 343.5 L1214 339.9 L1216 336.5 L1218 333.4 L1220 330.4 L1222 327.5 L1224 324.9 L1226 322.6 L1228 320.4 L1230 318.6 L1232 317.1 L1234 315.9 L1236 314.9 L1238 314.1 L1240 313.7 L1242 313.7 L1244 314.1 L1246 314.8 L1248 316 L1250 317.5 L1252 319 L1254 320.8 L1256 323 L1258 325.7 L1260 328.5 L1262 331.4 L1264 334.6 L1266 337.9 L1268 341.4 L1270 345.2 L1272 349.1 L1274 353.2 L1276 357.3 L1278 361.3 L1280 365.5 L1282 369.7 L1284 373.9 L1286 378.1 L1288 382.1 L1290 386.1 L1292 390.3 L1294 394.5 L1296 398.4 L1298 402.2 L1300 405.7 L1302 408.9 L1304 411.9 L1306 414.7 L1308 417.5 L1310 420 L1312 422.1 L1314 424.1 L1316 425.7 L1318 427.4 L1320 428.7 L1322 429.2 L1324 429.4 L1326 429.3 L1328 428.4 L1330 427.4 L1332 426.7 L1334 425.9 L1336 424.5 L1338 422.6 L1340 420.4 L1342 418.3 L1344 416 L1346 413.1 L1348 409.6 L1350 406 L1352 402.7 L1354 399.3 L1356 395.5 L1358 391.4 L1360 387.3 L1362 383.3 L1364 379.4 L1366 375.2 L1368 370.9 L1370 366.5 L1372 362.3 L1374 358.1 L1376 354 L1378 350 L1380 346.1 L1382 342.4 L1384 338.7 L1386 335.3 L1388 332.2 L1390 329.2 L1392 326.4 L1394 323.8 L1396 321.6 L1398 319.6 L1400 317.9 L1402 316.6 L1404 315.6 L1406 314.9 L1408 314.8 L1410 314.9 L1412 314.9 L1414 314.9 L1416 315.7 L1418 316.8 L1420 318.3 L1422 320 L1424 321.9 L1426 324.1 L1428 326.6 L1430 329.4 L1432 332.4 L1434 335.6 L1436 339 L1438 342.7 L1440 346.5 L1442 350.3 L1444 354.1 L1446 358.2 L1448 362.6 L1450 367 L1452 371.2 L1454 375.3 L1456 379.5 L1458 383.6 L1460 387.6 L1462 391.8 L1464 396 L1466 399.8 L1468 403.3 L1470 406.7 L1472 409.9 L1474 413 L1476 415.9 L1478 418.6 L1480 420.9 L1482 422.9 L1484 424.6 L1486 426.1 L1488 427.7 L1490 428.8 L1492 428.9 L1494 428.4 L1496 428.3 L1498 428.3 L1500 427.8 L1502 426.8 L1504 425.6 L1506 424 L1508 422.5 L1510 420.6 L1512 417.9 L1514 414.8 L1516 411.8 L1518 408.6 L1520 405.2 L1522 401.7 L1524 398.1 L1526 394.3 L1528 390.7 L1530 386.8 L1532 382.4 L1534 377.8 L1536 373.5 L1538 369.1 L1540 364.8 L1542 360.7 L1544 356.7 L1546 352.6 L1548 348.7 L1550 344.8 L1552 341.1 L1554 337.5 L1556 334.2 L1558 331.2 L1560 328.4 L1562 325.6 L1564 323.1 L1566 321 L1568 319.4 L1570 318 L1572 316.5 L1574 315.1 L1576 314.4 L1578 314.2 L1580 314.3 L1582 314.4 L1584 314.6 L1586 315.5 L1588 317.1 L1590 318.8 L1592 320.6 L1594 322.8 L1596 325.1 L1598 327.6 L1600 330.4 L1602 333.4 L1604 336.5 L1606 340 L1608 343.9 L1610 347.8 L1612 351.6 L1614 355.3 L1616 359.5 L1618 364 L1620 368.4 L1622 372.9 L1624 377.6 L1626 381.8 L1628 385.4 L1630 389.2 L1632 393.4 L1634 397.6 L1636 401.4 L1638 404.9 L1640 408.2 L1642 411.2 L1644 413.9 L1646 416.6 L1648 419.3 L1650 421.6 L1652 423.5 L1654 425.1 L1656 426.5 L1658 427.7 L1660 428.5 L1662 429 L1664 429.2 L1666 429.1 L1668 428.9 L1670 428.3 L1672 426.9 L1674 425 L1676 423.2 L1678 420.9 L1680 418.4 L1682 416.1 L1684 413.5 L1686 410.5 L1688 407.1 L1690 403.5 L1692 400.3 L1694 397.1 L1696 393.2 L1698 389 L1700 384.7 L1702 380.2 L1704 375.5 L1706 371.3 L1708 367.4 L1710 363.4 L1710 363.4" stroke="#00cc00"/>
<path d="M20 429.4 L21.5 429.1 L23 428.5 L24.5 428.3 L26 428.2 L27.5 428.1 L29 428.3 L30.5 429 L32 429.4 L33.5 429.1 L35 428.7 L36.5 428.5 L38 428.6 L39.5 428.7 L41 428.5 L42.5 427.7 L44 427.3 L45.5 427.6 L47 428.3 L48.5 428.5 L50 429 L51.5 429.4 L53 429.2 L53.5 428.4 L54.5 462.1 L56 503.9 L57.5 533.1 L58.6 543 L59 543 L60.5 543.1 L62 543.5 L63.5 544 L65 543.8 L66.5 543.1 L68 542.6 L69.5 542.7 L71 542.8 L72.5 542.9 L74 543.3 L75.5 543.8 L77 543.8 L78.5 543.7 L80 543.6 L81.5 543.2 L83 542.3 L84.5 542.1 L86 542.1 L87.5 542.1 L89 542.2 L90.5 542.6 L92 542.8 L93.5 542.8 L95 542.8 L96.5 542.8 L98 542.8 L99.5 542.9 L101 542.7 L102.5 542.1 L104 541.8 L105.5 542.4 L107 543.4 L108.5 543.7 L110 543 L111.5 542.3 L113 542.3 L114.5 542.3 L116 542.4 L117.5 542.2 L119 541.8 L120.5 541.8 L122 542.3 L123.5 542.8 L125 542.9 L126.5 543.2 L128 543.4 L129.5 543.1 L131 542.5 L132.5 542.3 L134 542.6 L135.5 542.8 L137 542.9 L137.9 542.9 L138.5 522.9 L140 479.5 L141.5 447 L143 429 L143.2 428.4 L144.5 428.3 L146 428.6 L147.5 428.9 L149 429 L150.5 429.4 L152 429.5 L153.5 429.5 L155 429.5 L156.5 429.5 L158 428.9 L159.5 428.4 L161 428.2 L162.5 427.7 L164 427.5 L165.5 427.7 L167 428.2 L168.5 428.3 L170 428.4 L171.5 428.4 L173 428.3 L174.5 428 L176 427.8 L177.5 427.9 L179 428.2 L180.5 428.3 L182 428.3 L183.5 428.3 L185 428.3 L186.5 428.4 L188 428.4 L189.5 428.6 L191 429 L192.5 429.1 L194 428.9 L195.5 428.8 L197 428.7 L198.5 428.5 L200 428.3 L201.5 428 L203 427.5 L204.5 427.4 L206 428.3 L207.5 429.2 L209 429.2 L210.5 429 L212 428.8 L213.5 428.7 L215 428.6 L216.5 428.5 L218 428.5 L219.5 428.4 L221 428.2 L222.5 427.7 L222.8 428.4 L224 468.4 L225.5 508.6 L227 535.8 L227.9 542.9 L228.5 542.3 L230 542.8 L231.5 543.4 L233 543.3 L234.5 542.9 L236 542.7 L237.5 542.8 L239 542.9 L240.5 543 L242 543 L243.5 543 L245 542.9 L246.5 542.5 L248 542.3 L249.5 542.7 L251 543.2 L252.5 543.3 L254 543.1 L255.5 542.9 L257 542.9 L258.5 543.2 L260 543.3 L261.5 543.2 L263 542.9 L264.5 542.8 L266 542.8 L267.5 542.9 L269 542.8 L270.5 542.8 L272 542.8 L273.5 543.2 L275 543.8 L276.5 543.9 L278 543.4 L279.5 543 L281 542.8 L282.5 542.1 L284 541.7 L285.5 541.9 L287 542.1 L288.5 542.2 L290 542.4 L291.5 542.6 L293 542.6 L294.5 542.5 L296 542.4 L297.5 542.5 L299 542.7 L300.5 542.8 L302 542.9 L303.5 542.9 L305 542.9 L306.5 542.9 L307.2 542.8 L308 516.5 L309.5 474.5 L311 443.6 L312.5 428.8 L314 428 L315.5 427.2 L317 427.3 L318.5 428.1 L320 428.5 L321.5 428.1 L323 427.4 L324.5 427.3 L326 427.8 L327.5 428.4 L329 428.3 L330.5 428 L332 427.8 L333.5 428.2 L335 428.9 L336.5 429.1 L338 429.3 L339.5 429.4 L341 429.3 L342.5 428.6 L344 428.3 L345.5 428.3 L347 428.4 L348.5 428.4 L350 428.4 L351.5 428.5 L353 428.3 L354.5 427.7 L356 427.4 L357.5 427.7 L359 428.2 L360.5 428.4 L362 428.4 L363.5 428.5 L365 428.5 L366.5 428.5 L368 428.5 L369.5 428.5 L371 428.4 L372.5 428.4 L374 428.6 L375.5 428.9 L377 428.8 L378.5 428.6 L380 428.4 L381.5 428.4 L383 428.3 L384.5 428.3 L386 428.3 L387.5 428.3 L389 428.3 L390.5 428.4 L392 428.5 L392.1 428.4 L393.5 474.4 L395 513.1 L396.5 538.1 L397.2 542.9 L398 543 L399.5 542.9 L401 542.9 L402.5 542.9 L404 542.8 L405.5 542.7 L407 542.6 L408.5 542.5 L410 542.3 L411.5 542.2 L413 542.1 L414.5 542 L416 542 L417.5 542.3 L419 542.8 L420.5 542.9 L422 542.6 L423.5 542.3 L425 542.3 L426.5 542.7 L428 542.9 L429.5 542.9 L431 542.9 L432.5 542.9 L434 543.4 L435.5 543.8 L437 543.7 L438.5 543.3 L440 543.1 L441.5 543.3 L443 543.6 L444.5 543.7 L446 543.3 L447.5 543 L449 543 L450.5 543.2 L452 543.3 L453.5 543.2 L455 543 L456.5 542.9 L458 542.9 L459.5 543 L461 542.9 L462.5 542.6 L464 542.4 L465.5 542.3 L467 542.2 L468.5 542.2 L470 542.3 L471.5 542.3 L473 542.5 L474.5 543.1 L476 543.4 L476.5 543.3 L477.5 510.3 L479 469.6 L480.5 440.5 L481.8 427.8 L482 427.9 L483.5 428.3 L485 428.2 L486.5 427.8 L488 427.6 L489.5 427.4 L491 427.2 L492.5 427.2 L494 427.8 L495.5 428.4 L497 428.5 L498.5 428.8 L500 428.9 L501.5 428.8 L503 428.5 L504.5 428.4 L506 428.4 L507.5 428.4 L509 428.3 L510.5 427.9 L512 427.6 L513.5 427.8 L515 428.2 L516.5 428.3 L518 428.3 L519.5 428.4 L521 428.5 L522.5 428.5 L524 428.5 L525.5 428.5 L527 428.4 L528.5 428.3 L530 427.9 L531.5 427.5 L533 427.7 L534.5 428.6 L536 429.1 L537.5 428.9 L539 428.4 L540.5 428.4 L542 428.5 L543.5 428.7 L545 428.7 L546.5 428.6 L548 428.5 L549.5 428.7 L551 429 L552.5 429.1 L554 428.8 L555.5 428.5 L557 428.3 L558.5 427.9 L560 427.6 L561.4 427.8 L561.5 432 L563 480.2 L564.5 517.3 L566 540.1 L566.5 542.9 L567.5 543 L569 543.1 L570.5 543.5 L572 543.7 L573.5 543.1 L575 542 L576.5 541.8 L578 542.3 L579.5 542.9 L581 542.9 L582.5 543 L584 543 L585.5 543 L587 543 L588.5 543 L590 543 L591.5 542.9 L593 542.8 L594.5 542.6 L596 542.4 L597.5 542.5 L599 542.7 L600.5 542.8 L602 542.8 L603.5 542.8 L605 543 L606.5 543.7 L608 544.1 L609.5 543.4 L611 542.1 L612.5 541.8 L614 541.9 L615.5 542.1 L617 542.2 L618.5 542.6 L620 542.8 L621.5 542.8 L623 543 L624.5 543 L626 542.9 L627.5 542.9 L629 542.9 L630.5 543.2 L632 543.3 L633.5 543.2 L635 542.9 L636.5 542.9 L638 542.8 L639.5 542.8 L641 542.8 L642.5 542.9 L644 543 L645.5 542.9 L645.8 542.9 L647 504.3 L648.5 465 L650 437.7 L651.1 428.3 L651.5 428.3 L653 428.3 L654.5 428.3 L656 428.4 L657.5 428 L659 427.5 L660.5 427.4 L662 427.8 L663.5 428.3 L665 428.3 L666.5 428.5 L668 428.5 L669.5 428.5 L671 428.5 L672.5 428.5 L674 428.5 L675.5 428.4 L677 428.4 L678.5 428.3 L680 428.3 L681.5 428.3 L683 428.4 L684.5 428.4 L686 428.5 L687.5 428.6 L689 428.6 L690.5 428.5 L692 428.4 L693.5 428.4 L695 428.3 L696.5 428.4 L698 428.9 L699.5 429.3 L701 429.1 L702.5 428.2 L704 427.6 L705.5 427.9 L707 428.3 L708.5 428.4 L710 428.6 L711.5 428.8 L713 428.8 L714.5 428.7 L716 428.6 L717.5 428.6 L719 428.5 L720.5 428.5 L722 428.4 L723.5 428.4 L725 428.3 L726.5 427.8 L728 427.6 L729.5 427.9 L730.7 428.4 L731 439 L732.5 485.8 L734 521.3 L735.5 541.7 L735.8 542.9 L737 543.5 L738.5 542.5 L740 541.9 L741.5 542.2 L743 542.7 L744.5 542.8 L746 542.9 L747.5 543 L749 543 L750.5 543.1 L752 543.1 L753.5 543 L755 543 L756.5 542.9 L758 542.9 L759.5 542.8 L761 542.6 L762.5 542.1 L764 541.8 L765.5 542.4 L767 543.5 L768.5 543.8 L770 543.4 L771.5 543 L773 542.9 L774.5 542.8 L776 542.8 L777.5 542.8 L779 542.9 L780.5 543 L782 543.3 L783.5 543.7 L785 543.5 L786.5 542.6 L788 542.1 L789.5 542.3 L791 542.8 L792.5 542.9 L794 542.9 L795.5 542.8 L797 542.8 L798.5 542.8 L800 542.8 L801.5 542.7 L803 542.6 L804.5 542.6 L806 542.9 L807.5 543.1 L809 543 L810.5 542.6 L812 542.4 L813.5 542.5 L815 542.8 L815.1 542.8 L816.5 498.5 L818 460.6 L819.5 435.1 L820.4 428.4 L821 428.4 L822.5 428.4 L824 428.4 L825.5 428.4 L827 428.5 L828.5 428.5 L830 428.8 L831.5 429 L833 429 L834.5 429 L836 429.1 L837.5 428.9 L839 428.6 L840.5 428.5 L842 428.3 L843.5 428.1 L845 428.1 L846.5 428.4 L848 428.5 L849.5 428.5 L851 428.3 L852.5 428.3 L854 428.3 L855.5 428.3 L857 428.3 L858.5 428.4 L860 428.5 L861.5 428.8 L863 429.3 L864.5 429.4 L866 428.9 L867.5 428.4 L869 428.3 L870.5 428.3 L872 428.3 L873.5 428.3 L875 428.4 L876.5 428.4 L878 427.8 L879.5 427.2 L881 427.5 L882.5 428.6 L884 429.2 L885.5 429 L887 428.6 L888.5 428.5 L890 428.7 L891.5 428.9 L893 428.7 L894.5 427.9 L896 427.5 L897.5 427.8 L899 428.3 L900 428.4 L900.5 445.8 L902 491.3 L903.5 525 L905 542.7 L905.1 542.9 L906.5 542.8 L908 542.8 L909.5 542.5 L911 542.1 L912.5 542.1 L914 542.5 L915.5 543 L917 543 L918.5 542.8 L920 542.8 L921.5 543 L923 543.6 L924.5 543.7 L926 543.3 L927.5 542.9 L929 542.7 L930.5 542.3 L932 542 L933.5 542.3 L935 542.7 L936.5 542.9 L938 542.9 L939.5 542.9 L941 542.9 L942.5 542.6 L944 542.5 L945.5 542.9 L947 543.7 L948.5 543.8 L950 543.3 L951.5 542.8 L953 542.7 L954.5 542.6 L956 542.6 L957.5 542.7 L959 543 L960.5 543.1 L962 542.8 L963.5 542.6 L965 542.6 L966.5 542.9 L968 543.1 L969.5 542.7 L971 541.9 L972.5 541.8 L974 542.9 L975.5 544 L977 543.8 L978.5 542.7 L980 542 L981.5 542.3 L983 542.7 L984.4 542.8 L984.5 539.5 L986 492.8 L987.5 456.4 L989 432.9 L989.7 428.5 L990.5 428.5 L992 428.6 L993.5 428.6 L995 428.5 L996.5 428.5 L998 428.4 L999.5 428.3 L1001 428.3 L1002.5 428.4 L1004 428.5 L1005.5 428.5 L1007 428.5 L1008.5 428.5 L1010 428.5 L1011.5 428.4 L1013 428.4 L1014.5 428 L1016 427.9 L1017.5 428.1 L1019 428.4 L1020.5 428.5 L1022 428.5 L1023.5 428.5 L1025 428.5 L1026.5 428.9 L1028 429.1 L1029.5 428.9 L1031 428.5 L1032.5 428.4 L1034 428.4 L1035.5 428.4 L1037 428.4 L1038.5 428.4 L1040 428.4 L1041.5 428.3 L1043 428 L1044.5 428.1 L1046 428.8 L1047.5 429.6 L1049 429.4 L1050.5 428.5 L1052 428.1 L1053.5 428 L1055 427.8 L1056.5 427.7 L1058 427.6 L1059.5 427.5 L1061 427.8 L1062.5 428.8 L1064 429.3 L1065.5 429 L1067 428.4 L1068.5 428.3 L1069.3 428.3 L1070 452.5 L1071.5 496.5 L1073 528.4 L1074.4 542.2 L1074.5 542.1 L1076 541.8 L1077.5 542 L1079 542.3 L1080.5 542.4 L1082 542.7 L1083.5 542.9 L1085 542.9 L1086.5 542.9 L1088 542.9 L1089.5 542.9 L1091 542.9 L1092.5 542.9 L1094 542.5 L1095.5 542.1 L1097 542.2 L1098.5 542.8 L1100 543 L1101.5 543.2 L1103 543.5 L1104.5 543.6 L1106 543.7 L1107.5 543.8 L1109 543.7 L1110.5 543.2 L1112 542.9 L1113.5 542.9 L1115 542.8 L1116.5 542.8 L1118 542.3 L1119.5 541.8 L1121 541.8 L1122.5 542.1 L1124 542.3 L1125.5 542.5 L1127 542.7 L1128.5 542.8 L1130 542.5 L1131.5 542.2 L1133 542.3 L1134.5 542.7 L1136 543 L1137.5 542.9 L1139 542.8 L1140.5 542.8 L1142 542.9 L1143.5 543 L1145 543 L1146.5 542.9 L1148 542.8 L1149.5 542.8 L1151 543 L1152.5 543 L1153.7 542.6 L1154 532.7 L1155.5 487.3 L1157 452.5 L1158.5 431 L1159 428.4 L1160 428.5 L1161.5 428.5 L1163 428.4 L1164.5 428.4 L1166 428.4 L1167.5 428.3 L1169 428.4 L1170.5 428.8 L1172 429 L1173.5 428.8 L1175 428.5 L1176.5 428.4 L1178 428.4 L1179.5 428.4 L1181 428.3 L1182.5 428.2 L1184 428.2 L1185.5 428.3 L1187 428.6 L1188.5 428.7 L1190 428.6 L1191.5 428.4 L1193 428.4 L1194.5 428.3 L1196 428.3 L1197.5 428 L1199 427.4 L1200.5 427.2 L1202 427.8 L1203.5 428.4 L1205 428.4 L1206.5 428.3 L1208 428.3 L1209.5 428.3 L1211 428.4 L1212.5 428.4 L1214 427.9 L1215.5 427.4 L1217 427.4 L1218.5 427.5 L1220 427.5 L1221.5 427.7 L1223 428.2 L1224.5 428.3 L1226 428.3 L1227.5 428.4 L1229 428.4 L1230.5 428.4 L1232 428.4 L1233.5 428.4 L1235 428.4 L1236.5 428.4 L1238 428.4 L1238.6 428.4 L1239.5 459 L1241 501.5 L1242.5 531.6 L1243.7 542.9 L1244 542.8 L1245.5 542.9 L1247 543 L1248.5 543 L1250 542.9 L1251.5 542.8 L1253 542.9 L1254.5 543 L1256 543 L1257.5 542.8 L1259 542.4 L1260.5 542.4 L1262 542.7 L1263.5 543 L1265 542.8 L1266.5 542.1 L1268 541.7 L1269.5 542.2 L1271 543.1 L1272.5 543.3 L1274 543.1 L1275.5 542.9 L1277 542.9 L1278.5 542.8 L1280 542.8 L1281.5 542.8 L1283 542.8 L1284.5 542.7 L1286 542.4 L1287.5 542 L1289 542.1 L1290.5 542.6 L1292 542.9 L1293.5 542.9 L1295 542.8 L1296.5 542.8 L1298 542.8 L1299.5 542.9 L1301 542.7 L1302.5 542.3 L1304 542.1 L1305.5 542.4 L1307 542.9 L1308.5 543 L1310 542.4 L1311.5 541.8 L1313 541.9 L1314.5 542.5 L1316 542.8 L1317.5 542.8 L1319 542.9 L1320.5 542.9 L1322 542.9 L1323 542.9 L1323.5 526.1 L1325 482.1 L1326.5 448.7 L1328 429.6 L1328.3 428.4 L1329.5 428.7 L1331 429.3 L1332.5 429.4 L1334 429.2 L1335.5 429 L1337 429 L1338.5 428.8 L1340 428.8 L1341.5 428.9 L1343 429.2 L1344.5 429.3 L1346 428.9 L1347.5 428.6 L1349 428.7 L1350.5 429.2 L1352 429.4 L1353.5 429.1 L1355 428.6 L1356.5 428.4 L1358 428.1 L1359.5 427.8 L1361 427.8 L1362.5 428.1 L1364 428.2 L1365.5 428.1 L1367 427.7 L1368.5 427.7 L1370 428.1 L1371.5 428.4 L1373 428.6 L1374.5 429.3 L1376 429.6 L1377.5 429.3 L1379 428.7 L1380.5 428.6 L1382 428.9 L1383.5 429.3 L1385 429.2 L1386.5 428.6 L1388 428.3 L1389.5 428.4 L1391 428.5 L1392.5 428.5 L1394 428.2 L1395.5 428 L1397 428.2 L1398.5 428.9 L1400 429.4 L1401.5 429.2 L1403 428.9 L1404.5 428.8 L1406 428.6 L1407.5 428.4 L1407.9 428.4 L1409 465.3 L1410.5 506.3 L1412 534.5 L1413 542.9 L1413.5 543.3 L1415 543.7 L1416.5 543.8 L1418 543.7 L1419.5 543.6 L1421 543.5 L1422.5 543.1 L1424 542.8 L1425.5 542.9 L1427 543 L1428.5 543 L1430 542.4 L1431.5 541.8 L1433 542.1 L1434.5 543.4 L1436 544.1 L1437.5 544 L1439 544 L1440.5 543.9 L1442 543.7 L1443.5 543.5 L1445 543.3 L1446.5 542.5 L1448 542.1 L1449.5 542.3 L1451 542.7 L1452.5 542.8 L1454 543.4 L1455.5 543.9 L1457 543.8 L1458.5 543.3 L1460 543 L1461.5 542.9 L1463 542.8 L1464.5 542.8 L1466 543.2 L1467.5 543.6 L1469 543.5 L1470.5 543 L1472 542.8 L1473.5 542.8 L1475 542.8 L1476.5 542.8 L1478 542.4 L1479.5 541.9 L1481 542.2 L1482.5 543.4 L1484 544.1 L1485.5 544 L1487 543.9 L1488.5 543.8 L1490 543.4 L1491.5 542.9 L1492.3 542.9 L1493 519.7 L1494.5 476.9 L1496 445.2 L1497.5 428.6 L1497.6 428.4 L1499 428.8 L1500.5 428.9 L1502 428.9 L1503.5 429 L1505 428.9 L1506.5 428.5 L1508 428.3 L1509.5 428.3 L1511 428.4 L1512.5 428.4 L1514 428.4 L1515.5 428.4 L1517 428.5 L1518.5 429.2 L1520 429.6 L1521.5 429.2 L1523 428.6 L1524.5 428.4 L1526 428 L1527.5 427.6 L1529 427.6 L1530.5 427.4 L1532 427.3 L1533.5 427.7 L1535 428.3 L1536.5 428.4 L1538 428.5 L1539.5 428.5 L1541 428.3 L1542.5 427.6 L1544 427.2 L1545.5 427.6 L1547 428.3 L1548.5 428.4 L1550 428.4 L1551.5 428.4 L1553 428.4 L1554.5 428.5 L1556 428.5 L1557.5 428.5 L1559 428.5 L1560.5 428.4 L1562 428.2 L1563.5 428 L1565 428.2 L1566.5 429.1 L1568 429.6 L1569.5 429.1 L1571 428.3 L1572.5 428.1 L1574 427.8 L1575.5 427.5 L1577 427.6 L1577.2 427.7 L1578.5 471.4 L1580 510.9 L1581.5 537 L1582.3 542.9 L1583 543 L1584.5 543 L1586 543.1 L1587.5 543.2 L1589 543 L1590.5 542.5 L1592 542.3 L1593.5 542.2 L1595 542 L1596.5 542 L1598 542.5 L1599.5 542.9 L1601 543 L1602.5 542.8 L1604 542.8 L1605.5 542.8 L1607 542.8 L1608.5 542.8 L1610 542.9 L1611.5 542.9 L1613 543.1 L1614.5 543.7 L1616 544.1 L1617.5 543.9 L1619 543.6 L1620.5 543.5 L1622 543.2 L1623.5 542.9 L1625 542.9 L1626.5 543 L1628 543 L1629.5 543.1 L1631 543.2 L1632.5 543.2 L1634 543 L1635.5 542.9 L1637 542.9 L1638.5 542.9 L1640 542.9 L1641.5 542.9 L1643 542.9 L1644.5 542.9 L1646 542.9 L1647.5 542.8 L1649 542.9 L1650.5 542.9 L1652 542.9 L1653.5 543 L1655 543.1 L1656.5 543.2 L1658 543.6 L1659.5 543.9 L1661 543.9 L1661.6 543.8 L1662.5 513.4 L1664 472 L1665.5 442 L1666.9 428.5 L1667 428.5 L1668.5 428.4 L1670 427.9 L1671.5 427.5 L1673 427.6 L1674.5 428.1 L1676 428.4 L1677.5 428.4 L1679 428.4 L1680.5 428.4 L1682 428.4 L1683.5 428.3 L1685 428.5 L1686.5 428.9 L1688 429.2 L1689.5 429.1 L1691 428.8 L1692.5 428.7 L1694 428.6 L1695.5 428.5 L1697 428.5 L1698.5 428.3 L1700 428.3 L1701.5 428.6 L1703 429.1 L1704.5 429.2 L1706 428.8 L1707.5 428.3 L1709 428.2 L1710 428" stroke="#e400e4"/>
<path d="M20 582.4 L22 578.1 L24 573.8 L26 570.1 L28 567.2 L30 564.2 L32 560.6 L34 557 L36 554 L38 551.6 L40 549.4 L42 547 L44 544.8 L46 543.1 L48 541.8 L50 540.8 L52 540 L54 539.4 L56 539.3 L58 539.6 L60 540.2 L62 540.9 L64 541.8 L66 543.3 L68 545.5 L70 547.9 L72 550 L74 552.2 L76 554.9 L78 558.2 L80 561.6 L82 564.9 L84 568.3 L86 572.1 L88 576.2 L90 580.3 L92 584.4 L94 588.7 L96 592.9 L98 597 L100 601.2 L102 605.4 L104 609.7 L106 613.7 L108 617.3 L110 620.9 L112 624.8 L114 628.6 L116 632.1 L118 635.4 L120 638.4 L122 641.3 L124 644 L126 646.2 L128 648.1 L130 649.7 L132 651.1 L134 652.3 L136 653.1 L138 653.5 L140 653.6 L142 653.5 L144 653.2 L146 652.4 L148 651.5 L150 650.2 L152 648.2 L154 645.7 L156 643.5 L158 641.4 L160 638.9 L162 635.9 L164 632.8 L166 629.4 L168 625.9 L170 622.2 L172 618.4 L174 614.5 L176 610.4 L178 606.1 L180 601.9 L182 597.7 L184 593.4 L186 589.3 L188 585.5 L190 581.6 L192 577.4 L194 573.1 L196 569.3 L198 566 L200 562.7 L202 559.3 L204 556 L206 553 L208 550 L210 547.3 L212 545.5 L214 544.2 L216 542.7 L218 541.6 L220 540.7 L222 539.9 L224 539.3 L226 539.4 L228 540.3 L230 541.3 L232 541.8 L234 542.4 L236 544 L238 546.2 L240 548.6 L242 551 L244 553.8 L246 556.7 L248 559.7 L250 562.9 L252 566.5 L254 570.3 L256 574.1 L258 578 L260 581.9 L262 586 L264 590.2 L266 594.4 L268 598.5 L270 602.7 L272 606.9 L274 611.1 L276 615.2 L278 619.6 L280 623.7 L282 627 L284 629.8 L286 633.1 L288 636.2 L290 639.1 L292 641.9 L294 644.6 L296 646.7 L298 648.6 L300 650.1 L302 651.3 L304 652.2 L306 653 L308 653.6 L310 653.8 L312 653.5 L314 652.8 L316 651.9 L318 650.4 L320 648.7 L322 647.1 L324 645.3 L326 643.1 L328 640.6 L330 637.9 L332 634.9 L334 631.6 L336 628.2 L338 624.5 L340 620.7 L342 616.9 L344 612.9 L346 608.8 L348 604.5 L350 600.2 L352 596 L354 591.8 L356 587.7 L358 583.6 L360 579.5 L362 575.7 L364 572.1 L366 568.4 L368 564.8 L370 561.4 L372 558.1 L374 554.9 L376 552.2 L378 550 L380 548 L382 546 L384 544.3 L386 542.8 L388 541.3 L390 540.3 L392 539.8 L394 539.6 L396 539.7 L398 540.2 L400 540.9 L402 542 L404 543.4 L406 545.1 L408 547.1 L410 549.4 L412 551.8 L414 554.6 L416 557.5 L418 560.7 L420 564.1 L422 567.5 L424 570.9 L426 574.8 L428 578.9 L430 583.1 L432 587.3 L434 591.5 L436 595.7 L438 599.6 L440 603.6 L442 608 L444 612.6 L446 616.7 L448 620.7 L450 624.5 L452 628.2 L454 631.9 L456 635.1 L458 637.8 L460 640.3 L462 643.1 L464 645.6 L466 647.8 L468 649.7 L470 651.3 L472 652.1 L474 652.5 L476 653 L478 653.5 L480 653.6 L482 653.2 L484 652.5 L486 651.6 L488 650.3 L490 648.8 L492 646.9 L494 644.7 L496 642.3 L498 639.8 L500 637 L502 633.6 L504 629.8 L506 626.3 L508 623.2 L510 619.7 L512 615.7 L514 611.6 L516 607.4 L518 603.2 L520 598.9 L522 594.7 L524 590.5 L526 586.3 L528 582.1 L530 578 L532 574.1 L534 570.3 L536 566.6 L538 563.3 L540 560 L542 556.9 L544 553.9 L546 551.2 L548 548.6 L550 546.4 L552 544.6 L554 543.1 L556 541.8 L558 540.8 L560 540 L562 539.9 L564 540.2 L566 540.5 L568 540.7 L570 541.4 L572 542.4 L574 543.5 L576 545.4 L578 548.1 L580 550.8 L582 553.1 L584 555.5 L586 558.5 L588 561.7 L590 565.2 L592 568.9 L594 572.8 L596 576.8 L598 581.1 L600 585.4 L602 589.3 L604 593 L606 597.2 L608 601.4 L610 605.6 L612 609.9 L614 614.3 L616 618.3 L618 622.2 L620 626 L622 629.1 L624 631.9 L626 635 L628 638.3 L630 641.3 L632 643.8 L634 646.2 L636 648.2 L638 649.8 L640 651.2 L642 652.3 L644 653.1 L646 653.6 L648 653.9 L650 653.8 L652 653.3 L654 652.5 L656 651.3 L658 649.8 L660 648 L662 646.1 L664 643.9 L666 641.5 L668 639.2 L670 636.5 L672 633.3 L674 629.8 L676 626.2 L678 622.2 L680 618.1 L682 613.9 L684 609.5 L686 605.3 L688 601.4 L690 597.4 L692 593.2 L694 589.1 L696 584.9 L698 580.8 L700 576.7 L702 572.8 L704 569.1 L706 565.5 L708 561.9 L710 558.5 L712 555.5 L714 552.7 L716 550.1 L718 547.5 L720 545.3 L722 544 L724 543.1 L726 542.1 L728 541.2 L730 540.6 L732 540.4 L734 540.5 L736 540.8 L738 541.3 L740 542.2 L742 543.4 L744 544.7 L746 546.6 L748 548.9 L750 551.5 L752 553.8 L754 556.3 L756 559.4 L758 562.8 L760 566.4 L762 570 L764 573.7 L766 577.7 L768 581.8 L770 586 L772 590.2 L774 594.4 L776 598.7 L778 603 L780 607.2 L782 611.3 L784 615.2 L786 619.2 L788 623.2 L790 626.9 L792 630.3 L794 633.5 L796 636.6 L798 639.6 L800 642.3 L802 644.7 L804 646.8 L806 648.7 L808 650.3 L810 651.6 L812 652.5 L814 653.1 L816 653.5 L818 653.6 L820 653.4 L822 652.6 L824 651.4 L826 650.2 L828 649.3 L830 647.9 L832 645.7 L834 643.1 L836 640.4 L838 637.4 L840 634.1 L842 630.9 L844 627.6 L846 624.1 L848 621 L850 617.5 L852 613.2 L854 608.8 L856 604.5 L858 600.3 L860 596 L862 591.8 L864 587.7 L866 583.6 L868 579.4 L870 575.4 L872 571.6 L874 568 L876 564.4 L878 561 L880 557.8 L882 554.9 L884 552.3 L886 549.7 L888 547 L890 544.7 L892 543.2 L894 542.2 L896 541.1 L898 540.3 L900 539.7 L902 539.7 L904 540 L906 540.5 L908 541.2 L910 542.3 L912 543.7 L914 545.3 L916 547.3 L918 549.5 L920 551.9 L922 554.7 L924 557.7 L926 560.9 L928 564.2 L930 567.7 L932 571.5 L934 575.4 L936 579.4 L938 583.4 L940 587.5 L942 591.7 L944 596.1 L946 600.4 L948 604.8 L950 609.2 L952 612.9 L954 616.3 L956 620.2 L958 624 L960 627.6 L962 631.4 L964 635.3 L966 638.4 L968 640.8 L970 643.2 L972 645.7 L974 647.9 L976 649.7 L978 651 L980 652 L982 652.9 L984 653.5 L986 653.7 L988 653.2 L990 652.6 L992 652.2 L994 651.6 L996 650.4 L998 648.9 L1000 647 L1002 644.8 L1004 642.4 L1006 639.7 L1008 636.7 L1010 633.6 L1012 630.1 L1014 626.2 L1016 622.5 L1018 619 L1020 615.3 L1022 611.3 L1024 607.2 L1026 602.9 L1028 598.5 L1030 594.1 L1032 590.2 L1034 586.6 L1036 582.5 L1038 578.1 L1040 574 L1042 570 L1044 566.2 L1046 562.7 L1048 559.6 L1050 556.6 L1052 553.7 L1054 551.1 L1056 548.8 L1058 546.7 L1060 544.9 L1062 543.4 L1064 542.3 L1066 541.2 L1068 540.1 L1070 539.4 L1072 539.5 L1074 539.9 L1076 540.6 L1078 541.8 L1080 543.3 L1082 544.6 L1084 546.1 L1086 548.1 L1088 550.3 L1090 552.9 L1092 555.7 L1094 558.8 L1096 562 L1098 565.4 L1100 569 L1102 572.8 L1104 576.7 L1106 580.6 L1108 584.3 L1110 588.3 L1112 593 L1114 598.1 L1116 602.4 L1118 606.5 L1120 610.6 L1122 614.4 L1124 617.9 L1126 621.8 L1128 625.7 L1130 629.3 L1132 632.7 L1134 635.8 L1136 638.8 L1138 642 L1140 644.7 L1142 646.7 L1144 648.3 L1146 649.9 L1148 651.4 L1150 652.5 L1152 653.5 L1154 654.2 L1156 654.4 L1158 654 L1160 653.3 L1162 652.4 L1164 651.2 L1166 649.8 L1168 648.3 L1170 646.4 L1172 644.1 L1174 641.4 L1176 638.7 L1178 636.2 L1180 633.2 L1182 629.8 L1184 626.1 L1186 622.3 L1188 618.1 L1190 613.9 L1192 610 L1194 606.1 L1196 601.9 L1198 597.5 L1200 593.1 L1202 588.8 L1204 584.6 L1206 580.4 L1208 576.1 L1210 572.1 L1212 568.6 L1214 565.3 L1216 562 L1218 558.7 L1220 555.7 L1222 552.8 L1224 550.1 L1226 547.8 L1228 546 L1230 544.4 L1232 542.8 L1234 541.4 L1236 540.5 L1238 539.9 L1240 539.7 L1242 539.7 L1244 540 L1246 540.7 L1248 541.8 L1250 543.2 L1252 544.8 L1254 546.7 L1256 548.9 L1258 551.7 L1260 554.6 L1262 557.3 L1264 560 L1266 563.2 L1268 566.4 L1270 569.9 L1272 573.9 L1274 578.2 L1276 582.3 L1278 586.3 L1280 590.5 L1282 594.7 L1284 599 L1286 603.2 L1288 607.3 L1290 611.4 L1292 615.4 L1294 619.4 L1296 623.1 L1298 626.5 L1300 629.7 L1302 633.2 L1304 636.6 L1306 639.6 L1308 642.4 L1310 645 L1312 646.9 L1314 648.5 L1316 650.1 L1318 651.5 L1320 652.5 L1322 653.2 L1324 653.5 L1326 653.6 L1328 653.1 L1330 652.4 L1332 651.6 L1334 650.5 L1336 649.1 L1338 647.3 L1340 645.3 L1342 643.2 L1344 641 L1346 638.3 L1348 635.1 L1350 631.8 L1352 628.2 L1354 624.3 L1356 620.5 L1358 616.2 L1360 612 L1362 608 L1364 604.2 L1366 600 L1368 595.8 L1370 591.6 L1372 587.4 L1374 583.2 L1376 579.2 L1378 575.6 L1380 572 L1382 567.9 L1384 563.8 L1386 560.4 L1388 557.3 L1390 554.5 L1392 551.7 L1394 549.2 L1396 547 L1398 545.1 L1400 543.5 L1402 542.4 L1404 541.7 L1406 540.9 L1408 539.8 L1410 539.3 L1412 539.6 L1414 540.4 L1416 541.2 L1418 542.3 L1420 543.7 L1422 545.6 L1424 547.8 L1426 550 L1428 552.1 L1430 554.5 L1432 557.7 L1434 561.1 L1436 564.5 L1438 568.1 L1440 571.8 L1442 575.6 L1444 579.5 L1446 583.6 L1448 587.8 L1450 592.1 L1452 596.2 L1454 600.3 L1456 604.5 L1458 608.7 L1460 612.9 L1462 617.1 L1464 621.4 L1466 625.1 L1468 628.4 L1470 631.7 L1472 634.9 L1474 638 L1476 640.8 L1478 643.2 L1480 645.3 L1482 647.4 L1484 649.2 L1486 650.8 L1488 652.3 L1490 653.5 L1492 653.8 L1494 653.8 L1496 653.6 L1498 653.3 L1500 652.7 L1502 651.8 L1504 650.7 L1506 649.1 L1508 647 L1510 644.7 L1512 642.3 L1514 639.7 L1516 636.8 L1518 633.5 L1520 630.1 L1522 626.6 L1524 623 L1526 619.2 L1528 615.2 L1530 611.2 L1532 607.1 L1534 602.9 L1536 598.7 L1538 594.6 L1540 590.4 L1542 586.1 L1544 581.9 L1546 577.7 L1548 573.4 L1550 569.3 L1552 565.9 L1554 562.9 L1556 559.6 L1558 556.2 L1560 553.1 L1562 550.4 L1564 547.9 L1566 545.8 L1568 544.4 L1570 543.1 L1572 541.8 L1574 540.7 L1576 540.1 L1578 539.7 L1580 539.6 L1582 539.9 L1584 540.5 L1586 541.5 L1588 542.8 L1590 544.4 L1592 546 L1594 547.8 L1596 550.1 L1598 552.8 L1600 555.8 L1602 558.9 L1604 562.3 L1606 565.8 L1608 569.6 L1610 573.6 L1612 577.2 L1614 580.6 L1616 584.7 L1618 589.1 L1620 593.4 L1622 597.7 L1624 602 L1626 606.3 L1628 610.6 L1630 614.8 L1632 618.8 L1634 622.7 L1636 626.4 L1638 629.6 L1640 632.8 L1642 636.1 L1644 639.3 L1646 642 L1648 644.3 L1650 646.3 L1652 648 L1654 649.3 L1656 650.7 L1658 652.2 L1660 653.2 L1662 653.6 L1664 653.7 L1666 653.5 L1668 653.1 L1670 652.4 L1672 651.4 L1674 650.2 L1676 648.5 L1678 646.3 L1680 643.9 L1682 641.3 L1684 638.5 L1686 635.4 L1688 632.2 L1690 628.8 L1692 625 L1694 621 L1696 617.2 L1698 613.7 L1700 609.9 L1702 605.7 L1704 601.3 L1706 597 L1708 592.5 L1710 588.1 L1710 588.1" stroke="#0a7cea"/>
<path d="M20 654.3 L21.5 654.4 L23 654.7 L24.5 654.8 L26 654.3 L27.5 653.8 L29 653.8 L30.5 654.2 L32 654.4 L33.5 654.4 L35 654.4 L36.5 654.4 L38 654.4 L39.5 654.4 L41 654.4 L42.5 654.4 L44 654.4 L45.5 654.1 L47 653.7 L48.5 653.6 L50 654.4 L51.5 655.1 L53 655.1 L53.5 654.3 L54.5 687.9 L56 729.6 L57.5 758.6 L58.6 768.1 L59 768.1 L60.5 768.1 L62 768.4 L63.5 768.7 L65 768.7 L66.5 768.5 L68 768.3 L69.5 768.1 L71 767.7 L72.5 767.7 L74 768.5 L75.5 769.3 L77 769.2 L78.5 768.7 L80 768.4 L81.5 768.1 L83 767.6 L84.5 767.5 L86 768.3 L87.5 769 L89 769.2 L90.5 769.5 L92 769.6 L93.5 769.3 L95 768.7 L96.5 768.5 L98 768.8 L99.5 769.2 L101 768.9 L102.5 768 L104 767.4 L105.5 767.7 L107 768.3 L108.5 768.4 L110 768.1 L111.5 767.8 L113 768 L114.5 768.9 L116 769.4 L117.5 769.1 L119 768.7 L120.5 768.5 L122 768.5 L123.5 768.4 L125 768.4 L126.5 768.4 L128 768.4 L129.5 768.4 L131 768.5 L132.5 768.5 L134 767.8 L135.5 767.2 L137 767.4 L137.9 768.4 L138.5 748.4 L140 705.2 L141.5 672.8 L143 654.9 L143.2 653.2 L144.5 653.1 L146 653.7 L147.5 654.3 L149 654.2 L150.5 653.5 L152 653.2 L153.5 653.5 L155 654.1 L156.5 654.3 L158 654.1 L159.5 653.9 L161 653.9 L162.5 654.2 L164 654.4 L165.5 654.5 L167 654.6 L168.5 654.6 L170 654.2 L171.5 653.7 L173 653.7 L174.5 654.1 L176 654.3 L177.5 654.3 L179 654.5 L180.5 654.5 L182 654 L183.5 653.6 L185 653.7 L186.5 654.2 L188 654.5 L189.5 654.5 L191 654.4 L192.5 654.3 L194 653.8 L195.5 653.3 L197 653.4 L198.5 653.9 L200 654.2 L201.5 654.1 L203 654.1 L204.5 654.1 L206 654.2 L207.5 654.4 L209 654.4 L210.5 654.6 L212 654.7 L213.5 654.6 L215 654.3 L216.5 654.3 L218 654.8 L219.5 655.3 L221 655.2 L222.5 654.5 L222.8 654.3 L224 694.1 L225.5 734.2 L227 761.3 L227.9 768.4 L228.5 769.6 L230 768.9 L231.5 768.2 L233 768.2 L234.5 768.4 L236 768.5 L237.5 768.5 L239 768.5 L240.5 768.4 L242 767.9 L243.5 767.4 L245 767.5 L246.5 768.1 L248 768.5 L249.5 768.1 L251 767.5 L252.5 767.4 L254 768.4 L255.5 769.4 L257 769.4 L258.5 769 L260 768.8 L261.5 768.7 L263 768.5 L264.5 768.4 L266 768.4 L267.5 768.3 L269 768.2 L270.5 767.5 L272 767.2 L273.5 767.5 L275 768.1 L276.5 768.3 L278 768.4 L279.5 768.5 L281 768.6 L282.5 769 L284 769.2 L285.5 768.9 L287 768.5 L288.5 768.5 L290 768.8 L291.5 769.1 L293 769 L294.5 768.7 L296 768.5 L297.5 768.8 L299 769.2 L300.5 769.2 L302 768.9 L303.5 768.5 L305 768.5 L306.5 768.5 L307.2 768.4 L308 742.1 L309.5 700.2 L311 669.4 L312.5 654.3 L314 653.8 L315.5 653.2 L317 653.3 L318.5 653.9 L320 654.2 L321.5 653.9 L323 653.2 L324.5 653.1 L326 653.6 L327.5 654.1 L329 654.2 L330.5 654.3 L332 654.4 L333.5 654.1 L335 653.5 L336.5 653.4 L338 653.8 L339.5 654.2 L341 654.1 L342.5 653.6 L344 653.3 L345.5 653.6 L347 654.2 L348.5 654.3 L350 653.8 L351.5 653.3 L353 653.4 L354.5 654.1 L356 654.4 L357.5 654.3 L359 654.2 L360.5 654.2 L362 654 L363.5 653.8 L365 653.9 L366.5 654.1 L368 654.2 L369.5 654.3 L371 654.4 L372.5 654.4 L374 654.3 L375.5 654.2 L377 654 L378.5 653.6 L380 653.3 L381.5 653.6 L383 654.2 L384.5 654.3 L386 654.3 L387.5 654.3 L389 654.3 L390.5 654.5 L392 654.6 L392.1 654.3 L393.5 700.1 L395 738.7 L396.5 763.6 L397.2 768.4 L398 768.5 L399.5 768.5 L401 768.5 L402.5 768.5 L404 768.5 L405.5 768.4 L407 768.3 L408.5 768.3 L410 768.4 L411.5 768.5 L413 768.6 L414.5 769.1 L416 769.3 L417.5 769.4 L419 769.5 L420.5 769.5 L422 769.2 L423.5 768.9 L425 768.8 L426.5 768.2 L428 767.9 L429.5 767.9 L431 768 L432.5 768 L434 768.1 L435.5 768.2 L437 768.3 L438.5 768.4 L440 768.4 L441.5 768.5 L443 768.5 L444.5 768.5 L446 768.5 L447.5 768.5 L449 768.5 L450.5 768.4 L452 768.3 L453.5 768.3 L455 768.2 L456.5 768.2 L458 768 L459.5 767.7 L461 767.8 L462.5 768.3 L464 768.5 L465.5 768.7 L467 769 L468.5 769.1 L470 768.8 L471.5 768.5 L473 768.5 L474.5 768.4 L476 768.4 L476.5 768.4 L477.5 736 L479 695.4 L480.5 666.3 L481.8 654.9 L482 654.9 L483.5 654.6 L485 654.6 L486.5 654.5 L488 654.4 L489.5 654.3 L491 654.2 L492.5 654.2 L494 654.3 L495.5 654.3 L497 654.4 L498.5 654.4 L500 654.4 L501.5 654.7 L503 655.2 L504.5 655.3 L506 654.9 L507.5 654.5 L509 654.3 L510.5 653.8 L512 653.6 L513.5 654.1 L515 655.1 L516.5 655.3 L518 654.5 L519.5 653.8 L521 653.8 L522.5 654.2 L524 654.4 L525.5 654.4 L527 654.2 L528.5 654.2 L530 654.3 L531.5 654.3 L533 654.4 L534.5 654.4 L536 654.4 L537.5 654.2 L539 653.8 L540.5 653.7 L542 654.2 L543.5 654.7 L545 654.6 L546.5 654 L548 653.7 L549.5 653.9 L551 654.2 L552.5 654.3 L554 654.3 L555.5 654.3 L557 654.3 L558.5 654.4 L560 654.4 L561.4 654 L561.5 657.9 L563 705.9 L564.5 742.9 L566 765.6 L566.5 768.4 L567.5 767.2 L569 767.2 L570.5 767.4 L572 767.5 L573.5 767.8 L575 768.3 L576.5 768.4 L578 768.4 L579.5 768.5 L581 768.5 L582.5 768.9 L584 769.1 L585.5 768.6 L587 767.6 L588.5 767.4 L590 767.8 L591.5 768.1 L593 768.2 L594.5 768.3 L596 768.4 L597.5 768.4 L599 768.3 L600.5 768.3 L602 768.3 L603.5 768.3 L605 768.3 L606.5 768.3 L608 768.3 L609.5 768.3 L611 768.3 L612.5 768.3 L614 768.4 L615.5 768.5 L617 768.5 L618.5 768.4 L620 768.3 L621.5 768.1 L623 767.7 L624.5 767.7 L626 768 L627.5 768.3 L629 768.3 L630.5 768.4 L632 768.4 L633.5 768.4 L635 768.3 L636.5 768.3 L638 767.8 L639.5 767.4 L641 767.5 L642.5 768.1 L644 768.4 L645.5 768.4 L645.8 768.4 L647 730 L648.5 690.8 L650 663.5 L651.1 653.3 L651.5 653.3 L653 653.5 L654.5 654.6 L656 655.2 L657.5 655.3 L659 655.4 L660.5 655.4 L662 655.2 L663.5 654.9 L665 654.9 L666.5 655 L668 655 L669.5 654.7 L671 654.1 L672.5 654 L674 654.1 L675.5 654.2 L677 654.3 L678.5 654.8 L680 655 L681.5 654.7 L683 654.2 L684.5 654 L686 654.1 L687.5 654.2 L689 654.1 L690.5 653.8 L692 653.6 L693.5 653.7 L695 653.9 L696.5 654 L698 654.1 L699.5 654.3 L701 654.3 L702.5 654.2 L704 654.2 L705.5 654.2 L707 654.4 L708.5 654.4 L710 653.8 L711.5 653.2 L713 653.2 L714.5 653.3 L716 653.3 L717.5 653.8 L719 654.6 L720.5 654.8 L722 654.1 L723.5 653.4 L725 653.4 L726.5 653.4 L728 653.5 L729.5 653.7 L730.7 654.3 L731 664.8 L732.5 711.5 L734 746.8 L735.5 767.2 L735.8 768.4 L737 767.5 L738.5 768 L740 768.3 L741.5 768.4 L743 768.4 L744.5 768.4 L746 768.1 L747.5 767.7 L749 767.8 L750.5 768.2 L752 768.4 L753.5 768.5 L755 768.5 L756.5 768.5 L758 768.4 L759.5 768.3 L761 768.3 L762.5 768.4 L764 768.4 L765.5 768.2 L767 767.7 L768.5 767.6 L770 767.9 L771.5 768.3 L773 768.2 L774.5 768 L776 767.8 L777.5 768 L779 768.3 L780.5 768.4 L782 768.3 L783.5 768.3 L785 768.2 L786.5 768 L788 767.9 L789.5 768.2 L791 768.7 L792.5 768.8 L794 768.1 L795.5 767.5 L797 767.6 L798.5 768.1 L800 768.4 L801.5 768 L803 767.4 L804.5 767.2 L806 767.8 L807.5 768.4 L809 768.4 L810.5 768.4 L812 768.3 L813.5 768.4 L815 768.4 L815.1 768.4 L816.5 724.1 L818 686.4 L819.5 661 L820.4 654.3 L821 654.3 L822.5 654.3 L824 654.3 L825.5 654.6 L827 655 L828.5 655 L830 654.7 L831.5 654.4 L833 654.4 L834.5 654.3 L836 654.3 L837.5 654.2 L839 654.2 L840.5 654.2 L842 654.4 L843.5 654.5 L845 654.5 L846.5 654.3 L848 654.2 L849.5 653.9 L851 653.3 L852.5 653.1 L854 653.3 L855.5 653.4 L857 653.6 L858.5 654.5 L860 654.9 L861.5 654.8 L863 654.5 L864.5 654.4 L866 654.6 L867.5 654.7 L869 654.8 L870.5 655.2 L872 655.4 L873.5 655.1 L875 654.4 L876.5 654.2 L878 654.3 L879.5 654.4 L881 654.6 L882.5 655.2 L884 655.5 L885.5 655.1 L887 654.4 L888.5 654.2 L890 654.2 L891.5 654.2 L893 654.2 L894.5 654.3 L896 654.3 L897.5 654.6 L899 655.3 L900 655.5 L900.5 671.7 L902 717 L903.5 750.5 L905 768.2 L905.1 768.4 L906.5 768.6 L908 768.8 L909.5 768.6 L911 768.2 L912.5 768.1 L914 768.7 L915.5 769.2 L917 769.1 L918.5 768.8 L920 768.7 L921.5 768.6 L923 768.3 L924.5 768.3 L926 768.4 L927.5 768.5 L929 768.4 L930.5 768 L932 767.8 L933.5 768.3 L935 769.3 L936.5 769.5 L938 768.5 L939.5 767.6 L941 767.6 L942.5 768.1 L944 768.4 L945.5 768.4 L947 768.3 L948.5 768.2 L950 767.9 L951.5 767.6 L953 767.7 L954.5 768.1 L956 768.4 L957.5 768.7 L959 769.2 L960.5 769.3 L962 768.9 L963.5 768.5 L965 768.5 L966.5 768.4 L968 768.3 L969.5 768.3 L971 768.4 L972.5 768.4 L974 768.9 L975.5 769.4 L977 769.1 L978.5 767.9 L980 767.2 L981.5 767.4 L983 767.8 L984.4 767.9 L984.5 765 L986 718.5 L987.5 682.2 L989 658.8 L989.7 654.4 L990.5 654.4 L992 654.4 L993.5 654.4 L995 654.4 L996.5 654.4 L998 654.3 L999.5 654.3 L1001 654.2 L1002.5 653.9 L1004 653.7 L1005.5 653.9 L1007 654.2 L1008.5 654.3 L1010 654.4 L1011.5 654.4 L1013 654.4 L1014.5 654.3 L1016 654.2 L1017.5 654.5 L1019 655.1 L1020.5 655.3 L1022 654.7 L1023.5 654.2 L1025 654.2 L1026.5 654.2 L1028 654.2 L1029.5 654.1 L1031 654 L1032.5 654 L1034 654.2 L1035.5 654.3 L1037 654.4 L1038.5 654.7 L1040 654.9 L1041.5 654.7 L1043 654.4 L1044.5 654.3 L1046 654.3 L1047.5 654.4 L1049 654.4 L1050.5 654.3 L1052 654.2 L1053.5 654.3 L1055 654.3 L1056.5 654.4 L1058 654.3 L1059.5 654.2 L1061 654.2 L1062.5 654.3 L1064 654.4 L1065.5 654.3 L1067 654.2 L1068.5 654.1 L1069.3 654.1 L1070 678.3 L1071.5 722.2 L1073 754 L1074.4 769.1 L1074.5 769.2 L1076 769.6 L1077.5 769.2 L1079 768.5 L1080.5 768.3 L1082 768.3 L1083.5 768.4 L1085 768.4 L1086.5 768.4 L1088 768.5 L1089.5 768.2 L1091 767.8 L1092.5 767.7 L1094 767.8 L1095.5 767.8 L1097 767.8 L1098.5 767.6 L1100 767.5 L1101.5 767.7 L1103 768.1 L1104.5 768.2 L1106 768.4 L1107.5 768.6 L1109 768.6 L1110.5 768.5 L1112 768.4 L1113.5 768.6 L1115 768.8 L1116.5 768.9 L1118 768.2 L1119.5 767.6 L1121 767.5 L1122.5 767.3 L1124 767.2 L1125.5 767.5 L1127 768.1 L1128.5 768.3 L1130 768.9 L1131.5 769.5 L1133 769.4 L1134.5 768.8 L1136 768.5 L1137.5 768.5 L1139 768.4 L1140.5 768.4 L1142 768.5 L1143.5 768.5 L1145 768.6 L1146.5 768.9 L1148 769.1 L1149.5 768.7 L1151 768 L1152.5 767.8 L1153.7 768 L1154 758.2 L1155.5 713 L1157 678.3 L1158.5 656.9 L1159 654.3 L1160 654.4 L1161.5 654.3 L1163 654.2 L1164.5 654.2 L1166 654.3 L1167.5 654.4 L1169 654.4 L1170.5 654.3 L1172 654.2 L1173.5 653.9 L1175 653.2 L1176.5 653.1 L1178 653.9 L1179.5 654.7 L1181 654.6 L1182.5 654 L1184 653.6 L1185.5 654 L1187 654.7 L1188.5 654.8 L1190 654.5 L1191.5 654.2 L1193 654.3 L1194.5 655 L1196 655.4 L1197.5 655 L1199 654.4 L1200.5 654.2 L1202 654.3 L1203.5 654.3 L1205 654.3 L1206.5 654.2 L1208 654.1 L1209.5 654 L1211 653.8 L1212.5 653.7 L1214 653.5 L1215.5 653.3 L1217 653.3 L1218.5 653.3 L1220 653.3 L1221.5 653.6 L1223 654.2 L1224.5 654.4 L1226 654.7 L1227.5 655 L1229 654.9 L1230.5 654.5 L1232 654.3 L1233.5 654 L1235 653.6 L1236.5 653.6 L1238 653.9 L1238.6 654.1 L1239.5 684.8 L1241 727.2 L1242.5 757.1 L1243.7 768.4 L1244 767.5 L1245.5 767.8 L1247 768.2 L1248.5 768.4 L1250 768.3 L1251.5 768.3 L1253 768.3 L1254.5 768.4 L1256 768.5 L1257.5 768.5 L1259 768.6 L1260.5 768.6 L1262 768.8 L1263.5 768.9 L1265 768.9 L1266.5 768.6 L1268 768.5 L1269.5 768.1 L1271 767.5 L1272.5 767.4 L1274 767.9 L1275.5 768.4 L1277 768.3 L1278.5 767.9 L1280 767.6 L1281.5 767.8 L1283 768.2 L1284.5 768.3 L1286 768.3 L1287.5 768.3 L1289 768.3 L1290.5 768.2 L1292 768.2 L1293.5 768.3 L1295 768.4 L1296.5 768.5 L1298 768.7 L1299.5 768.9 L1301 768.8 L1302.5 768.2 L1304 767.9 L1305.5 768.1 L1307 768.4 L1308.5 768.5 L1310 768.5 L1311.5 768.5 L1313 768.4 L1314.5 768.1 L1316 767.9 L1317.5 768.1 L1319 768.3 L1320.5 768.3 L1322 768 L1323 767.8 L1323.5 751.7 L1325 707.8 L1326.5 674.6 L1328 655.5 L1328.3 654.3 L1329.5 654.4 L1331 654.4 L1332.5 654.4 L1334 654.3 L1335.5 654.3 L1337 654.3 L1338.5 654.7 L1340 654.9 L1341.5 654.8 L1343 654.6 L1344.5 654.5 L1346 653.9 L1347.5 653.2 L1349 653.3 L1350.5 653.9 L1352 654.2 L1353.5 654.3 L1355 654.4 L1356.5 654.4 L1358 654 L1359.5 653.6 L1361 653.7 L1362.5 654.1 L1364 654.3 L1365.5 654.3 L1367 654.3 L1368.5 654.3 L1370 654.3 L1371.5 654.3 L1373 654.3 L1374.5 654.2 L1376 654.2 L1377.5 654.1 L1379 654 L1380.5 654 L1382 653.8 L1383.5 653.7 L1385 653.8 L1386.5 654.1 L1388 654.2 L1389.5 654.2 L1391 654.2 L1392.5 654.2 L1394 654.3 L1395.5 654.4 L1397 654.3 L1398.5 654.2 L1400 654.2 L1401.5 654.2 L1403 654.4 L1404.5 654.4 L1406 654.3 L1407.5 654.2 L1407.9 654.3 L1409 691 L1410.5 731.9 L1412 760 L1413 768.4 L1413.5 768.3 L1415 767.5 L1416.5 767.3 L1418 767.9 L1419.5 768.5 L1421 768.5 L1422.5 768.4 L1424 768.3 L1425.5 768.3 L1427 768.3 L1428.5 768.4 L1430 768.7 L1431.5 769 L1433 768.9 L1434.5 768.6 L1436 768.4 L1437.5 768.3 L1439 768.2 L1440.5 768.2 L1442 768.8 L1443.5 769.5 L1445 769.3 L1446.5 768.4 L1448 767.9 L1449.5 768 L1451 768.2 L1452.5 768.3 L1454 767.8 L1455.5 767.4 L1457 767.5 L1458.5 768.1 L1460 768.5 L1461.5 768.4 L1463 768.3 L1464.5 768.3 L1466 768.7 L1467.5 769 L1469 768.9 L1470.5 768.3 L1472 768 L1473.5 767.9 L1475 767.8 L1476.5 767.8 L1478 768 L1479.5 768.3 L1481 768.4 L1482.5 768.8 L1484 769 L1485.5 768.9 L1487 768.6 L1488.5 768.6 L1490 769 L1491.5 769.5 L1492.3 769.5 L1493 745.3 L1494.5 702.7 L1496 671.1 L1497.5 654.5 L1497.6 654.3 L1499 654.8 L1500.5 654.8 L1502 654.5 L1503.5 654.2 L1505 654.4 L1506.5 655.1 L1508 655.4 L1509.5 655.3 L1511 655.1 L1512.5 655 L1514 654.4 L1515.5 653.7 L1517 653.8 L1518.5 654.1 L1520 654.2 L1521.5 654.2 L1523 654.2 L1524.5 654.2 L1526 654.2 L1527.5 654.2 L1529 654.3 L1530.5 654.7 L1532 654.9 L1533.5 654.5 L1535 653.7 L1536.5 653.6 L1538 654.3 L1539.5 655 L1541 655 L1542.5 654.6 L1544 654.3 L1545.5 654.5 L1547 654.9 L1548.5 654.9 L1550 654.7 L1551.5 654.4 L1553 654.4 L1554.5 654.3 L1556 654.2 L1557.5 654.3 L1559 654.4 L1560.5 654.4 L1562 654.2 L1563.5 654 L1565 654 L1566.5 653.9 L1568 653.9 L1569.5 653.7 L1571 653.4 L1572.5 653.4 L1574 654.3 L1575.5 655.2 L1577 655.2 L1577.2 655.2 L1578.5 697.1 L1580 736.5 L1581.5 762.5 L1582.3 768.4 L1583 768.5 L1584.5 768.5 L1586 769 L1587.5 769.4 L1589 769.3 L1590.5 768.8 L1592 768.5 L1593.5 768.5 L1595 768.5 L1596.5 768.5 L1598 768.4 L1599.5 768.3 L1601 768.3 L1602.5 768.4 L1604 768.4 L1605.5 768.3 L1607 768.3 L1608.5 768.3 L1610 768.3 L1611.5 768.3 L1613 768.4 L1614.5 768.4 L1616 768.4 L1617.5 768.4 L1619 768.5 L1620.5 768.5 L1622 768.4 L1623.5 768.3 L1625 768.3 L1626.5 768.4 L1628 768.5 L1629.5 768.5 L1631 768.4 L1632.5 768.5 L1634 768.9 L1635.5 769.3 L1637 769.2 L1638.5 768.7 L1640 768.4 L1641.5 768.6 L1643 769 L1644.5 769.1 L1646 768.8 L1647.5 768.5 L1649 768.4 L1650.5 768.2 L1652 768 L1653.5 767.8 L1655 767.5 L1656.5 767.4 L1658 767.3 L1659.5 767.2 L1661 767.4 L1661.6 767.6 L1662.5 739 L1664 697.8 L1665.5 667.9 L1666.9 653.4 L1667 653.4 L1668.5 653.3 L1670 653.7 L1671.5 654.2 L1673 654.2 L1674.5 654.1 L1676 654.1 L1677.5 654.2 L1679 654.4 L1680.5 654.4 L1682 654.5 L1683.5 654.6 L1685 654.6 L1686.5 654.4 L1688 654.3 L1689.5 654.3 L1691 654.4 L1692.5 654.4 L1694 654.8 L1695.5 655.2 L1697 655.1 L1698.5 654.5 L1700 654.2 L1701.5 654.2 L1703 654.4 L1704.5 654.4 L1706 654.3 L1707.5 654.3 L1709 654.4 L1710 654.8" stroke="#ecc452"/>
<path d="M20 774.3 L21.5 774.4 L23 774.6 L24.5 774.7 L26 775.1 L27.5 775.6 L29 775.5 L30.5 775.1 L32 774.8 L33.5 774.9 L35 775.1 L36.5 775.1 L38 774.4 L39.5 773.6 L41 773.7 L42.5 774.4 L44 774.7 L45.5 774.7 L47 774.6 L48.5 774.6 L50 774.9 L51.5 775.2 L53 775.1 L54.5 774.7 L56 774.5 L57.4 774.6 L57.5 777 L59 810.1 L60.5 837.4 L62 858.8 L63.5 873.9 L65 882.6 L66 884.3 L66.5 884.4 L68 884.5 L69.5 884.3 L71 884 L72.5 883.9 L74 884.4 L75.5 884.9 L77 884.9 L78.5 884.7 L80 884.5 L81.5 884.5 L83 884.5 L84.5 884.5 L86 885 L87.5 885.5 L89 885.4 L90.5 884.8 L92 884.4 L93.5 884.4 L95 884.3 L96.5 884.3 L98 884.4 L99.5 884.4 L101 884.4 L102.5 884.5 L104 884.5 L105.5 884.8 L107 885.3 L108.5 885.4 L110 884.3 L111.5 883.3 L113 883.4 L114.5 884.1 L116 884.5 L117.5 884.5 L119 884.5 L120.5 884.5 L122 884.5 L123.5 884.5 L125 884.5 L126.5 884.4 L128 884.3 L129.5 884.4 L131 884.5 L132.5 884.5 L134 884.6 L135.5 884.6 L137 884.5 L138.5 884.1 L140 883.8 L141.5 884 L142.3 884.4 L143 867.3 L144.5 835.3 L146 809.7 L147.5 790.9 L149 779 L150.5 774 L152 774.2 L153.5 774.3 L155 774.6 L156.5 774.6 L158 774.3 L159.5 774 L161 774.1 L162.5 774.3 L164 774.5 L165.5 774.6 L167 774.7 L168.5 774.7 L170 774.8 L171.5 774.8 L173 774.8 L174.5 774.7 L176 774.7 L177.5 774.7 L179 774.7 L180.5 774.7 L182 775.1 L183.5 775.4 L185 775.3 L186.5 774.8 L188 774.5 L189.5 774.5 L191 774.6 L192.5 774.5 L194 774.1 L195.5 773.6 L197 773.7 L198.5 774.3 L200 774.7 L201.5 774.6 L203 774.5 L204.5 774.5 L206 774.6 L207.5 774.7 L209 774.8 L210.5 775.1 L212 775.3 L213.5 774.8 L215 774.1 L216.5 773.9 L218 774.1 L219.5 774.4 L221 774.4 L222.5 774.5 L224 774.5 L225.5 774.3 L226.7 774.1 L227 781.8 L228.5 814.1 L230 840.6 L231.5 861.1 L233 875.4 L234.5 883.2 L235.3 884.4 L236 884.4 L237.5 884.4 L239 884.4 L240.5 884.4 L242 885 L243.5 885.5 L245 885.6 L246.5 885.5 L248 885.5 L249.5 884.9 L251 883.9 L252.5 883.7 L254 884 L255.5 884.3 L257 884.2 L258.5 883.6 L260 883.3 L261.5 883.7 L263 884.4 L264.5 884.5 L266 884.3 L267.5 884.1 L269 884 L270.5 884 L272 884 L273.5 884.1 L275 884.3 L276.5 884.4 L278 884.8 L279.5 885.3 L281 885.2 L282.5 884.6 L284 884.3 L285.5 884.3 L287 884.4 L288.5 884.5 L290 884.6 L291.5 884.7 L293 884.7 L294.5 884.5 L296 884.4 L297.5 884.2 L299 884 L300.5 883.9 L302 884.2 L303.5 884.4 L305 884.5 L306.5 884.5 L308 884.5 L309.5 884.4 L311 884.1 L311.6 884.4 L312.5 862.6 L314 831.5 L315.5 806.8 L317 788.9 L318.5 777.9 L319.8 774.7 L320 774.7 L321.5 775 L323 775.6 L324.5 775.7 L326 775.1 L327.5 774.6 L329 774.4 L330.5 773.9 L332 773.6 L333.5 774 L335 774.5 L336.5 774.7 L338 774.4 L339.5 774.2 L341 774.2 L342.5 774.5 L344 774.6 L345.5 774.9 L347 775.4 L348.5 775.6 L350 775.1 L351.5 774.7 L353 774.7 L354.5 774.7 L356 774.6 L357.5 774.5 L359 774.2 L360.5 774.2 L362 774.5 L363.5 774.8 L365 774.8 L366.5 774.6 L368 774.5 L369.5 774.5 L371 774.3 L372.5 774.4 L374 775 L375.5 775.6 L377 775.5 L378.5 774.9 L380 774.5 L381.5 774.8 L383 775.3 L384.5 775.4 L386 775.2 L387.5 775.1 L389 774.9 L390.5 774.2 L392 773.8 L393.5 774.3 L395 775.1 L396 774.6 L396.5 786.4 L398 818 L399.5 843.7 L401 863.4 L402.5 876.9 L404 883.7 L404.6 883.8 L405.5 884 L407 884.4 L408.5 884.5 L410 884.5 L411.5 884.5 L413 884.5 L414.5 884.5 L416 884.5 L417.5 884.8 L419 885.3 L420.5 885.4 L422 884.5 L423.5 883.7 L425 883.8 L426.5 884.2 L428 884.5 L429.5 884.2 L431 883.5 L432.5 883.4 L434 883.9 L435.5 884.4 L437 884.5 L438.5 884.5 L440 884.5 L441.5 884.2 L443 883.5 L444.5 883.3 L446 883.2 L447.5 883.2 L449 883.4 L450.5 884.1 L452 884.4 L453.5 884.2 L455 883.7 L456.5 883.6 L458 884.1 L459.5 884.6 L461 884.7 L462.5 884.6 L464 884.5 L465.5 884.9 L467 885.4 L468.5 885.5 L470 884.9 L471.5 884.2 L473 884.1 L474.5 883.9 L476 883.7 L477.5 884 L479 884.4 L480.5 884.5 L480.9 884.5 L482 858.1 L483.5 827.8 L485 804 L486.5 787 L488 777 L489.1 774 L489.5 774.2 L491 775 L492.5 775.2 L494 774.9 L495.5 774.7 L497 774.6 L498.5 774.5 L500 774.5 L501.5 774.7 L503 775.2 L504.5 775.3 L506 775 L507.5 774.6 L509 774.6 L510.5 774.6 L512 774.6 L513.5 774.5 L515 774.4 L516.5 774.4 L518 774.5 L519.5 774.7 L521 774.7 L522.5 774.6 L524 774.6 L525.5 774.4 L527 773.9 L528.5 773.8 L530 774.4 L531.5 775 L533 775.1 L534.5 775.3 L536 775.4 L537.5 775.1 L539 774.7 L540.5 774.6 L542 775 L543.5 775.3 L545 775.3 L546.5 775.1 L548 775 L549.5 774.9 L551 774.7 L552.5 774.7 L554 775.2 L555.5 775.7 L557 775.6 L558.5 775 L560 774.7 L561.5 774.7 L563 774.6 L564.5 774.5 L565.3 774.4 L566 791 L567.5 821.8 L569 846.7 L570.5 865.6 L572 878.2 L573.5 884.1 L573.9 884.4 L575 884.5 L576.5 884.5 L578 884.5 L579.5 884.5 L581 884.5 L582.5 884.9 L584 885 L585.5 884.9 L587 884.7 L588.5 884.7 L590 885 L591.5 885.3 L593 885.1 L594.5 884.3 L596 883.8 L597.5 884 L599 884.2 L600.5 884.3 L602 884.4 L603.5 884.5 L605 884.6 L606.5 884.9 L608 885.1 L609.5 884.9 L611 884.6 L612.5 884.5 L614 884.5 L615.5 884.4 L617 884.4 L618.5 884.3 L620 884.3 L621.5 884.3 L623 884.3 L624.5 884.2 L626 883.9 L627.5 883.5 L629 883.6 L630.5 884.1 L632 884.4 L633.5 884.4 L635 884.3 L636.5 884.3 L638 884.4 L639.5 884.4 L641 884.4 L642.5 884.4 L644 884.4 L645.5 884.4 L647 884.3 L648.5 884.3 L650 884.3 L650.2 884.4 L651.5 853.7 L653 824.2 L654.5 801.4 L656 785.2 L657.5 776.2 L658.4 774.6 L659 774.9 L660.5 774.8 L662 774.8 L663.5 774.8 L665 774.8 L666.5 774.7 L668 774.7 L669.5 774.9 L671 775.4 L672.5 775.5 L674 775.6 L675.5 775.7 L677 775.4 L678.5 774.3 L680 773.6 L681.5 773.9 L683 774.4 L684.5 774.5 L686 774.5 L687.5 774.5 L689 774.5 L690.5 774.6 L692 774.6 L693.5 774.6 L695 774.5 L696.5 774.5 L698 774.5 L699.5 774.6 L701 774.7 L702.5 775.1 L704 775.4 L705.5 775.1 L707 774.7 L708.5 774.6 L710 775 L711.5 775.4 L713 775.3 L714.5 774.8 L716 774.5 L717.5 774.5 L719 774.5 L720.5 774.5 L722 774.6 L723.5 774.7 L725 774.8 L726.5 775.4 L728 775.7 L729.5 775.1 L731 774 L732.5 773.7 L734 774.1 L734.6 774.6 L735.5 795.4 L737 825.4 L738.5 849.6 L740 867.6 L741.5 879.4 L743 884.3 L743.2 883.6 L744.5 883.6 L746 884 L747.5 884.4 L749 884.4 L750.5 884.3 L752 884.3 L753.5 884.3 L755 884.3 L756.5 884.3 L758 884.4 L759.5 884.4 L761 884.4 L762.5 884.5 L764 884.5 L765.5 884.5 L767 884.4 L768.5 884.4 L770 884.4 L771.5 884.4 L773 884.5 L774.5 885.1 L776 885.4 L777.5 885.1 L779 884.6 L780.5 884.4 L782 884.4 L783.5 884.3 L785 884.4 L786.5 884.9 L788 885.2 L789.5 885 L791 884.6 L792.5 884.5 L794 884.7 L795.5 884.8 L797 884.8 L798.5 884.5 L800 884.4 L801.5 884.1 L803 883.6 L804.5 883.5 L806 883.9 L807.5 884.3 L809 884.3 L810.5 884.2 L812 884.1 L813.5 884.2 L815 884.4 L816.5 884.5 L818 884.4 L819.5 884.3 L821 849.4 L822.5 820.8 L824 798.8 L825.5 783.6 L827 775.6 L827.7 774.7 L828.5 774.7 L830 774.8 L831.5 774.8 L833 774.8 L834.5 774.6 L836 774.6 L837.5 774.6 L839 774.5 L840.5 774.5 L842 774.2 L843.5 773.9 L845 773.9 L846.5 774 L848 774.1 L849.5 774.2 L851 774.5 L852.5 774.6 L854 774.6 L855.5 774.7 L857 774.8 L858.5 775.4 L860 775.7 L861.5 775.4 L863 774.8 L864.5 774.6 L866 774.6 L867.5 774.6 L869 774.7 L870.5 774.8 L872 774.9 L873.5 775.1 L875 775.6 L876.5 775.8 L878 775.8 L879.5 775.8 L881 775.4 L882.5 774.1 L884 773.4 L885.5 773.7 L887 774.3 L888.5 774.5 L890 774.5 L891.5 774.5 L893 774.5 L894.5 774.6 L896 774.7 L897.5 774.7 L899 774.7 L900.5 774.7 L902 774.7 L903.5 774.7 L903.9 774.7 L905 799.7 L906.5 829 L908 852.3 L909.5 869.6 L911 880.4 L912.5 884.4 L914 884.3 L915.5 884.3 L917 884.3 L918.5 884.3 L920 884.3 L921.5 884.6 L923 885.2 L924.5 885.4 L926 885 L927.5 884.5 L929 884.4 L930.5 883.9 L932 883.7 L933.5 884.1 L935 885 L936.5 885.2 L938 885.4 L939.5 885.5 L941 885.5 L942.5 885.4 L944 885.4 L945.5 885 L947 884.5 L948.5 884.3 L950 884.4 L951.5 884.4 L953 884.4 L954.5 884.3 L956 884.3 L957.5 884.4 L959 884.5 L960.5 884.6 L962 884.8 L963.5 885 L965 884.8 L966.5 884 L968 883.5 L969.5 883.9 L971 884.6 L972.5 884.8 L974 884.7 L975.5 884.6 L977 884.5 L978.5 884.5 L980 884.4 L981.5 884.4 L983 884.3 L984.5 884.3 L986 884.4 L987.5 884.4 L988.8 884.5 L989 879.4 L990.5 845.2 L992 817.5 L993.5 796.4 L995 782.1 L996.5 775.1 L997 774.6 L998 773.7 L999.5 773.7 L1001 773.9 L1002.5 774.4 L1004 774.7 L1005.5 774.7 L1007 774.6 L1008.5 774.6 L1010 774.6 L1011.5 774.6 L1013 774.6 L1014.5 774.7 L1016 774.7 L1017.5 774.3 L1019 773.7 L1020.5 773.5 L1022 773.7 L1023.5 773.9 L1025 774 L1026.5 774.3 L1028 774.5 L1029.5 774.5 L1031 774.5 L1032.5 774.5 L1034 774.5 L1035.5 774.5 L1037 774.5 L1038.5 774.3 L1040 774.2 L1041.5 774.3 L1043 774.5 L1044.5 774.5 L1046 774.6 L1047.5 774.7 L1049 774.7 L1050.5 774.6 L1052 774.6 L1053.5 774.6 L1055 774.6 L1056.5 774.6 L1058 774.1 L1059.5 773.6 L1061 773.6 L1062.5 774 L1064 774.2 L1065.5 774.4 L1067 774.9 L1068.5 774.9 L1070 774.5 L1071.5 774.2 L1073 774.2 L1073.2 774.6 L1074.5 804 L1076 832.5 L1077.5 855 L1079 871.4 L1080.5 881.4 L1081.8 884.4 L1082 883.7 L1083.5 883.9 L1085 884 L1086.5 884.3 L1088 884.5 L1089.5 884.2 L1091 883.7 L1092.5 883.6 L1094 883.5 L1095.5 883.5 L1097 883.6 L1098.5 884.1 L1100 884.4 L1101.5 884.5 L1103 884.7 L1104.5 884.7 L1106 884.6 L1107.5 884.4 L1109 884.3 L1110.5 883.7 L1112 883.4 L1113.5 883.7 L1115 884.3 L1116.5 884.5 L1118 884.4 L1119.5 884.3 L1121 884.3 L1122.5 884.4 L1124 884.4 L1125.5 884.3 L1127 884.3 L1128.5 884.3 L1130 884.3 L1131.5 884.3 L1133 884.2 L1134.5 884.2 L1136 884.1 L1137.5 883.9 L1139 883.5 L1140.5 883.4 L1142 884 L1143.5 884.5 L1145 884.4 L1146.5 884 L1148 883.8 L1149.5 884 L1151 884.2 L1152.5 884.3 L1154 884.6 L1155.5 884.8 L1157 884.7 L1158.1 884.2 L1158.5 874.4 L1160 841.1 L1161.5 814.3 L1163 794.1 L1164.5 780.8 L1166 774.8 L1166.3 774.6 L1167.5 774.7 L1169 774.7 L1170.5 774.6 L1172 774.6 L1173.5 774.4 L1175 773.9 L1176.5 773.9 L1178 774.2 L1179.5 774.6 L1181 774.6 L1182.5 774.6 L1184 774.5 L1185.5 774.6 L1187 774.7 L1188.5 774.7 L1190 774.2 L1191.5 773.7 L1193 773.7 L1194.5 773.7 L1196 773.7 L1197.5 774 L1199 774.5 L1200.5 774.7 L1202 774.7 L1203.5 774.7 L1205 774.8 L1206.5 775 L1208 775.1 L1209.5 774.9 L1211 774.6 L1212.5 774.4 L1214 774 L1215.5 773.5 L1217 773.7 L1218.5 774.3 L1220 774.7 L1221.5 774.8 L1223 775 L1224.5 775.1 L1226 775.1 L1227.5 775.1 L1229 775.2 L1230.5 775.6 L1232 775.8 L1233.5 775 L1235 773.7 L1236.5 773.4 L1238 774.3 L1239.5 775.1 L1241 775.1 L1242.5 774.8 L1244 808.1 L1245.5 835.8 L1247 857.5 L1248.5 873.1 L1250 882.2 L1251.1 884.4 L1251.5 884.3 L1253 884.4 L1254.5 884.7 L1256 884.8 L1257.5 884.3 L1259 883.5 L1260.5 883.3 L1262 884.3 L1263.5 885.3 L1265 885.2 L1266.5 884.7 L1268 884.3 L1269.5 884.4 L1271 884.5 L1272.5 884.5 L1274 884.5 L1275.5 884.4 L1277 884.4 L1278.5 884.4 L1280 884.4 L1281.5 884.4 L1283 884.4 L1284.5 884.4 L1286 884.4 L1287.5 884.4 L1289 884.4 L1290.5 884.1 L1292 884 L1293.5 884.1 L1295 884.4 L1296.5 884.4 L1298 884.4 L1299.5 884.3 L1301 884.3 L1302.5 884.4 L1304 884.4 L1305.5 884.4 L1307 884.4 L1308.5 884.4 L1310 884.3 L1311.5 884.3 L1313 884.3 L1314.5 884.3 L1316 884.3 L1317.5 884.4 L1319 884.4 L1320.5 884.5 L1322 884.4 L1323.5 884.4 L1325 884.6 L1326.5 885.1 L1327.4 885.4 L1328 869.6 L1329.5 837.2 L1331 811.2 L1332.5 791.9 L1334 779.5 L1335.5 774.6 L1335.6 774.6 L1337 774.4 L1338.5 774.6 L1340 774.7 L1341.5 774.8 L1343 775.1 L1344.5 775.2 L1346 774.8 L1347.5 774.5 L1349 774.4 L1350.5 774.2 L1352 774.1 L1353.5 774.5 L1355 775.1 L1356.5 775.2 L1358 774.9 L1359.5 774.5 L1361 774.6 L1362.5 775.1 L1364 775.3 L1365.5 775.1 L1367 774.7 L1368.5 774.7 L1370 774.7 L1371.5 774.7 L1373 774.5 L1374.5 773.9 L1376 773.5 L1377.5 773.5 L1379 773.4 L1380.5 773.5 L1382 774 L1383.5 774.6 L1385 774.6 L1386.5 774.7 L1388 774.7 L1389.5 774.7 L1391 774.6 L1392.5 774.5 L1394 774.1 L1395.5 773.7 L1397 773.8 L1398.5 774.3 L1400 774.7 L1401.5 774.5 L1403 774.3 L1404.5 774.3 L1406 774.4 L1407.5 774.6 L1409 774.6 L1410.5 774.7 L1411.8 774.7 L1412 779.4 L1413.5 812.1 L1415 839 L1416.5 860 L1418 874.7 L1419.5 882.9 L1420.4 884.4 L1421 884.4 L1422.5 885.2 L1424 885.6 L1425.5 885 L1427 883.8 L1428.5 883.6 L1430 884.5 L1431.5 885.4 L1433 885.3 L1434.5 884.7 L1436 884.3 L1437.5 884.4 L1439 884.5 L1440.5 884.5 L1442 884.1 L1443.5 883.7 L1445 883.7 L1446.5 884.1 L1448 884.4 L1449.5 884.7 L1451 885.3 L1452.5 885.4 L1454 884.8 L1455.5 884.2 L1457 884.2 L1458.5 884.3 L1460 884.3 L1461.5 884.3 L1463 884.2 L1464.5 884.1 L1466 883.7 L1467.5 883.2 L1469 883.5 L1470.5 884.5 L1472 885.1 L1473.5 885 L1475 884.9 L1476.5 884.8 L1478 884.6 L1479.5 884.3 L1481 884.4 L1482.5 884.7 L1484 884.8 L1485.5 884.7 L1487 884.4 L1488.5 884.4 L1490 884.8 L1491.5 885.3 L1493 885.1 L1494.5 884.6 L1496 884.3 L1496.7 884.3 L1497.5 864.9 L1499 833.3 L1500.5 808.2 L1502 789.8 L1503.5 778.4 L1504.9 774.6 L1505 773.7 L1506.5 774.5 L1508 775 L1509.5 774.9 L1511 774.7 L1512.5 774.6 L1514 774.2 L1515.5 773.9 L1517 774 L1518.5 774.2 L1520 774.4 L1521.5 774.8 L1523 775.4 L1524.5 775.6 L1526 775.7 L1527.5 775.8 L1529 775.8 L1530.5 775.6 L1532 775.5 L1533.5 775.3 L1535 774.9 L1536.5 774.8 L1538 774.1 L1539.5 773.5 L1541 773.6 L1542.5 774.3 L1544 774.7 L1545.5 774.9 L1547 775.2 L1548.5 775.3 L1550 775.6 L1551.5 775.8 L1553 775.6 L1554.5 774.8 L1556 774.3 L1557.5 774.5 L1559 774.8 L1560.5 774.9 L1562 774.8 L1563.5 774.7 L1565 774.7 L1566.5 774.6 L1568 774.6 L1569.5 774.5 L1571 774.5 L1572.5 774.5 L1574 774.9 L1575.5 775.2 L1577 775.3 L1578.5 775.6 L1580 775.8 L1581.1 775.6 L1581.5 784.1 L1583 816.1 L1584.5 842.2 L1586 862.3 L1587.5 876.2 L1589 883.5 L1589.7 884.4 L1590.5 883.3 L1592 883.4 L1593.5 883.6 L1595 884.1 L1596.5 884.2 L1598 884.3 L1599.5 884.3 L1601 884.3 L1602.5 884.4 L1604 884.4 L1605.5 884.4 L1607 884.3 L1608.5 884.3 L1610 884.3 L1611.5 884.4 L1613 884.5 L1614.5 885 L1616 885.3 L1617.5 885.3 L1619 885.3 L1620.5 885.3 L1622 884.7 L1623.5 884 L1625 884.1 L1626.5 884.3 L1628 884.4 L1629.5 884.1 L1631 883.5 L1632.5 883.4 L1634 883.9 L1635.5 884.3 L1637 884.4 L1638.5 884.7 L1640 884.8 L1641.5 884.7 L1643 884.4 L1644.5 884.4 L1646 884.8 L1647.5 885.2 L1649 885.1 L1650.5 884.5 L1652 884.2 L1653.5 884.2 L1655 884.3 L1656.5 884.3 L1658 884 L1659.5 883.6 L1661 883.7 L1662.5 884.2 L1664 884.4 L1665.5 884.4 L1666 884.3 L1667 860.4 L1668.5 829.6 L1670 805.4 L1671.5 787.9 L1673 777.4 L1674.2 774.6 L1674.5 775.4 L1676 775.4 L1677.5 775.4 L1679 775.2 L1680.5 775.1 L1682 774.5 L1683.5 773.9 L1685 774 L1686.5 774.4 L1688 774.7 L1689.5 774.6 L1691 774.6 L1692.5 774.6 L1694 774.2 L1695.5 773.9 L1697 774 L1698.5 774.6 L1700 775 L1701.5 774.8 L1703 774.6 L1704.5 774.5 L1706 774.5 L1707.5 774.5 L1709 774.5 L1710 774.5" stroke="#8a00ff"/>
<path d="M20 871.1 L21.5 871.2 L23 871.4 L24.5 871.5 L26 871.1 L27.5 870.8 L29 870.8 L30.5 871.1 L32 871.2 L33.5 871.2 L35 871.3 L36.5 871.3 L38 871.2 L39.5 871.1 L41 871.2 L42.5 871.7 L44 872 L45.5 871.8 L47 871.4 L48.5 871.3 L50 871.2 L51.5 871.1 L53 871.1 L54.5 871.2 L56 871.3 L57.4 871.2 L57.5 873.6 L59 907 L60.5 934.5 L62 956 L63.5 971.2 L65 979.9 L66 981.8 L66.5 981.9 L68 981.9 L69.5 981.9 L71 981.8 L72.5 981.7 L74 981.7 L75.5 981.7 L77 981.7 L78.5 981.8 L80 981.8 L81.5 982.1 L83 982.6 L84.5 982.8 L86 982.7 L87.5 982.6 L89 982.5 L90.5 982.1 L92 981.8 L93.5 981.8 L95 981.7 L96.5 981.7 L98 981.7 L99.5 981.8 L101 981.7 L102.5 981.5 L104 981.4 L105.5 981.2 L107 980.8 L108.5 980.8 L110 981.2 L111.5 981.6 L113 981.6 L114.5 981.4 L116 981.3 L117.5 981.8 L119 982.6 L120.5 982.8 L122 982.4 L123.5 981.9 L125 981.9 L126.5 981.8 L128 981.8 L129.5 981.8 L131 981.7 L132.5 981.7 L134 981.8 L135.5 981.9 L137 981.9 L138.5 981.8 L140 981.7 L141.5 982.1 L142.3 981.8 L143 964.6 L144.5 932.3 L146 906.6 L147.5 887.6 L149 875.6 L150.5 871.1 L152 871.1 L153.5 871.1 L155 871.2 L156.5 871.2 L158 871.2 L159.5 871.2 L161 871.4 L162.5 872 L164 872.3 L165.5 872.2 L167 871.9 L168.5 871.8 L170 871.5 L171.5 871.2 L173 871.1 L174.5 871.2 L176 871.2 L177.5 871 L179 870.6 L180.5 870.5 L182 870.8 L183.5 871.1 L185 871.2 L186.5 871.2 L188 871.2 L189.5 871.4 L191 871.7 L192.5 871.8 L194 871.6 L195.5 871.3 L197 871.2 L198.5 870.7 L200 870.5 L201.5 870.9 L203 871.6 L204.5 871.8 L206 871.5 L207.5 871.2 L209 871.2 L210.5 871.1 L212 871.1 L213.5 871.1 L215 871.2 L216.5 871.2 L218 871.2 L219.5 871.3 L221 871.4 L222.5 871.6 L224 871.8 L225.5 871.8 L226.7 871.9 L227 878.4 L228.5 911 L230 937.7 L231.5 958.4 L233 972.8 L234.5 980.6 L235.3 981.8 L236 981.8 L237.5 981.9 L239 982 L240.5 982 L242 981.8 L243.5 981.7 L245 981.8 L246.5 982.3 L248 982.5 L249.5 982.6 L251 982.6 L252.5 982.6 L254 982.2 L255.5 981.9 L257 981.8 L258.5 981.7 L260 981.7 L261.5 981.7 L263 981.7 L264.5 981.7 L266 981.8 L267.5 981.9 L269 981.9 L270.5 981.9 L272 981.9 L273.5 982 L275 982.2 L276.5 982.2 L278 982 L279.5 981.7 L281 981.7 L282.5 981.6 L284 981.6 L285.5 981.6 L287 981.7 L288.5 981.7 L290 982.2 L291.5 982.7 L293 982.5 L294.5 981.5 L296 980.9 L297.5 981.3 L299 981.8 L300.5 982 L302 981.9 L303.5 981.7 L305 981.7 L306.5 981.8 L308 981.8 L309.5 981.8 L311 981.9 L311.6 981.8 L312.5 959.9 L314 928.5 L315.5 903.6 L317 885.6 L318.5 874.5 L319.8 870.1 L320 870 L321.5 870.4 L323 871 L324.5 871.2 L326 871.2 L327.5 871.1 L329 871.1 L330.5 871.1 L332 871.1 L333.5 871.1 L335 871.1 L336.5 871.1 L338 871.2 L339.5 871.2 L341 871.2 L342.5 871.2 L344 871.1 L345.5 871.3 L347 871.5 L348.5 871.5 L350 871.3 L351.5 871.1 L353 871.1 L354.5 871.2 L356 871.3 L357.5 871.5 L359 871.9 L360.5 872 L362 871.6 L363.5 871.1 L365 870.9 L366.5 870.4 L368 870.2 L369.5 870.2 L371 870.2 L372.5 870.2 L374 870.4 L375.5 870.6 L377 870.7 L378.5 870.9 L380 871.1 L381.5 871.4 L383 871.8 L384.5 871.9 L386 871.5 L387.5 871.1 L389 870.9 L390.5 870.3 L392 870 L393.5 870 L395 870.2 L396 871.2 L396.5 883.1 L398 914.9 L399.5 940.8 L401 960.7 L402.5 974.2 L404 981.1 L404.6 981.8 L405.5 981.9 L407 982.3 L408.5 982.5 L410 982.7 L411.5 982.9 L413 982.7 L414.5 981.8 L416 981.3 L417.5 981.8 L419 982.7 L420.5 982.9 L422 982.4 L423.5 981.8 L425 981.9 L426.5 982.3 L428 982.5 L429.5 982.3 L431 981.9 L432.5 981.8 L434 981.7 L435.5 981.6 L437 981.6 L438.5 981.7 L440 981.8 L441.5 981.8 L443 981.8 L444.5 981.8 L446 981.9 L447.5 982 L449 982 L450.5 982 L452 981.9 L453.5 981.9 L455 981.7 L456.5 981.7 L458 982.2 L459.5 982.7 L461 982.6 L462.5 982 L464 981.7 L465.5 981.7 L467 981.8 L468.5 981.8 L470 981.8 L471.5 981.8 L473 981.7 L474.5 981.5 L476 981.3 L477.5 981.5 L479 981.8 L480.5 981.9 L480.9 981.9 L482 955.3 L483.5 924.8 L485 900.8 L486.5 883.7 L488 873.6 L489.1 871.2 L489.5 871.2 L491 871.1 L492.5 871.1 L494 871.2 L495.5 871.4 L497 871.3 L498.5 870.6 L500 870.3 L501.5 870.5 L503 871 L504.5 871.1 L506 871.1 L507.5 871.1 L509 871.2 L510.5 871.2 L512 871.3 L513.5 871.4 L515 871.7 L516.5 871.8 L518 872 L519.5 872.3 L521 872.2 L522.5 871.9 L524 871.8 L525.5 871.3 L527 870.6 L528.5 870.4 L530 870.8 L531.5 871.2 L533 871.1 L534.5 870.5 L536 870.3 L537.5 870.5 L539 871 L540.5 871.1 L542 871.2 L543.5 871.2 L545 871.1 L546.5 870.7 L548 870.5 L549.5 870.7 L551 871.1 L552.5 871.2 L554 871.2 L555.5 871.3 L557 871.4 L558.5 871.7 L560 871.8 L561.5 871.3 L563 870.5 L564.5 870.3 L565.3 870.4 L566 887.7 L567.5 918.7 L569 943.8 L570.5 962.8 L572 975.5 L573.5 981.5 L573.9 981.8 L575 982.3 L576.5 982.4 L578 981.7 L579.5 981 L581 981.1 L582.5 981.5 L584 981.8 L585.5 981.8 L587 981.9 L588.5 981.9 L590 981.9 L591.5 982 L593 981.8 L594.5 981 L596 980.6 L597.5 981.3 L599 982.5 L600.5 982.8 L602 982.4 L603.5 982 L605 982 L606.5 981.8 L608 981.7 L609.5 981.7 L611 981.7 L612.5 981.7 L614 982 L615.5 982.3 L617 982.2 L618.5 981.8 L620 981.5 L621.5 981.6 L623 981.7 L624.5 981.7 L626 981.3 L627.5 981 L629 980.9 L630.5 980.8 L632 980.8 L633.5 980.8 L635 981 L636.5 981.1 L638 981.4 L639.5 981.7 L641 981.7 L642.5 981.7 L644 981.8 L645.5 981.6 L647 981.2 L648.5 981.2 L650 981.4 L650.2 981.8 L651.5 950.9 L653 921.2 L654.5 898.1 L656 881.9 L657.5 872.9 L658.4 871.2 L659 871.2 L660.5 871.2 L662 871.2 L663.5 871.3 L665 871.1 L666.5 870.5 L668 870.1 L669.5 870.5 L671 871.1 L672.5 871.2 L674 871.2 L675.5 871.1 L677 871 L678.5 870.6 L680 870.4 L681.5 870.5 L683 870.6 L684.5 870.7 L686 870.9 L687.5 871.1 L689 871.2 L690.5 871.4 L692 871.6 L693.5 871.7 L695 871.9 L696.5 871.9 L698 871.2 L699.5 870.6 L701 870.6 L702.5 871 L704 871.2 L705.5 871.2 L707 871.3 L708.5 871.3 L710 871.1 L711.5 871 L713 871 L714.5 871.1 L716 871.1 L717.5 871.2 L719 871.3 L720.5 871.3 L722 871.3 L723.5 871.3 L725 871.4 L726.5 871.8 L728 872 L729.5 871.7 L731 871.2 L732.5 871.1 L734 871.2 L734.6 871.2 L735.5 892.2 L737 922.4 L738.5 946.7 L740 964.9 L741.5 976.7 L743 981.7 L743.2 982.6 L744.5 982.7 L746 982 L747.5 981.3 L749 981.3 L750.5 981.6 L752 981.7 L753.5 981.9 L755 982.2 L756.5 982.3 L758 982.3 L759.5 982.2 L761 982.1 L762.5 981.9 L764 981.7 L765.5 981.8 L767 981.8 L768.5 981.8 L770 981.4 L771.5 981.1 L773 981.1 L774.5 981.5 L776 981.8 L777.5 981.7 L779 981.5 L780.5 981.5 L782 981.7 L783.5 981.9 L785 981.9 L786.5 981.8 L788 981.8 L789.5 981.8 L791 981.8 L792.5 981.8 L794 982.4 L795.5 982.9 L797 982.8 L798.5 982.2 L800 981.9 L801.5 981.9 L803 981.8 L804.5 981.8 L806 981.8 L807.5 981.7 L809 981.7 L810.5 981.8 L812 981.9 L813.5 981.9 L815 981.9 L816.5 981.9 L818 981.8 L819.5 981.7 L821 946.5 L822.5 917.7 L824 895.6 L825.5 880.3 L827 872.2 L827.7 870.9 L828.5 870.9 L830 871.1 L831.5 871.3 L833 871.3 L834.5 871.3 L836 871.3 L837.5 871 L839 870.5 L840.5 870.4 L842 870.7 L843.5 871.1 L845 871 L846.5 870.5 L848 870.2 L849.5 870.7 L851 871.5 L852.5 871.8 L854 871.9 L855.5 872.1 L857 872.1 L858.5 872.1 L860 872.1 L861.5 871.6 L863 870.8 L864.5 870.6 L866 870.3 L867.5 870 L869 870.1 L870.5 870.6 L872 870.9 L873.5 871.3 L875 871.9 L876.5 872 L878 871 L879.5 870 L881 870.1 L882.5 870.8 L884 871.1 L885.5 870.8 L887 870.2 L888.5 870.1 L890 870.9 L891.5 871.7 L893 871.6 L894.5 871.4 L896 871.2 L897.5 871 L899 870.7 L900.5 870.7 L902 870.9 L903.5 871.1 L903.9 871.2 L905 896.5 L906.5 926 L908 949.5 L909.5 966.8 L911 977.8 L912.5 981.8 L914 982.5 L915.5 982.3 L917 982.3 L918.5 982 L920 981.9 L921.5 981.9 L923 981.9 L924.5 981.9 L926 981.9 L927.5 981.9 L929 981.8 L930.5 981.7 L932 981.5 L933.5 981.8 L935 982.2 L936.5 982.3 L938 982.1 L939.5 981.9 L941 981.9 L942.5 981.8 L944 981.8 L945.5 981.8 L947 981.9 L948.5 981.9 L950 981.8 L951.5 981.8 L953 981.7 L954.5 981.8 L956 981.8 L957.5 981.6 L959 981.4 L960.5 981.4 L962 981.7 L963.5 981.9 L965 981.9 L966.5 981.9 L968 981.8 L969.5 981.9 L971 981.9 L972.5 981.9 L974 981.8 L975.5 981.7 L977 981.7 L978.5 981.7 L980 981.7 L981.5 981.9 L983 982 L984.5 982.1 L986 981.9 L987.5 981.7 L988.8 981.7 L989 976.7 L990.5 942.3 L992 914.4 L993.5 893.1 L995 878.8 L996.5 871.7 L997 871.2 L998 870.5 L999.5 870.8 L1001 870.9 L1002.5 871.2 L1004 871.3 L1005.5 871.5 L1007 871.8 L1008.5 871.9 L1010 871.5 L1011.5 871.1 L1013 871.1 L1014.5 871.1 L1016 871.1 L1017.5 871.1 L1019 871.1 L1020.5 871.1 L1022 871.1 L1023.5 871.1 L1025 871.3 L1026.5 872 L1028 872.3 L1029.5 872.3 L1031 872.1 L1032.5 872 L1034 871.7 L1035.5 871.3 L1037 871.2 L1038.5 870.9 L1040 870.7 L1041.5 870.8 L1043 870.9 L1044.5 870.9 L1046 871.1 L1047.5 871.2 L1049 871.2 L1050.5 871.4 L1052 871.5 L1053.5 871.4 L1055 871.2 L1056.5 871.1 L1058 870.5 L1059.5 870 L1061 870 L1062.5 870.1 L1064 870.1 L1065.5 870.7 L1067 871.8 L1068.5 872 L1070 871.7 L1071.5 871.4 L1073 871.3 L1073.2 871.2 L1074.5 900.8 L1076 929.5 L1077.5 952.2 L1079 968.7 L1080.5 978.7 L1081.8 981.8 L1082 981.4 L1083.5 981.2 L1085 981.3 L1086.5 981.5 L1088 981.7 L1089.5 981.7 L1091 981.7 L1092.5 981.8 L1094 981.7 L1095.5 981.6 L1097 981.7 L1098.5 982.1 L1100 982.4 L1101.5 982.2 L1103 981.9 L1104.5 981.8 L1106 981.9 L1107.5 982 L1109 982 L1110.5 982 L1112 981.9 L1113.5 981.9 L1115 981.7 L1116.5 981.7 L1118 981.8 L1119.5 981.8 L1121 982 L1122.5 982.5 L1124 982.9 L1125.5 982.6 L1127 982.1 L1128.5 981.9 L1130 982 L1131.5 982 L1133 981.9 L1134.5 981.5 L1136 981.3 L1137.5 981.5 L1139 981.8 L1140.5 981.8 L1142 981.9 L1143.5 981.9 L1145 981.9 L1146.5 981.8 L1148 981.8 L1149.5 981.8 L1151 981.8 L1152.5 981.8 L1154 981.7 L1155.5 981.7 L1157 981.7 L1158.1 981.8 L1158.5 971.8 L1160 938.2 L1161.5 911.2 L1163 890.8 L1164.5 877.4 L1166 871.4 L1166.3 871.2 L1167.5 871.2 L1169 871.2 L1170.5 871.2 L1172 871.2 L1173.5 871.2 L1175 871.3 L1176.5 871.3 L1178 871 L1179.5 870.8 L1181 870.8 L1182.5 871 L1184 871.1 L1185.5 871.1 L1187 871.1 L1188.5 871.1 L1190 871.2 L1191.5 871.3 L1193 871.2 L1194.5 871 L1196 870.9 L1197.5 871.2 L1199 871.6 L1200.5 871.7 L1202 871.5 L1203.5 871.2 L1205 871.3 L1206.5 871.4 L1208 871.4 L1209.5 871.4 L1211 871.3 L1212.5 871.3 L1214 871.2 L1215.5 871.1 L1217 871.1 L1218.5 871.2 L1220 871.2 L1221.5 871.4 L1223 871.8 L1224.5 871.9 L1226 871.7 L1227.5 871.4 L1229 871.3 L1230.5 871.3 L1232 871.3 L1233.5 871.1 L1235 870.7 L1236.5 870.7 L1238 871.5 L1239.5 872.2 L1241 872.3 L1242.5 872.1 L1244 905 L1245.5 932.8 L1247 954.7 L1248.5 970.4 L1250 979.6 L1251.1 981.8 L1251.5 981.7 L1253 981.6 L1254.5 981.2 L1256 980.9 L1257.5 981.1 L1259 981.3 L1260.5 981.3 L1262 981.6 L1263.5 981.8 L1265 981.9 L1266.5 982.3 L1268 982.6 L1269.5 982.3 L1271 981.8 L1272.5 981.7 L1274 981.8 L1275.5 981.9 L1277 982 L1278.5 982.6 L1280 982.9 L1281.5 982.5 L1283 981.9 L1284.5 981.8 L1286 982.2 L1287.5 982.7 L1289 982.6 L1290.5 982 L1292 981.7 L1293.5 981.7 L1295 981.9 L1296.5 981.9 L1298 981.9 L1299.5 981.9 L1301 981.9 L1302.5 981.8 L1304 981.7 L1305.5 981.8 L1307 981.9 L1308.5 981.9 L1310 982.1 L1311.5 982.2 L1313 982.2 L1314.5 982 L1316 981.9 L1317.5 981.9 L1319 981.8 L1320.5 981.7 L1322 981.8 L1323.5 981.9 L1325 982 L1326.5 982.5 L1327.4 982.7 L1328 966.9 L1329.5 934.2 L1331 908.1 L1332.5 888.6 L1334 876.2 L1335.5 871.2 L1335.6 871.2 L1337 871.3 L1338.5 871.7 L1340 871.9 L1341.5 871.7 L1343 871.3 L1344.5 871.1 L1346 870.9 L1347.5 870.7 L1349 870.7 L1350.5 871 L1352 871.2 L1353.5 871.2 L1355 871.1 L1356.5 871.1 L1358 871 L1359.5 870.8 L1361 870.9 L1362.5 871 L1364 871.1 L1365.5 871.3 L1367 871.7 L1368.5 871.8 L1370 871.7 L1371.5 871.6 L1373 871.5 L1374.5 870.9 L1376 870.6 L1377.5 870.8 L1379 871.2 L1380.5 871.3 L1382 871.2 L1383.5 871.1 L1385 871 L1386.5 870.9 L1388 870.8 L1389.5 871.1 L1391 871.8 L1392.5 871.9 L1394 871.6 L1395.5 871.3 L1397 871.3 L1398.5 871.3 L1400 871.3 L1401.5 871.2 L1403 871 L1404.5 870.9 L1406 870.8 L1407.5 870.7 L1409 870.7 L1410.5 871 L1411.8 871.1 L1412 876 L1413.5 909 L1415 936.1 L1416.5 957.2 L1418 972 L1419.5 980.3 L1420.4 981.8 L1421 981.8 L1422.5 981.6 L1424 981.5 L1425.5 981.6 L1427 981.9 L1428.5 981.9 L1430 981.9 L1431.5 982 L1433 981.9 L1434.5 981.8 L1436 981.7 L1437.5 981.4 L1439 980.9 L1440.5 980.8 L1442 981.3 L1443.5 981.8 L1445 981.8 L1446.5 981.7 L1448 981.6 L1449.5 981.7 L1451 981.8 L1452.5 981.8 L1454 982.2 L1455.5 982.6 L1457 982.5 L1458.5 982 L1460 981.8 L1461.5 981.9 L1463 982.1 L1464.5 982.1 L1466 982 L1467.5 981.9 L1469 981.9 L1470.5 981.8 L1472 981.7 L1473.5 981.7 L1475 981.7 L1476.5 981.7 L1478 981.7 L1479.5 981.7 L1481 981.7 L1482.5 981.9 L1484 981.9 L1485.5 981.9 L1487 981.8 L1488.5 981.8 L1490 981.7 L1491.5 981.7 L1493 981.7 L1494.5 981.8 L1496 981.8 L1496.7 981.8 L1497.5 962.2 L1499 930.4 L1500.5 905.1 L1502 886.5 L1503.5 875 L1504.9 871.2 L1505 871.1 L1506.5 871.2 L1508 871.3 L1509.5 871.5 L1511 871.9 L1512.5 872 L1514 871.9 L1515.5 871.8 L1517 871.7 L1518.5 871.2 L1520 871 L1521.5 871.3 L1523 871.8 L1524.5 871.9 L1526 871.5 L1527.5 871.1 L1529 871.1 L1530.5 871.1 L1532 871.1 L1533.5 871.1 L1535 871 L1536.5 871 L1538 871.2 L1539.5 871.3 L1541 871.3 L1542.5 871.3 L1544 871.2 L1545.5 870.9 L1547 870.4 L1548.5 870.3 L1550 870.7 L1551.5 871.2 L1553 871.2 L1554.5 871.2 L1556 871.2 L1557.5 871.2 L1559 871.2 L1560.5 871.2 L1562 871.1 L1563.5 871 L1565 871.2 L1566.5 871.9 L1568 872.3 L1569.5 872 L1571 871.4 L1572.5 871.2 L1574 870.9 L1575.5 870.6 L1577 870.7 L1578.5 871 L1580 871.2 L1581.1 871.4 L1581.5 880.8 L1583 913 L1584.5 939.3 L1586 959.5 L1587.5 973.5 L1589 980.9 L1589.7 981.8 L1590.5 981.2 L1592 980.9 L1593.5 981.4 L1595 982.3 L1596.5 982.5 L1598 982.1 L1599.5 981.8 L1601 981.7 L1602.5 981.8 L1604 981.8 L1605.5 981.8 L1607 981.8 L1608.5 981.8 L1610 981.3 L1611.5 980.8 L1613 980.9 L1614.5 981.5 L1616 981.9 L1617.5 982.2 L1619 982.7 L1620.5 982.8 L1622 982.3 L1623.5 981.8 L1625 981.8 L1626.5 981.9 L1628 981.9 L1629.5 981.9 L1631 981.7 L1632.5 981.7 L1634 981.7 L1635.5 981.8 L1637 981.9 L1638.5 982.2 L1640 982.4 L1641.5 982.2 L1643 981.8 L1644.5 981.7 L1646 981.4 L1647.5 981.2 L1649 981.1 L1650.5 981 L1652 981 L1653.5 981.2 L1655 981.7 L1656.5 981.8 L1658 981.8 L1659.5 981.8 L1661 981.8 L1662.5 981.8 L1664 981.8 L1665.5 981.8 L1666 981.8 L1667 957.6 L1668.5 926.6 L1670 902.2 L1671.5 884.6 L1673 874.1 L1674.2 871.2 L1674.5 871.2 L1676 871.3 L1677.5 871.2 L1679 871.2 L1680.5 871.2 L1682 871 L1683.5 870.8 L1685 871 L1686.5 871.7 L1688 872.1 L1689.5 871.8 L1691 871.2 L1692.5 871.1 L1694 871.2 L1695.5 871.3 L1697 871.3 L1698.5 871.2 L1700 871.1 L1701.5 871.3 L1703 871.6 L1704.5 871.7 L1706 871.7 L1707.5 871.8 L1709 871.8 L1710 871.8" stroke="#f47fc0"/>
</g>
<rect x="20" y="77.7" width="1689.9" height="916.1" fill="none" stroke="#ebebeb" stroke-width="2.4"/>
<path d="M1.5 129 H13.5 L18 135 L13.5 141 H1.5 Z" fill="#ffff00"/><text x="7.5" y="138.4" font-family="Liberation Sans, sans-serif" font-size="9.5" text-anchor="middle" fill="#a03000">1</text>
<path d="M1.5 240.5 H13.5 L18 246.5 L13.5 252.5 H1.5 Z" fill="#00f0f0"/><text x="7.5" y="249.9" font-family="Liberation Sans, sans-serif" font-size="9.5" text-anchor="middle" fill="#004060">2</text>
<path d="M1.5 478.5 H13.5 L18 484.5 L13.5 490.5 H1.5 Z" fill="#ff00ff"/><text x="7.5" y="487.9" font-family="Liberation Sans, sans-serif" font-size="9.5" text-anchor="middle" fill="#600080">3</text>
<path d="M1.5 364.5 H13.5 L18 370.5 L13.5 376.5 H1.5 Z" fill="#00ff00"/><text x="7.5" y="373.9" font-family="Liberation Sans, sans-serif" font-size="9.5" text-anchor="middle" fill="#005000">4</text>
<path d="M1.5 589 H13.5 L18 595 L13.5 601 H1.5 Z" fill="#0a9cff"/><text x="7.5" y="598.4" font-family="Liberation Sans, sans-serif" font-size="9.5" text-anchor="middle" fill="#002060">5</text>
<path d="M1.5 703.5 H13.5 L18 709.5 L13.5 715.5 H1.5 Z" fill="#ffe066"/><text x="7.5" y="712.9" font-family="Liberation Sans, sans-serif" font-size="9.5" text-anchor="middle" fill="#604000">6</text>
<path d="M1.5 876.5 H13.5 L18 882.5 L13.5 888.5 H1.5 Z" fill="#9020ff"/><text x="7.5" y="885.9" font-family="Liberation Sans, sans-serif" font-size="9.5" text-anchor="middle" fill="#200060">7</text>
<path d="M1.5 973.5 H13.5 L18 979.5 L13.5 985.5 H1.5 Z" fill="#ff99d0"/><text x="7.5" y="982.9" font-family="Liberation Sans, sans-serif" font-size="9.5" text-anchor="middle" fill="#702050">8</text>
<path d="M1712 135 L1716.5 129 H1728.5 V141 H1716.5 Z" fill="#ffff00"/>
<text x="1722.5" y="138.6" font-family="Liberation Sans, sans-serif" font-size="9.5" text-anchor="middle" fill="#806000">T</text>
<path d="M858.5 62 H870.5 V71 L864.5 77 L858.5 71 Z" fill="#ff9c00"/>
<text x="864.5" y="71.3" font-family="Liberation Sans, sans-serif" font-size="10" font-weight="bold" text-anchor="middle" fill="#201000">T</text>
</svg>

<div class="chbox" style="left:20px;color:#ffff00"><span class="chn" style="">CH1</span><i class="dc" style="border-color:#ffff00"><b style="background:#ffff00"></b></i><span class="chv">2.00V</span></div>
<div class="chbox" style="left:130px;color:#00e0f0"><span class="chn" style="">CH2</span><i class="dc" style="border-color:#00e0f0"><b style="background:#00e0f0"></b></i><span class="chv">2.00V</span></div>
<div class="chbox" style="left:240px;color:#ff00ff"><span class="chn" style="">CH3</span><i class="dc" style="border-color:#ff00ff"><b style="background:#ff00ff"></b></i><span class="chv">2.00V</span></div>
<div class="chbox" style="left:350px;color:#00ff00"><span class="chn" style="">CH4</span><i class="dc" style="border-color:#00ff00"><b style="background:#00ff00"></b></i><span class="chv">2.00V</span></div>
<div class="chbox" style="left:460px;color:#0a84ff"><span class="chn" style="">CH5</span><i class="dc" style="border-color:#0a84ff"><b style="background:#0a84ff"></b></i><span class="chv">2.00V</span></div>
<div class="chbox" style="left:570px;color:#ffc850"><span class="chn" style="">CH6</span><i class="dc" style="border-color:#ffc850"><b style="background:#ffc850"></b></i><span class="chv">2.00V</span></div>
<div class="chbox" style="left:680px;color:#8c14ff"><span class="chn" style="">CH7</span><i class="dc" style="border-color:#8c14ff"><b style="background:#8c14ff"></b></i><span class="chv">2.00V</span></div>
<div class="chbox" style="left:790px;color:#ff90c8"><span class="chn sel" style="background:#ff90c8;color:#803060">CH8</span><i class="dc" style="border-color:#ff90c8"><b style="background:#ff90c8"></b></i><span class="chv">2.00V</span></div>

<!-- right panel -->
<!-- Utility -->
<div class="grp" style="left:1738px;top:43px;width:176px;height:128px"></div>
<div class="glab" style="left:1746px;top:35px">Utility</div>
<div class="ibtn" style="left:1746px;top:56px"><i></i><svg width="50" height="46"><path d="M7.8 23.2L24 7V15.2H37L40 18.2V27.5L37 30.5H24V38.5Z" fill="#bad6ea"/></svg></div>
<div class="ibtn" style="left:1800px;top:56px"><i></i><svg width="50" height="46"><path d="M10 21.7H19L26.5 8.2V36.5L33.8 21.7H40" stroke="#00ff00" stroke-width="2.8" fill="none" stroke-linejoin="miter" stroke-miterlimit="2"/></svg></div>
<div class="ibtn" style="left:1855px;top:56px"><i></i><svg width="50" height="46"><path d="M26.4 32.4A9.65 9.65 0 1 0 18.1 19.5" stroke="#c2dcee" stroke-width="4.4" fill="none" stroke-linecap="butt"/><path d="M10.9 21.3L13.5 19.5L25.2 22.2L17.6 29.3Z" fill="#c2dcee"/></svg></div>
<div class="ibtn sel" style="left:1746px;top:109px"><i></i><svg width="50" height="46"><circle cx="13" cy="22.8" r="4.2" fill="#fff"/><circle cx="25" cy="22.8" r="4.2" fill="#fff"/><circle cx="37" cy="22.8" r="4.2" fill="#fff"/></svg></div>
<div class="ibtn" style="left:1800px;top:109px"><i></i><svg width="50" height="46" shape-rendering="crispEdges"><g fill="#c2dcf0">
<rect x="9" y="7.5" width="13" height="12"/><rect x="28" y="7.5" width="13" height="12"/><rect x="9" y="26" width="13" height="13"/>
<rect x="22" y="36" width="3" height="3"/>
<rect x="22" y="20" width="6" height="3.5"/><rect x="19.5" y="23.5" width="11" height="8.5"/><rect x="25" y="32" width="5" height="3"/><rect x="25" y="35" width="3" height="1.5"/>
<rect x="16" y="19.5" width="2.5" height="3"/><rect x="12.5" y="22.5" width="3" height="3.5"/><rect x="30" y="19.5" width="3" height="3"/>
<rect x="35.5" y="23" width="4" height="3"/><rect x="30.5" y="26" width="6.5" height="2.5"/><rect x="38" y="29" width="3" height="3.5"/><rect x="35" y="32.5" width="2.5" height="2.5"/><rect x="31" y="35.5" width="3" height="3.5"/><rect x="38" y="35.5" width="3" height="3.5"/>
</g><g fill="#4b4f5b"><rect x="12" y="11" width="7" height="5.5"/><rect x="31" y="11" width="7" height="5.5"/><rect x="12" y="29.5" width="7" height="6"/><rect x="22.2" y="26" width="3" height="3"/><rect x="22.2" y="32" width="3" height="3"/></g>
<g fill="#c2dcf0"><rect x="14" y="12.8" width="3" height="2"/><rect x="33" y="12.8" width="3" height="2"/><rect x="14" y="31.3" width="3" height="2.5"/></g></svg></div>
<div class="ibtn" style="left:1855px;top:109px"><i></i><svg width="50" height="46"><path d="M7 11H15.6L17.5 7.5H32.5L34.4 11H43V36.5L42 38H8L7 36.5Z" fill="#c2dcf0"/><circle cx="25" cy="23.8" r="8.6" fill="none" stroke="#4b4f5b" stroke-width="2.6"/></svg></div>

<!-- Acquisition mode -->
<div class="grp" style="left:1738px;top:194px;width:173px;height:96px"></div>
<div class="glab" style="left:1746px;top:186px">Acquisition mode</div>
<div class="radio on" style="left:1749.5px;top:206px"></div><div class="lab" style="left:1767px;top:205px">Auto</div>
<div class="radio" style="left:1749.5px;top:234px"></div><div class="lab" style="left:1767px;top:233px">Normal</div>
<div class="radio" style="left:1749.5px;top:262px"></div><div class="lab" style="left:1767px;top:261px">Single</div>
<div class="ibtn" style="left:1831px;top:218px;width:51px;height:46px"><i></i><svg width="51" height="46"><path d="M17 12L33.5 23L17 34Z" fill="#00ff00"/></svg></div>

<!-- Zoom Horizontally -->
<div class="grp" style="left:1738px;top:312px;width:173px;height:53px"></div>
<div class="glab" style="left:1746px;top:304px">Zoom Horizontally</div>
<div class="sbtn" style="left:1749px;top:328px;width:33px"><svg width="31" height="18"><path d="M18 4L13 9L18 14" stroke="#c4dcf2" stroke-width="1.1" fill="none"/></svg></div>
<div class="combo" style="left:1791px;top:328px;width:68px"><span class="tx">1.000ms</span><div class="dd"></div></div>
<div class="sbtn" style="left:1866px;top:328px;width:33px"><svg width="31" height="18"><path d="M13 4L18 9L13 14" stroke="#c4dcf2" stroke-width="1.1" fill="none"/></svg></div>

<!-- Zoom vertically -->
<div class="grp" style="left:1738px;top:382px;width:173px;height:124px"></div>
<div class="glab" style="left:1746px;top:374px">Zoom vertically</div>
<div class="sbtn mono" style="left:1749px;top:396px;width:33px;height:20px;font-size:13px;letter-spacing:-0.4px">CH</div>
<div class="combo" style="left:1788px;top:395px;width:68px"><span class="tx" style="letter-spacing:-0.9px">CH1</span><div class="dd"></div></div>
<div class="abs" style="left:1861px;top:400px;width:13px;height:13px;background:#fff;box-shadow:inset 1px 1px 0 #777"><svg width="13" height="13"><path d="M3 6L5.5 9L10 3.5" stroke="#000" stroke-width="2" fill="none"/></svg></div>
<div class="lab" style="left:1879px;top:398px;background:#3b3b3b;padding-right:2px;letter-spacing:-0.7px">ON/OFF</div>
<div class="sbtn" style="left:1749px;top:430px;width:33px"><svg width="31" height="18"><path d="M18 4L13 9L18 14" stroke="#c4dcf2" stroke-width="1.1" fill="none"/></svg></div>
<div class="combo" style="left:1788px;top:430px;width:68px;height:21px"><span class="tx">100V</span>
 <div class="dd sp" style="bottom:50%"></div><div class="dd sp" style="top:50%"></div>
 <svg width="17" height="17" style="position:absolute;right:0;top:0"><path d="M6.5 5.8L8.5 3.5L10.5 5.8ZM6.5 11.2L8.5 13.5L10.5 11.2Z" fill="#000"/></svg></div>
<div class="sbtn" style="left:1866px;top:430px;width:33px"><svg width="31" height="18"><path d="M13 4L18 9L13 14" stroke="#c4dcf2" stroke-width="1.1" fill="none"/></svg></div>
<div class="sbtn" style="left:1749px;top:465px;width:33px"><svg width="31" height="18"><path d="M18 4L13 9L18 14" stroke="#c4dcf2" stroke-width="1.1" fill="none"/></svg></div>
<div class="combo" style="left:1788px;top:464px;width:68px"><span class="tx">20:1</span><div class="dd"></div></div>
<div class="sbtn" style="left:1866px;top:465px;width:33px"><svg width="31" height="18"><path d="M13 4L18 9L13 14" stroke="#c4dcf2" stroke-width="1.1" fill="none"/></svg></div>

<!-- Recorder -->
<div class="grp" style="left:1739px;top:523px;width:172px;height:172px"></div>
<div class="glab" style="left:1746px;top:515px">Recorder</div>
<div class="combo" style="left:1749px;top:537px;width:122px;height:21px"><span class="tx" style="top:1px">C:\data.drc</span></div>
<div class="sbtn" style="left:1873px;top:538px;width:22px;height:19px;line-height:18px;letter-spacing:1.5px;font-weight:bold">...</div>
<div class="radio on" style="left:1749.5px;top:576px"></div><div class="lab" style="left:1767px;top:575px">Storage</div>
<div class="radio" style="left:1819.5px;top:576px"></div><div class="lab" style="left:1837px;top:575px">Play Back</div>
<div class="lab" style="left:1755px;top:603px">Interval(S)</div>
<div class="combo dis" style="left:1815px;top:599px;width:80px"><span class="tx">Fastest</span><div class="dd"></div></div>
<div class="sbtn serif" style="left:1749px;top:640px;width:60px;height:25px;line-height:24px;font-size:14px;letter-spacing:1.5px;padding-left:2px">Start</div>
<div class="sbtn serif dis" style="left:1834px;top:640px;width:60px;height:25px;line-height:24px;font-size:14px;letter-spacing:0.6px">Stop</div>
<div class="abs" style="left:1737px;top:508px;width:179px;height:198px;border:3px solid #fb3636"></div>
</body>
</html>
